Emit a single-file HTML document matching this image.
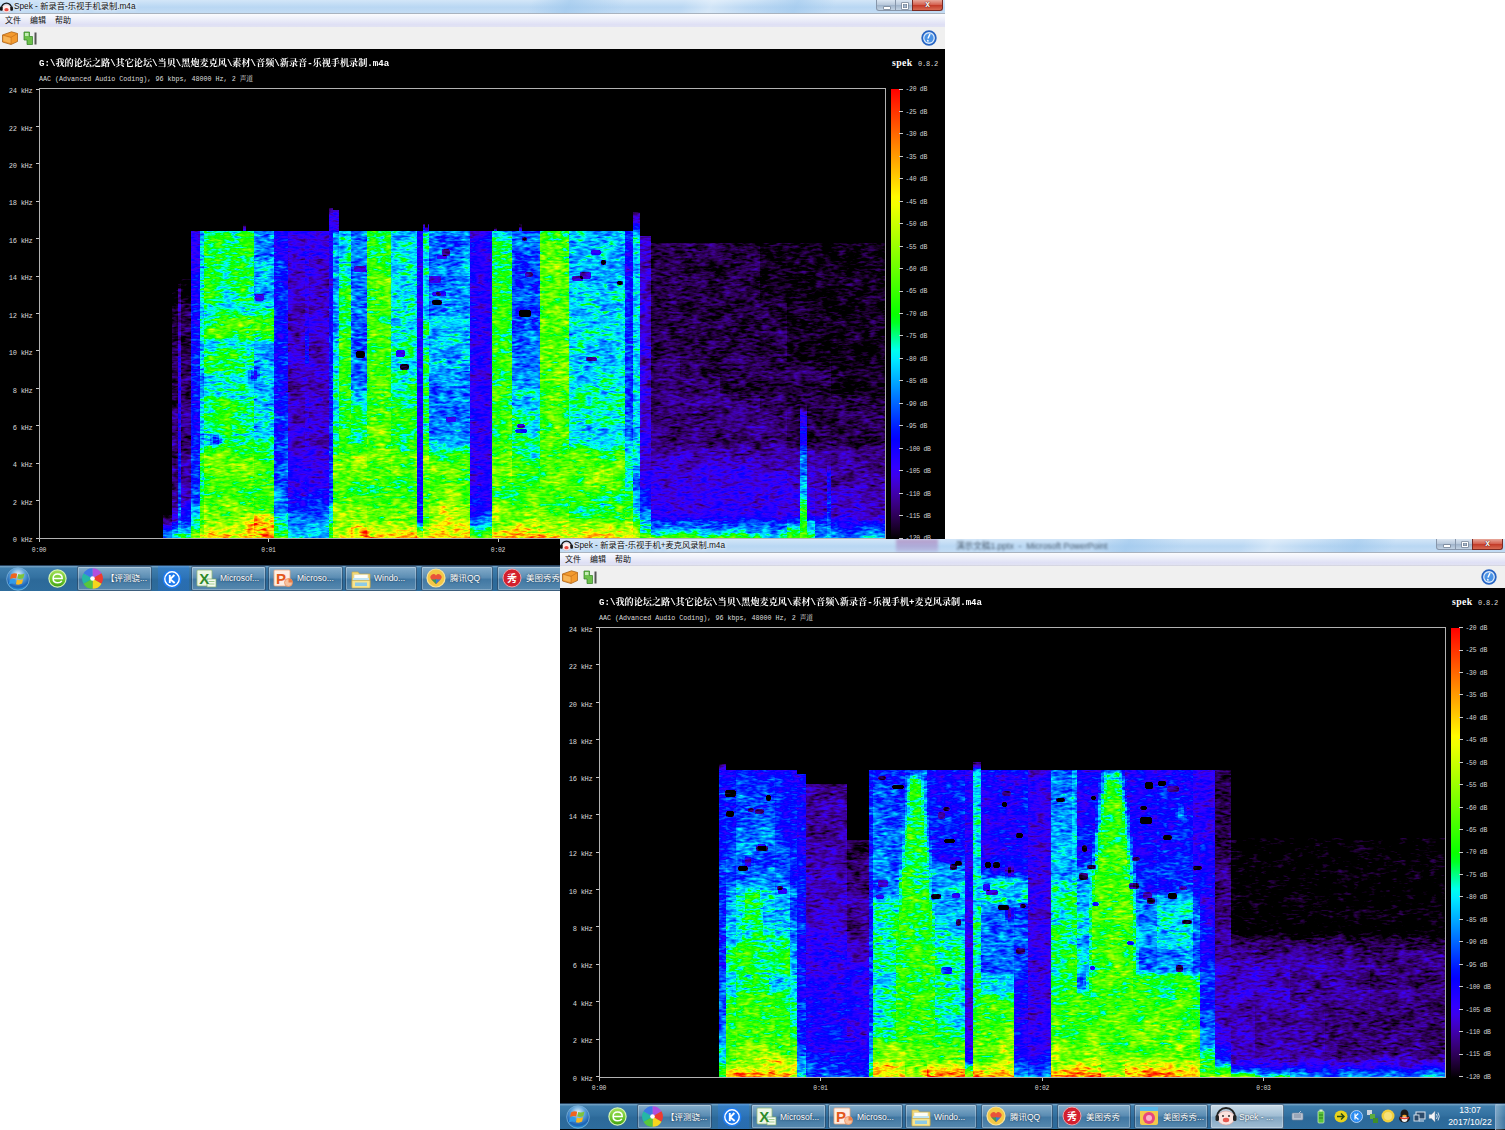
<!DOCTYPE html><html lang="zh"><head><meta charset="utf-8"><title>Spek</title><style>
*{margin:0;padding:0;box-sizing:border-box}
html,body{width:1505px;height:1130px;background:#fff;overflow:hidden}
body{position:relative;font-family:"Liberation Sans","Noto Sans CJK SC",sans-serif}
.win{position:absolute;width:945px;height:591px;overflow:hidden;background:#000}
.tb{position:absolute;left:0;top:0;width:945px;height:14px;background:linear-gradient(115deg,transparent 56%,rgba(150,195,235,.55) 60%,transparent 66%,transparent 72%,rgba(255,255,255,.35) 75%,transparent 79%,rgba(150,195,235,.5) 84%,transparent 88%),linear-gradient(#d3e6f8,#b9d7f3 55%,#c3dcf4);border-bottom:1px solid #a9b3bf}
.tb .ttl{position:absolute;left:14px;top:1px;font-size:8.25px;line-height:12px;color:#111;white-space:nowrap;text-shadow:0 0 3px #fff,0 0 5px #fff}
.tb .ttl s{text-decoration:none;font-size:7.85px}
.tb .ico{position:absolute;left:1px;top:2px;width:10px;height:10px;border-radius:5px;background:radial-gradient(circle at 40% 45%,#fff 0 25%,#f3c9c0 40%,#c8362c 75%,#7a1a14)}
.ctl{position:absolute;top:0;height:11px;border:1px solid #8796aa;border-top:0}
.ctl.min{left:876px;width:20px;border-radius:0 0 0 3px;background:linear-gradient(#dbe6f2,#b7c7da 50%,#9fb3ca 52%,#c2d2e3)}
.ctl.max{left:895px;width:18px;background:linear-gradient(#dbe6f2,#b7c7da 50%,#9fb3ca 52%,#c2d2e3)}
.ctl.cls{left:912px;width:31px;border-radius:0 0 3px 0;border-color:#7a2a22;background:linear-gradient(#e7a99c,#d4604f 48%,#c23a28 52%,#d86a52)}
.ctl i{position:absolute;display:block}
.ctl.min i{left:7px;top:6.5px;width:5.5px;height:2px;background:#fff;box-shadow:0 0 0 .6px #6b7686}
.ctl.max i{left:5.5px;top:3px;width:6.5px;height:5.5px;border:1.5px solid #fff;box-shadow:0 0 0 .6px #6b7686,inset 0 0 0 .5px #6b7686}
.ctl.cls span{position:absolute;left:0;width:100%;top:-2px;text-align:center;font:bold 8.5px/13px "Liberation Sans",sans-serif;color:#fff;text-shadow:0 0 1px #5b1a12,0 0 1px #5b1a12}
.mb{position:absolute;left:0;top:14px;width:945px;height:13.5px;background:linear-gradient(#fbfcfe,#eceef9 40%,#dfe0f5 75%,#e1e2f3 90%,#cfcfd8)}
.mb span{position:absolute;top:1px;font-size:8px;line-height:12px;color:#111;white-space:nowrap}
.tool{position:absolute;left:0;top:27px;width:945px;height:22px;background:#f0f0f0}
.cv{position:absolute;left:0;top:49px;width:945px;height:516px;background:#000}
.path{position:absolute;left:39px;top:58px;height:12px;font:bold 9.5px/12px "Liberation Mono","Noto Serif CJK SC",serif;color:#fff;white-space:nowrap;transform-origin:0 50%;transform:scaleX(.96)}
.info{position:absolute;left:39px;top:74px;height:10px;font:6.7px/10px "Liberation Mono","Noto Serif CJK SC",monospace;color:#ddd;white-space:nowrap;transform-origin:0 50%}
.spk{position:absolute;left:892px;top:57px;height:12px;font:bold 9.8px/12px "Liberation Serif",serif;color:#fff;white-space:nowrap;letter-spacing:.35px}
.ver{position:absolute;left:918px;top:58px;height:12px;font:7px/12px "Liberation Mono",monospace;color:#ddd;white-space:nowrap;letter-spacing:-.2px}
.frame{position:absolute;left:39px;top:88px;width:847px;height:451px;border:1px solid #b2b2b2;pointer-events:none}
.yl{position:absolute;left:0;width:32.5px;text-align:right;font:7px/8px "Liberation Mono",monospace;color:#d8d8d8;white-space:nowrap;letter-spacing:-.25px}
.yt{position:absolute;left:36px;width:3px;height:1px;background:#c8c8c8}
.xl{position:absolute;top:545.5px;width:40px;margin-left:-20px;text-align:center;font:6.4px/10px "Liberation Mono",monospace;color:#d8d8d8;letter-spacing:-.25px}
.xt{position:absolute;top:539px;width:1px;height:3px;background:#c8c8c8}
.cbar{position:absolute;left:891px;top:89px;width:9px;height:450px}
.dl{position:absolute;left:905.5px;width:40px;font:6.4px/8px "Liberation Mono",monospace;color:#d8d8d8;white-space:nowrap;letter-spacing:-.25px}
.dt{position:absolute;left:899px;width:4px;height:1px;background:#c8c8c8}
.plot{position:absolute;left:39px;top:89px;width:847px;height:449px;overflow:hidden;background:#000;filter:url(#pal)}
.plot i{position:absolute;top:0;height:449px;display:block}
.task{position:absolute;left:0;top:564.500px;width:945px;height:26px;background:linear-gradient(#7aa6c6,#3f7eac 9%,#3371a1 45%,#2c6999 55%,#2e6c9c 100%);border-top:1px solid #27425e}
.tbtn{position:absolute;top:0;height:25px;border:1px solid rgba(22,52,84,.6);border-radius:2px;background:linear-gradient(rgba(255,255,255,.36),rgba(255,255,255,.2) 46%,rgba(255,255,255,.1) 54%,rgba(255,255,255,.2));box-shadow:inset 0 0 0 1px rgba(255,255,255,.28)}
.tbtn.act{background:linear-gradient(rgba(255,255,255,.72),rgba(255,255,255,.55) 46%,rgba(255,255,255,.42) 54%,rgba(255,255,255,.55))}
.tbtn b{position:absolute;left:28px;top:6.5px;font:normal 8.5px/11px "Liberation Sans","Noto Sans CJK SC",sans-serif;color:#fff;white-space:nowrap;text-shadow:0 0 2px #123}
.tbtn b s{text-decoration:none;font-size:7.9px}
.tico{position:absolute;display:block}
.clock{position:absolute;left:880px;top:566.500px;width:60px;text-align:center;font:8.7px/11.5px "Liberation Sans",sans-serif;color:#fff;white-space:nowrap}
</style></head><body><svg width="0" height="0" style="position:absolute"><defs><filter id="pal" x="0" y="0" width="100%" height="100%" color-interpolation-filters="sRGB"><feColorMatrix in="SourceGraphic" type="matrix" values=".3333 .3333 .3333 0 0 .3333 .3333 .3333 0 0 .3333 .3333 .3333 0 0 0 0 0 0 1" result="lv0"/><feGaussianBlur in="lv0" stdDeviation="0.7 0.5" result="lv"/><feTurbulence type="fractalNoise" baseFrequency="0.13 0.4" numOctaves="2" seed="4" result="n1"/><feTurbulence type="fractalNoise" baseFrequency="0.045 0.075" numOctaves="2" seed="9" result="n2"/><feComposite in="n1" in2="n2" operator="arithmetic" k1="0" k2=".62" k3=".38" k4="0" result="n"/><feColorMatrix in="n" type="matrix" values="1 0 0 0 0 1 0 0 0 0 1 0 0 0 0 0 0 0 0 1" result="ng"/><feComposite in="lv" in2="ng" operator="arithmetic" k1=".72" k2=".64" k3=".1" k4="-.05" result="s"/><feComponentTransfer in="s" result="c"><feFuncR type="table" tableValues="0 0 0 0 0 0 0 0 0 0 0 0 0 0 0 0 0 0 0 0 0 0.0422 0.0805 0.115 0.145 0.172 0.195 0.214 0.228 0.239 0.247 0.25 0.249 0.244 0.236 0.224 0.196 0.166 0.137 0.107 0.0778 0.0483 0.0189 0 0 0 0 0 0 0 0 0 0 0 0 0 0 0 0 0 0 0 0 0 0 0 0 0 0 0 0.0357 0.0736 0.111 0.149 0.187 0.225 0.263 0.301 0.339 0.376 0.414 0.452 0.49 0.528 0.566 0.604 0.641 0.679 0.717 0.755 0.793 0.831 0.869 0.906 0.944 0.982 1 1 1 1 1 1 1 1 1 1 1 1 1 1 1 1 1 1 1 1 1 1 1 1 1"/><feFuncG type="table" tableValues="0 0 0 0 0 0 0 0 0 0 0 0 0 0 0 0 0 0 0 0 0 0 0 0 0 0 0 0 0 0 0 0 0 0 0 0 0 0 0 0 0 0 0 0.019 0.072 0.125 0.178 0.231 0.284 0.337 0.39 0.443 0.496 0.549 0.602 0.655 0.708 0.761 0.814 0.867 0.92 0.973 1 1 1 1 1 1 1 1 1 1 1 1 1 1 1 1 1 1 1 1 1 1 1 1 1 1 1 1 1 1 1 1 1 1 0.978 0.938 0.897 0.856 0.815 0.775 0.734 0.693 0.652 0.612 0.571 0.53 0.489 0.448 0.408 0.367 0.326 0.285 0.245 0.204 0.163 0.122 0.0815 0.0408 0"/><feFuncB type="table" tableValues="0 0 0 0 0 0 0 0 0 0 0 0 0 0 0 0 0 0 0 0 0 0.0662 0.132 0.199 0.265 0.331 0.397 0.464 0.53 0.596 0.662 0.729 0.795 0.861 0.927 0.994 1 1 1 1 1 1 1 1 1 1 1 1 1 1 1 1 1 1 1 1 1 1 1 1 1 1 0.935 0.803 0.67 0.538 0.405 0.273 0.14 0.0075 0 0 0 0 0 0 0 0 0 0 0 0 0 0 0 0 0 0 0 0 0 0 0 0 0 0 0 0 0 0 0 0 0 0 0 0 0 0 0 0 0 0 0 0 0 0 0 0 0 0 0"/></feComponentTransfer><feGaussianBlur in="c" stdDeviation="0.55"/></filter></defs></svg><div class="win" style="left:0px;top:0px"><div class="tb"><svg class="tico" style="left:0;top:1.500px" width="13" height="11" viewBox="0 0 24 20"><path d="M3 11a9 9 0 0 1 18 0" fill="none" stroke="#111" stroke-width="2.500"/><ellipse cx="12" cy="12" rx="8.500" ry="7" fill="#fdeeee" stroke="#d79a95" stroke-width=".6"/><rect x="0" y="8" width="5" height="8" rx="2" fill="#111"/><rect x="19" y="8" width="5" height="8" rx="2" fill="#111"/><ellipse cx="12" cy="14" rx="4" ry="3" fill="#e8473e"/></svg><div class="ttl">Spek - 新录音-乐视手机录制.m4a</div><div class="ctl min"><i></i></div><div class="ctl max"><i></i></div><div class="ctl cls"><span>x</span></div></div><div class="mb"><span style="left:5px">文件</span><span style="left:30px">编辑</span><span style="left:55px">帮助</span></div><div class="tool"><svg class="tico" style="left:1px;top:3px" width="18" height="16" viewBox="0 0 18 16"><path d="M1.500 5l9-3.200l6 1.700v8l-6.500 3l-8.500-2.500z" fill="#f39a2e" stroke="#a9631a" stroke-width=".8"/><path d="M1.500 5l8.500 2.300l6.500-3.800M10 7.300v7" fill="none" stroke="#c9741d" stroke-width=".8"/><path d="M2.500 6l7 2v5l-7-2z" fill="#f7b558"/></svg><svg class="tico" style="left:22px;top:3px" width="17" height="16" viewBox="0 0 17 16"><rect x="12.500" y="2.500" width="2" height="12" fill="#555"/><path d="M2 2h5.500v4.500h3v8h-5.500v-4.500h-3z" fill="#6cc04a" stroke="#2f7d23" stroke-width=".7"/><path d="M3 3h3.500v3h-3.500z" fill="#c5ecb4"/></svg><svg class="tico" style="left:921px;top:3px" width="16" height="16" viewBox="0 0 16 16"><circle cx="8" cy="8" r="6.800" fill="#dbeafb" stroke="#2765c4" stroke-width="1.800"/><circle cx="8" cy="8" r="4.600" fill="#4b93e6"/><path d="M8.800 4.500l-1.600 3.500M6.800 10.500l.2.600" stroke="#fff" stroke-width="1.500" stroke-linecap="round"/></svg></div><div class="cv"></div><div class="path">G:\我的论坛之路\其它论坛\当贝\黑炮麦克风\素材\音频\新录音-乐视手机录制.m4a</div><div class="info">AAC (Advanced Audio Coding), 96 kbps, 48000 Hz, 2 声道</div><div class="spk">spek</div><div class="ver">0.8.2</div><div class="plot"><i style="left:124px;width:3.1px;background:linear-gradient(#000 94.2%,#222 94.2%,#333,#444,#555,#666,#776)"></i><i style="left:127px;width:3.1px;background:linear-gradient(#000 94.2%,#222 94.2%,#333,#444,#555,#666,#776)"></i><i style="left:130px;width:3.1px;background:linear-gradient(#000 94.2%,#222 94.2%,#333,#444,#555,#666,#776)"></i><i style="left:133px;width:3.1px;background:linear-gradient(#000 44.8%,#322 44.8%,#322,#322,#322,#332,#332,#332,#333,#333,#333,#333,#333,#333,#333,#333,#333,#333,#333,#333,#333,#333,#333,#333,#333,#333,#433,#433,#433,#433,#433,#433,#433,#433,#433,#433,#433,#433,#433,#433,#433,#433,#433,#433,#443,#444,#444,#544,#555,#666,#776,#877)"></i><i style="left:136px;width:3.1px;background:linear-gradient(#000 44.8%,#322 44.8%,#322,#322,#322,#332,#332,#332,#333,#333,#333,#333,#333,#333,#333,#333,#333,#333,#333,#333,#333,#333,#333,#333,#333,#333,#433,#433,#433,#433,#433,#433,#433,#433,#433,#433,#433,#433,#433,#433,#433,#433,#433,#433,#443,#444,#444,#544,#555,#666,#776,#877)"></i><i style="left:139px;width:3.1px;background:linear-gradient(#000 42.5%,#322 42.5%,#332,#333,#433,#433,#443,#443,#443,#443,#444,#444,#444,#444,#444,#444,#444,#544,#544,#544,#544,#544,#544,#554,#554,#554,#554,#554,#554,#554,#555,#555,#555,#555,#555,#555,#655,#655,#655,#655,#655,#655,#665,#665,#666,#666,#666,#766,#766,#766,#776,#777,#877,#877)"></i><i style="left:142px;width:2.6px;background:linear-gradient(#000 40.3%,#222 40.3%,#222,#322,#322,#322,#322,#332,#332,#332,#333,#333,#433,#433,#333,#333,#333,#333,#333,#333,#333,#333,#333,#433,#433,#433,#433,#433,#433,#433,#433,#433,#433,#433,#433,#433,#433,#433,#433,#433,#443,#443,#443,#443,#443,#444,#444,#444,#544,#554,#555,#655,#666,#776,#877,#988)"></i><i style="left:144.5px;width:2.6px;background:linear-gradient(#000 40.3%,#222 40.3%,#222,#322,#322,#322,#322,#332,#332,#332,#333,#333,#433,#433,#333,#333,#333,#333,#333,#333,#333,#333,#333,#433,#433,#433,#433,#433,#433,#433,#433,#433,#433,#433,#433,#433,#433,#433,#433,#433,#443,#443,#443,#443,#443,#444,#444,#444,#544,#554,#555,#655,#666,#776,#877,#988)"></i><i style="left:147px;width:2.6px;background:linear-gradient(#000 40.3%,#222 40.3%,#222,#322,#322,#322,#322,#332,#332,#332,#333,#333,#433,#433,#333,#333,#333,#333,#333,#333,#333,#333,#333,#433,#433,#433,#433,#433,#433,#433,#433,#433,#433,#433,#433,#433,#433,#433,#433,#433,#443,#443,#443,#443,#443,#444,#444,#444,#544,#554,#555,#655,#666,#776,#877,#988)"></i><i style="left:149.5px;width:2.6px;background:linear-gradient(#000 40.3%,#222 40.3%,#222,#322,#322,#322,#322,#332,#332,#332,#333,#333,#433,#433,#333,#333,#333,#333,#333,#333,#333,#333,#333,#433,#433,#433,#433,#433,#433,#433,#433,#433,#433,#433,#433,#433,#433,#433,#433,#433,#443,#443,#443,#443,#443,#444,#444,#444,#544,#554,#555,#655,#666,#776,#877,#988)"></i><i style="left:152px;width:3.1px;background:linear-gradient(#000 31.6%,#554 31.6%,#554,#554,#554,#554,#554,#554,#554,#555,#555,#555,#555,#555,#555,#555,#555,#655,#655,#655,#655,#655,#655,#655,#655,#655,#655,#655,#655,#655,#655,#655,#655,#655,#655,#655,#655,#655,#655,#655,#655,#655,#655,#655,#655,#665,#665,#665,#665,#665,#665,#665,#666,#666,#666,#766,#776,#777,#887,#888,#998,#a99,#aaa)"></i><i style="left:155px;width:3.1px;background:linear-gradient(#000 31.6%,#554 31.6%,#554,#554,#554,#554,#554,#554,#554,#555,#555,#555,#555,#555,#555,#555,#555,#655,#655,#655,#665,#655,#655,#655,#655,#655,#655,#655,#655,#655,#655,#655,#655,#655,#655,#655,#655,#655,#655,#655,#655,#655,#655,#655,#655,#665,#665,#665,#665,#665,#665,#665,#666,#666,#666,#766,#776,#777,#887,#888,#998,#a99,#aaa)"></i><i style="left:158px;width:3.1px;background:linear-gradient(#000 31.6%,#554 31.6%,#554,#554,#554,#554,#554,#554,#554,#555,#555,#555,#555,#555,#555,#555,#555,#655,#655,#655,#665,#655,#655,#655,#655,#655,#655,#655,#655,#655,#655,#655,#655,#655,#655,#655,#655,#655,#655,#655,#655,#655,#655,#655,#655,#665,#665,#665,#665,#665,#665,#665,#666,#666,#666,#766,#776,#777,#887,#888,#998,#a99,#aaa)"></i><i style="left:161px;width:2.1px;background:linear-gradient(#000 31.6%,#777 31.6%,#877,#877,#877,#877,#877,#877,#877,#877,#877,#877,#877,#877,#877,#877,#776,#776,#887,#988,#988,#988,#888,#776,#776,#777,#877,#877,#877,#877,#776,#776,#776,#776,#776,#887,#887,#887,#887,#887,#887,#877,#777,#777,#887,#988,#999,#999,#999,#999,#998,#988,#988,#888,#988,#998,#999,#999,#a99,#a99,#aaa,#bba,#ccb)"></i><i style="left:163px;width:2.1px;background:linear-gradient(#000 31.6%,#777 31.6%,#877,#877,#877,#877,#877,#877,#877,#877,#877,#877,#877,#877,#877,#877,#776,#776,#887,#988,#988,#988,#888,#776,#776,#777,#877,#877,#877,#877,#776,#776,#776,#776,#776,#887,#887,#887,#887,#887,#887,#877,#777,#777,#887,#988,#999,#999,#999,#999,#998,#988,#988,#888,#988,#998,#999,#999,#a99,#a99,#aaa,#bba,#ccb)"></i><i style="left:165px;width:3.1px;background:linear-gradient(#000 31.6%,#888 31.6%,#998,#998,#998,#998,#998,#998,#998,#998,#998,#998,#998,#998,#998,#988,#887,#887,#998,#a99,#a99,#a99,#999,#887,#887,#888,#998,#998,#998,#998,#887,#887,#887,#887,#887,#998,#998,#998,#998,#998,#998,#988,#887,#887,#998,#a99,#aaa,#aaa,#aaa,#aaa,#aa9,#a99,#a99,#999,#a99,#aa9,#aaa,#aaa,#baa,#baa,#bbb,#ccb,#ddc)"></i><i style="left:167.9px;width:3.1px;background:linear-gradient(#000 31.6%,#888 31.6%,#998,#998,#998,#998,#998,#998,#998,#998,#998,#998,#998,#998,#998,#988,#887,#887,#998,#a99,#a99,#a99,#999,#887,#887,#888,#998,#998,#998,#998,#887,#887,#887,#887,#887,#998,#998,#998,#998,#998,#998,#988,#877,#877,#998,#a99,#aaa,#aaa,#aaa,#aaa,#aa9,#a99,#a99,#999,#a99,#aa9,#aaa,#aaa,#baa,#baa,#bbb,#ccb,#ddc)"></i><i style="left:170.9px;width:3.1px;background:linear-gradient(#000 31.6%,#888 31.6%,#998,#998,#998,#998,#998,#998,#998,#998,#998,#998,#998,#998,#998,#988,#887,#887,#998,#a99,#a99,#a99,#999,#887,#887,#888,#998,#998,#998,#998,#887,#887,#887,#887,#887,#998,#998,#998,#998,#998,#998,#988,#766,#766,#998,#a99,#aaa,#aaa,#aaa,#aaa,#aa9,#a99,#a99,#999,#a99,#aa9,#aaa,#aaa,#baa,#baa,#bbb,#ccb,#ddc)"></i><i style="left:173.8px;width:3.1px;background:linear-gradient(#000 31.6%,#888 31.6%,#998,#998,#998,#998,#998,#998,#998,#998,#998,#998,#998,#998,#998,#988,#887,#887,#998,#a99,#a99,#a99,#999,#887,#887,#888,#998,#998,#998,#998,#887,#887,#887,#887,#887,#998,#998,#998,#998,#998,#998,#988,#665,#655,#998,#a99,#aaa,#aaa,#aaa,#aaa,#aa9,#a99,#a99,#999,#a99,#aa9,#aaa,#aaa,#baa,#baa,#bbb,#ccb,#ddc)"></i><i style="left:176.8px;width:3.1px;background:linear-gradient(#000 31.6%,#888 31.6%,#998,#998,#998,#998,#998,#998,#998,#998,#998,#998,#998,#998,#998,#988,#887,#887,#998,#a99,#aa9,#a99,#999,#887,#887,#888,#998,#998,#998,#998,#887,#887,#887,#887,#887,#998,#998,#998,#998,#998,#998,#988,#666,#665,#998,#a99,#aaa,#aaa,#aaa,#aaa,#aa9,#a99,#a99,#999,#a99,#aa9,#aaa,#aaa,#baa,#baa,#bbb,#ccb,#ddc)"></i><i style="left:179.7px;width:3.1px;background:linear-gradient(#000 31.6%,#888 31.6%,#998,#998,#998,#998,#998,#998,#998,#998,#998,#998,#998,#998,#998,#988,#887,#888,#999,#a99,#aa9,#a99,#999,#887,#887,#888,#998,#998,#998,#998,#887,#887,#887,#887,#887,#998,#998,#998,#998,#998,#998,#988,#777,#777,#998,#a99,#aaa,#aaa,#aaa,#aaa,#aa9,#a99,#a99,#999,#a99,#aa9,#aaa,#aaa,#baa,#baa,#bbb,#ccb,#ddc)"></i><i style="left:182.6px;width:3.1px;background:linear-gradient(#000 31.6%,#888 31.6%,#998,#998,#998,#998,#998,#998,#998,#998,#998,#998,#998,#998,#998,#988,#887,#888,#999,#a99,#aa9,#a99,#999,#887,#887,#888,#998,#998,#998,#998,#887,#887,#887,#887,#887,#998,#998,#998,#998,#998,#998,#988,#887,#887,#998,#a99,#aaa,#aaa,#aaa,#aaa,#aa9,#a99,#a99,#999,#a99,#aa9,#aaa,#aaa,#baa,#baa,#bbb,#ccb,#ddc)"></i><i style="left:185.6px;width:3.1px;background:linear-gradient(#000 31.6%,#888 31.6%,#998,#998,#998,#998,#998,#998,#998,#998,#998,#998,#998,#998,#998,#988,#887,#888,#999,#a99,#aa9,#a99,#999,#887,#887,#888,#998,#998,#998,#998,#887,#887,#887,#887,#887,#998,#998,#998,#998,#998,#998,#988,#888,#888,#998,#a99,#aaa,#aaa,#aaa,#aaa,#aa9,#a99,#a99,#999,#a99,#aa9,#aaa,#aaa,#baa,#baa,#bbb,#ccb,#ddc)"></i><i style="left:188.5px;width:3.1px;background:linear-gradient(#000 31.6%,#888 31.6%,#998,#998,#998,#998,#998,#998,#998,#998,#998,#998,#998,#998,#998,#988,#887,#888,#999,#a99,#aa9,#a99,#999,#887,#887,#888,#998,#998,#998,#998,#887,#887,#887,#887,#887,#998,#998,#998,#998,#998,#998,#988,#888,#888,#998,#a99,#aaa,#aaa,#aaa,#aaa,#aa9,#a99,#a99,#999,#a99,#aa9,#aaa,#aaa,#baa,#baa,#bbb,#ccb,#ddc)"></i><i style="left:191.5px;width:3.1px;background:linear-gradient(#000 31.6%,#888 31.6%,#998,#998,#998,#998,#998,#998,#998,#998,#998,#998,#998,#998,#998,#988,#887,#888,#999,#a99,#aa9,#a99,#999,#887,#887,#888,#998,#998,#998,#998,#887,#887,#887,#887,#887,#998,#998,#998,#998,#998,#998,#988,#888,#888,#998,#a99,#aaa,#aaa,#aaa,#aaa,#aa9,#a99,#a99,#999,#a99,#aa9,#aaa,#aaa,#baa,#baa,#bbb,#ccb,#ddc)"></i><i style="left:194.4px;width:3.1px;background:linear-gradient(#000 31.6%,#888 31.6%,#998,#998,#998,#998,#998,#998,#998,#998,#998,#998,#998,#998,#998,#988,#887,#888,#999,#a99,#aa9,#a99,#999,#887,#887,#888,#998,#998,#998,#998,#887,#887,#887,#887,#887,#998,#998,#998,#998,#998,#998,#988,#888,#888,#998,#a99,#aaa,#aaa,#aaa,#aaa,#aa9,#a99,#a99,#999,#a99,#aa9,#aaa,#aaa,#baa,#bba,#bbb,#ccb,#ddc)"></i><i style="left:197.4px;width:3.1px;background:linear-gradient(#000 31.6%,#888 31.6%,#998,#998,#998,#998,#998,#998,#998,#998,#998,#998,#998,#998,#998,#988,#887,#888,#999,#a99,#aa9,#a99,#999,#887,#887,#888,#998,#998,#998,#998,#887,#887,#887,#887,#887,#998,#998,#998,#998,#998,#998,#988,#888,#888,#998,#a99,#aaa,#aaa,#aaa,#aaa,#aa9,#a99,#a99,#999,#a99,#aa9,#aaa,#aaa,#baa,#bba,#bbb,#ccb,#ddc)"></i><i style="left:200.3px;width:3.1px;background:linear-gradient(#000 31.6%,#888 31.6%,#998,#998,#998,#998,#998,#998,#998,#998,#998,#998,#998,#998,#998,#988,#887,#888,#999,#a99,#aa9,#a99,#999,#887,#887,#888,#998,#998,#998,#998,#887,#887,#887,#887,#887,#998,#998,#998,#998,#998,#998,#988,#888,#888,#998,#a99,#aaa,#aaa,#aaa,#aaa,#aa9,#a99,#a99,#999,#a99,#aa9,#aaa,#aaa,#baa,#bba,#bbb,#ccb,#ddc)"></i><i style="left:203.2px;width:3.1px;background:linear-gradient(#000 31.6%,#888 31.6%,#998,#998,#998,#998,#998,#998,#998,#998,#998,#998,#998,#998,#998,#988,#887,#888,#999,#a99,#aa9,#a99,#999,#887,#887,#888,#998,#998,#998,#988,#887,#887,#887,#887,#887,#998,#998,#998,#998,#998,#998,#988,#888,#888,#998,#a99,#aaa,#aaa,#aaa,#aaa,#aa9,#a99,#a99,#999,#a99,#aa9,#aaa,#aaa,#baa,#bbb,#bbb,#ccc,#ddc)"></i><i style="left:206.2px;width:3.1px;background:linear-gradient(#000 31.6%,#888 31.6%,#998,#998,#998,#998,#998,#998,#998,#998,#998,#998,#998,#998,#998,#988,#887,#887,#998,#a99,#aa9,#a99,#999,#887,#887,#888,#998,#998,#988,#988,#887,#887,#887,#887,#887,#998,#998,#998,#998,#998,#998,#988,#888,#888,#998,#a99,#aaa,#aaa,#aaa,#aaa,#aa9,#a99,#a99,#999,#a99,#aa9,#aaa,#aaa,#bba,#cbb,#bbb,#ccc,#ddc)"></i><i style="left:209.1px;width:3.1px;background:linear-gradient(#000 31.6%,#888 31.6%,#998,#998,#998,#998,#998,#998,#998,#998,#998,#998,#998,#998,#998,#988,#887,#887,#998,#a99,#a99,#a99,#999,#887,#887,#888,#998,#998,#988,#887,#776,#877,#887,#887,#887,#998,#998,#998,#998,#998,#998,#988,#888,#888,#998,#a99,#aaa,#aaa,#aaa,#aaa,#aa9,#a99,#a99,#999,#a99,#aa9,#aaa,#aaa,#bba,#cbb,#cbb,#ccc,#ddc)"></i><i style="left:212.1px;width:3.1px;background:linear-gradient(#000 31.6%,#888 31.6%,#998,#998,#998,#998,#998,#998,#998,#998,#998,#998,#998,#998,#998,#988,#887,#887,#998,#a99,#a99,#a99,#999,#887,#887,#888,#998,#998,#988,#776,#555,#877,#887,#887,#887,#998,#998,#998,#998,#998,#998,#988,#888,#888,#998,#a99,#aaa,#aaa,#aaa,#aaa,#aa9,#a99,#a99,#999,#a99,#aa9,#aaa,#aaa,#bbb,#ccb,#cbb,#ccc,#ddc)"></i><i style="left:215px;width:3px;background:linear-gradient(#000 31.6%,#776 31.6%,#776,#776,#776,#776,#776,#777,#777,#777,#777,#777,#777,#777,#777,#877,#877,#887,#998,#999,#999,#999,#998,#887,#777,#777,#777,#777,#777,#555,#544,#776,#777,#777,#777,#777,#877,#877,#877,#877,#877,#887,#887,#888,#988,#999,#999,#a99,#a99,#a99,#a99,#a99,#999,#999,#998,#999,#aa9,#bba,#dcc,#edd,#ddc,#ddc,#edd)"></i><i style="left:217.9px;width:3px;background:linear-gradient(#000 31.6%,#776 31.6%,#776,#776,#776,#776,#776,#777,#777,#777,#777,#777,#777,#777,#777,#877,#877,#887,#998,#999,#999,#999,#998,#887,#777,#777,#777,#777,#777,#666,#666,#777,#777,#777,#777,#777,#877,#877,#877,#877,#877,#887,#887,#888,#988,#999,#999,#a99,#a99,#a99,#a99,#a99,#999,#999,#998,#999,#aa9,#baa,#ccc,#ddd,#ddc,#ddc,#edd)"></i><i style="left:220.7px;width:3px;background:linear-gradient(#000 31.6%,#776 31.6%,#776,#776,#776,#776,#776,#777,#777,#777,#777,#777,#777,#777,#777,#877,#877,#887,#998,#999,#999,#998,#998,#887,#777,#777,#777,#777,#777,#777,#776,#777,#777,#777,#777,#777,#877,#877,#877,#877,#877,#887,#887,#888,#988,#999,#999,#a99,#a99,#a99,#a99,#a99,#999,#999,#998,#999,#aa9,#baa,#ccc,#ddd,#dcc,#ddc,#edd)"></i><i style="left:223.6px;width:3px;background:linear-gradient(#000 31.6%,#776 31.6%,#776,#776,#776,#776,#776,#777,#777,#777,#777,#777,#777,#777,#777,#877,#877,#887,#988,#998,#999,#998,#998,#887,#777,#777,#777,#777,#777,#777,#777,#777,#777,#777,#777,#777,#877,#877,#877,#877,#877,#887,#887,#888,#988,#999,#999,#a99,#a99,#a99,#a99,#a99,#999,#999,#998,#999,#aa9,#baa,#ccc,#ddc,#dcc,#ddc,#edd)"></i><i style="left:226.4px;width:3px;background:linear-gradient(#000 31.6%,#776 31.6%,#776,#776,#776,#776,#776,#777,#777,#777,#777,#777,#777,#777,#777,#877,#877,#887,#988,#998,#999,#998,#988,#887,#777,#777,#777,#777,#777,#777,#777,#777,#777,#777,#777,#777,#877,#877,#877,#877,#877,#887,#887,#888,#988,#999,#999,#a99,#a99,#a99,#a99,#a99,#999,#999,#998,#999,#aa9,#baa,#ccb,#dcc,#dcc,#ddc,#edd)"></i><i style="left:229.3px;width:3px;background:linear-gradient(#000 31.6%,#776 31.6%,#776,#776,#776,#776,#776,#777,#777,#777,#777,#777,#777,#777,#777,#877,#877,#887,#988,#998,#998,#998,#988,#887,#777,#777,#777,#777,#777,#777,#777,#777,#777,#777,#777,#777,#877,#877,#877,#877,#877,#887,#887,#888,#988,#999,#999,#a99,#a99,#a99,#a99,#a99,#999,#999,#998,#999,#aa9,#baa,#ccb,#dcc,#dcc,#ddc,#edd)"></i><i style="left:232.1px;width:3px;background:linear-gradient(#000 31.6%,#776 31.6%,#776,#776,#776,#776,#776,#777,#777,#777,#777,#777,#777,#777,#777,#877,#877,#887,#988,#998,#998,#998,#988,#887,#777,#777,#777,#777,#777,#777,#777,#777,#777,#777,#777,#777,#877,#877,#877,#877,#877,#887,#887,#888,#988,#999,#999,#a99,#a99,#a99,#a99,#a99,#999,#999,#998,#999,#aa9,#baa,#ccb,#ccc,#dcc,#ddc,#edd)"></i><i style="left:235px;width:2.9px;background:linear-gradient(#000 31.6%,#555 31.6%,#555,#555,#555,#555,#555,#655,#655,#655,#655,#655,#655,#655,#655,#655,#655,#655,#655,#655,#655,#655,#655,#655,#655,#655,#655,#655,#655,#655,#655,#655,#655,#655,#655,#655,#655,#655,#665,#665,#665,#665,#665,#665,#666,#666,#666,#666,#666,#666,#666,#666,#666,#766,#766,#766,#776,#777,#887,#888,#988,#998,#a99)"></i><i style="left:237.8px;width:2.9px;background:linear-gradient(#000 31.6%,#555 31.6%,#555,#555,#555,#555,#555,#655,#655,#655,#655,#655,#655,#655,#655,#655,#655,#655,#655,#655,#655,#655,#655,#655,#655,#655,#655,#655,#655,#655,#655,#655,#655,#655,#655,#655,#655,#655,#665,#665,#665,#665,#665,#665,#666,#666,#666,#666,#666,#666,#666,#666,#666,#766,#766,#766,#776,#777,#877,#888,#988,#998,#a99)"></i><i style="left:240.6px;width:2.9px;background:linear-gradient(#000 31.6%,#555 31.6%,#555,#555,#555,#555,#555,#655,#655,#655,#655,#655,#655,#655,#655,#655,#655,#655,#655,#655,#655,#655,#655,#655,#655,#655,#655,#655,#655,#655,#655,#655,#655,#655,#655,#655,#655,#655,#665,#665,#665,#665,#665,#665,#666,#666,#666,#666,#666,#666,#666,#666,#666,#766,#766,#766,#776,#777,#877,#888,#988,#998,#a99)"></i><i style="left:243.4px;width:2.9px;background:linear-gradient(#000 31.6%,#555 31.6%,#555,#555,#555,#555,#555,#655,#655,#655,#655,#655,#655,#655,#655,#655,#655,#655,#655,#655,#655,#655,#655,#655,#655,#655,#655,#655,#655,#655,#655,#655,#655,#655,#655,#655,#655,#655,#665,#665,#665,#665,#665,#665,#666,#666,#666,#666,#666,#666,#666,#666,#666,#766,#766,#766,#776,#777,#877,#888,#988,#998,#a99)"></i><i style="left:246.2px;width:2.9px;background:linear-gradient(#000 31.6%,#555 31.6%,#555,#555,#555,#555,#555,#655,#655,#655,#655,#655,#655,#655,#655,#655,#655,#655,#655,#655,#655,#655,#655,#655,#655,#655,#655,#655,#655,#655,#655,#655,#655,#655,#655,#655,#655,#655,#665,#665,#665,#665,#665,#665,#666,#666,#666,#666,#666,#666,#666,#666,#666,#766,#766,#766,#776,#777,#877,#888,#988,#998,#a99)"></i><i style="left:249px;width:3px;background:linear-gradient(#000 31.6%,#554 31.6%,#544,#544,#544,#544,#544,#444,#444,#444,#444,#444,#444,#444,#444,#444,#444,#444,#444,#444,#444,#444,#444,#444,#444,#444,#444,#444,#444,#444,#444,#444,#444,#444,#444,#444,#444,#444,#444,#444,#444,#444,#444,#444,#444,#544,#544,#544,#544,#554,#554,#554,#554,#555,#655,#655,#665,#666,#766,#776,#777,#877,#887)"></i><i style="left:251.8px;width:3px;background:linear-gradient(#000 31.6%,#554 31.6%,#544,#544,#544,#544,#544,#444,#444,#444,#444,#444,#444,#444,#444,#444,#444,#444,#444,#444,#444,#444,#444,#444,#444,#444,#444,#444,#444,#444,#444,#444,#444,#444,#444,#444,#444,#444,#444,#444,#444,#444,#444,#444,#444,#544,#544,#544,#544,#554,#554,#554,#554,#555,#655,#655,#665,#666,#766,#776,#777,#877,#887)"></i><i style="left:254.7px;width:3px;background:linear-gradient(#000 31.6%,#554 31.6%,#544,#544,#544,#544,#544,#444,#444,#444,#444,#444,#444,#444,#444,#444,#444,#444,#444,#444,#444,#444,#444,#444,#444,#444,#444,#444,#444,#444,#444,#444,#444,#444,#444,#444,#444,#444,#444,#444,#444,#444,#444,#444,#444,#544,#544,#544,#544,#554,#554,#554,#554,#555,#655,#655,#665,#666,#766,#776,#777,#877,#887)"></i><i style="left:257.5px;width:3px;background:linear-gradient(#000 31.6%,#554 31.6%,#544,#544,#544,#544,#544,#444,#444,#444,#444,#444,#444,#444,#444,#444,#444,#444,#444,#444,#444,#444,#444,#444,#444,#444,#444,#444,#444,#444,#444,#444,#444,#444,#444,#444,#444,#444,#444,#444,#444,#444,#444,#444,#444,#544,#544,#544,#544,#554,#554,#554,#554,#555,#655,#655,#665,#666,#766,#776,#777,#877,#887)"></i><i style="left:260.3px;width:3px;background:linear-gradient(#000 31.6%,#554 31.6%,#544,#544,#544,#544,#544,#444,#444,#444,#444,#444,#444,#444,#444,#444,#444,#444,#444,#444,#444,#444,#444,#444,#444,#444,#444,#444,#444,#444,#444,#444,#444,#444,#444,#444,#444,#444,#444,#444,#444,#444,#444,#444,#444,#544,#544,#544,#544,#554,#554,#554,#554,#555,#655,#655,#665,#666,#766,#776,#777,#877,#887)"></i><i style="left:263.2px;width:3px;background:linear-gradient(#000 31.6%,#554 31.6%,#544,#544,#544,#544,#544,#444,#444,#444,#444,#444,#444,#444,#444,#444,#444,#444,#444,#444,#444,#444,#444,#444,#444,#444,#444,#444,#444,#444,#444,#444,#444,#444,#444,#444,#444,#444,#444,#444,#444,#444,#444,#444,#444,#544,#544,#544,#544,#554,#554,#554,#554,#555,#655,#655,#665,#666,#766,#776,#777,#877,#887)"></i><i style="left:266px;width:2.1px;background:linear-gradient(#000 31.6%,#554 31.6%,#554,#554,#554,#554,#554,#554,#544,#544,#544,#544,#544,#544,#544,#544,#544,#544,#544,#544,#544,#554,#655,#655,#655,#655,#655,#555,#444,#444,#444,#444,#444,#444,#544,#544,#544,#544,#544,#544,#544,#544,#544,#544,#544,#544,#544,#544,#554,#554,#554,#555,#555,#555,#655,#665,#665,#666,#766,#776,#777,#877,#887)"></i><i style="left:268px;width:2.1px;background:linear-gradient(#000 31.6%,#554 31.6%,#554,#554,#554,#554,#554,#554,#544,#544,#544,#544,#544,#544,#544,#544,#544,#544,#544,#544,#544,#554,#655,#655,#655,#655,#655,#555,#444,#444,#444,#444,#444,#444,#544,#544,#544,#544,#544,#544,#544,#544,#544,#544,#544,#544,#544,#544,#554,#554,#554,#555,#555,#555,#655,#665,#665,#666,#766,#776,#777,#877,#887)"></i><i style="left:270px;width:3px;background:linear-gradient(#000 31.6%,#554 31.6%,#544,#544,#544,#544,#544,#444,#444,#444,#444,#444,#444,#444,#444,#444,#444,#444,#444,#444,#444,#444,#444,#444,#444,#444,#444,#444,#444,#444,#444,#444,#444,#444,#444,#444,#444,#444,#444,#444,#444,#444,#444,#444,#444,#544,#544,#544,#544,#554,#554,#554,#554,#555,#655,#655,#665,#666,#766,#776,#777,#877,#887)"></i><i style="left:272.9px;width:3px;background:linear-gradient(#000 31.6%,#554 31.6%,#544,#544,#544,#544,#544,#444,#444,#444,#444,#444,#444,#444,#444,#444,#444,#444,#444,#444,#444,#444,#444,#444,#444,#444,#444,#444,#444,#444,#444,#444,#444,#444,#444,#444,#444,#444,#444,#444,#444,#444,#444,#444,#444,#544,#544,#544,#544,#554,#554,#554,#554,#555,#655,#655,#665,#666,#766,#776,#777,#877,#887)"></i><i style="left:275.7px;width:3px;background:linear-gradient(#000 31.6%,#554 31.6%,#544,#544,#544,#544,#544,#444,#444,#444,#444,#444,#444,#444,#444,#444,#444,#444,#444,#444,#444,#444,#444,#444,#444,#444,#444,#444,#444,#444,#444,#444,#444,#444,#444,#444,#444,#444,#444,#444,#444,#444,#444,#444,#444,#544,#544,#544,#544,#554,#554,#554,#554,#555,#655,#655,#665,#666,#766,#776,#777,#877,#887)"></i><i style="left:278.6px;width:3px;background:linear-gradient(#000 31.6%,#554 31.6%,#544,#544,#544,#544,#544,#444,#444,#444,#444,#444,#444,#444,#444,#444,#444,#444,#444,#444,#444,#444,#444,#444,#444,#444,#444,#444,#444,#444,#444,#444,#444,#444,#444,#444,#444,#444,#444,#444,#444,#444,#444,#444,#444,#544,#544,#544,#544,#554,#554,#554,#554,#555,#655,#655,#665,#666,#766,#776,#777,#877,#887)"></i><i style="left:281.4px;width:3px;background:linear-gradient(#000 31.6%,#554 31.6%,#544,#544,#544,#544,#544,#444,#444,#444,#444,#444,#444,#444,#444,#444,#444,#444,#444,#444,#444,#444,#444,#444,#444,#444,#444,#444,#444,#444,#444,#444,#444,#444,#444,#444,#444,#444,#444,#444,#444,#444,#444,#444,#444,#544,#544,#544,#544,#554,#554,#554,#554,#555,#655,#655,#665,#666,#766,#776,#777,#877,#887)"></i><i style="left:284.3px;width:3px;background:linear-gradient(#000 31.6%,#554 31.6%,#544,#544,#544,#544,#544,#444,#444,#444,#444,#444,#444,#444,#444,#444,#444,#444,#444,#444,#444,#444,#444,#444,#444,#444,#444,#444,#444,#444,#444,#444,#444,#444,#444,#444,#444,#444,#444,#444,#444,#444,#444,#444,#444,#544,#544,#544,#544,#554,#554,#554,#554,#555,#655,#655,#665,#666,#766,#776,#777,#877,#887)"></i><i style="left:287.1px;width:3px;background:linear-gradient(#000 31.6%,#554 31.6%,#544,#544,#544,#544,#544,#444,#444,#444,#444,#444,#444,#444,#444,#444,#444,#444,#444,#444,#444,#444,#444,#444,#444,#444,#444,#444,#444,#444,#444,#444,#444,#444,#444,#444,#444,#444,#444,#444,#444,#444,#444,#444,#444,#544,#544,#544,#544,#554,#554,#554,#554,#555,#655,#655,#665,#666,#766,#776,#777,#877,#887)"></i><i style="left:290px;width:2.1px;background:linear-gradient(#000 26.5%,#433 26.5%,#443,#444,#544,#554,#555,#555,#555,#555,#555,#555,#555,#555,#555,#555,#555,#555,#555,#555,#555,#655,#655,#655,#655,#655,#655,#655,#655,#655,#655,#655,#655,#655,#655,#655,#655,#655,#655,#655,#655,#655,#655,#655,#665,#665,#665,#665,#665,#665,#665,#665,#665,#665,#665,#666,#666,#666,#666,#666,#766,#776,#777,#877,#888,#998,#a99,#aaa)"></i><i style="left:292px;width:2.1px;background:linear-gradient(#000 26.5%,#433 26.5%,#443,#444,#544,#554,#555,#555,#555,#555,#555,#555,#555,#555,#555,#555,#555,#555,#555,#555,#555,#655,#655,#655,#655,#655,#655,#655,#655,#655,#655,#655,#655,#655,#655,#655,#655,#655,#655,#655,#655,#655,#655,#655,#665,#665,#665,#665,#665,#665,#665,#665,#665,#665,#665,#666,#666,#666,#666,#666,#766,#776,#777,#877,#888,#998,#a99,#aaa)"></i><i style="left:294px;width:3.1px;background:linear-gradient(#000 26.9%,#443 26.9%,#444,#444,#544,#544,#777,#777,#777,#777,#777,#777,#777,#777,#777,#777,#777,#777,#777,#777,#777,#777,#777,#777,#777,#777,#777,#777,#877,#877,#877,#877,#877,#877,#877,#877,#877,#877,#877,#877,#877,#877,#887,#887,#888,#888,#888,#988,#988,#988,#999,#aaa,#aaa,#aaa,#aaa,#aa9,#a99,#a99,#999,#a99,#aa9,#aaa,#aaa,#baa,#baa,#bbb,#ccc,#ddc)"></i><i style="left:297px;width:3.1px;background:linear-gradient(#000 26.9%,#443 26.9%,#444,#444,#544,#544,#777,#777,#777,#777,#777,#777,#777,#777,#777,#777,#777,#777,#777,#777,#777,#777,#777,#777,#777,#777,#777,#777,#877,#877,#877,#877,#877,#877,#877,#877,#877,#877,#877,#877,#877,#877,#887,#887,#888,#888,#888,#988,#988,#988,#999,#aaa,#aaa,#aaa,#aaa,#aa9,#a99,#a99,#999,#a99,#aa9,#aaa,#aaa,#baa,#baa,#bbb,#ccc,#ddc)"></i><i style="left:300px;width:3.1px;background:linear-gradient(#000 31.6%,#877 31.6%,#887,#887,#887,#887,#888,#888,#888,#888,#988,#988,#998,#998,#998,#998,#998,#998,#998,#998,#998,#998,#998,#998,#999,#999,#999,#999,#999,#999,#999,#999,#999,#999,#999,#999,#999,#999,#999,#999,#999,#999,#999,#999,#a99,#a99,#aaa,#aaa,#aaa,#aaa,#aa9,#a99,#a99,#999,#a99,#aa9,#aaa,#aaa,#baa,#baa,#bbb,#ccb,#ddc)"></i><i style="left:303px;width:3.1px;background:linear-gradient(#000 31.6%,#877 31.6%,#887,#887,#887,#887,#888,#888,#888,#888,#988,#988,#998,#998,#998,#998,#998,#998,#998,#998,#998,#998,#998,#998,#999,#999,#999,#999,#999,#999,#999,#999,#999,#999,#999,#999,#999,#999,#999,#999,#999,#999,#999,#999,#a99,#a99,#aaa,#aaa,#aaa,#aaa,#aa9,#a99,#a99,#999,#a99,#aa9,#aaa,#aaa,#baa,#baa,#bbb,#ccb,#ddc)"></i><i style="left:306px;width:3.1px;background:linear-gradient(#000 31.6%,#877 31.6%,#887,#887,#887,#887,#888,#888,#888,#888,#988,#988,#998,#998,#998,#998,#998,#998,#998,#998,#998,#998,#998,#998,#999,#999,#999,#999,#999,#999,#999,#999,#999,#999,#999,#999,#999,#999,#999,#999,#999,#999,#999,#999,#a99,#a99,#aaa,#aaa,#aaa,#aaa,#aa9,#a99,#a99,#999,#a99,#aa9,#aaa,#aaa,#baa,#baa,#bbb,#ccb,#ddc)"></i><i style="left:309px;width:3.1px;background:linear-gradient(#000 31.6%,#877 31.6%,#887,#887,#887,#887,#888,#888,#888,#888,#988,#988,#998,#998,#998,#998,#998,#998,#998,#998,#998,#998,#998,#998,#999,#999,#999,#999,#999,#999,#999,#999,#999,#999,#999,#999,#999,#999,#999,#999,#999,#999,#999,#999,#a99,#a99,#aaa,#aaa,#aaa,#aaa,#aa9,#a99,#a99,#999,#a99,#aa9,#aaa,#aaa,#baa,#baa,#bbb,#ccb,#ddc)"></i><i style="left:312px;width:2.8px;background:linear-gradient(#000 31.6%,#766 31.6%,#766,#766,#766,#766,#766,#766,#766,#766,#766,#766,#766,#766,#766,#766,#766,#766,#766,#766,#766,#766,#766,#766,#766,#766,#766,#766,#766,#766,#766,#776,#777,#877,#887,#888,#888,#888,#988,#988,#988,#988,#988,#998,#a99,#aa9,#baa,#baa,#baa,#aa9,#a99,#a99,#999,#999,#999,#a99,#baa,#baa,#baa,#bbb,#ccc,#dcc,#ddd)"></i><i style="left:314.7px;width:2.8px;background:linear-gradient(#000 31.6%,#766 31.6%,#766,#766,#766,#766,#766,#766,#766,#766,#766,#766,#766,#766,#766,#766,#766,#766,#766,#766,#766,#766,#766,#766,#766,#766,#766,#766,#766,#766,#766,#776,#777,#877,#887,#888,#888,#888,#988,#988,#988,#988,#988,#998,#a99,#aa9,#baa,#baa,#baa,#aa9,#a99,#a99,#999,#999,#999,#a99,#baa,#baa,#baa,#bbb,#ccc,#dcc,#ddd)"></i><i style="left:317.3px;width:2.8px;background:linear-gradient(#000 31.6%,#766 31.6%,#766,#766,#766,#766,#766,#766,#766,#766,#766,#766,#766,#766,#766,#766,#766,#766,#766,#766,#766,#766,#766,#766,#766,#766,#766,#766,#766,#766,#766,#776,#777,#877,#887,#888,#888,#888,#988,#988,#988,#988,#988,#998,#a99,#aa9,#baa,#baa,#baa,#aa9,#a99,#a99,#999,#999,#999,#a99,#baa,#baa,#baa,#bbb,#ccc,#dcc,#ddd)"></i><i style="left:320px;width:2.8px;background:linear-gradient(#000 31.6%,#766 31.6%,#766,#766,#766,#766,#766,#766,#766,#766,#766,#766,#766,#766,#766,#766,#766,#766,#766,#766,#766,#766,#766,#766,#766,#766,#766,#766,#766,#766,#766,#776,#777,#877,#887,#888,#888,#888,#988,#988,#988,#988,#988,#998,#a99,#aa9,#baa,#baa,#baa,#aa9,#a99,#a99,#999,#999,#999,#a99,#baa,#baa,#baa,#bbb,#ccc,#dcc,#ddd)"></i><i style="left:322.7px;width:2.8px;background:linear-gradient(#000 31.6%,#766 31.6%,#766,#766,#766,#766,#766,#766,#766,#766,#766,#766,#766,#766,#766,#766,#766,#766,#766,#766,#766,#766,#766,#766,#766,#766,#766,#766,#766,#766,#766,#776,#777,#877,#887,#888,#888,#888,#988,#988,#988,#988,#988,#998,#a99,#aa9,#baa,#baa,#baa,#aa9,#a99,#a99,#999,#999,#999,#a99,#baa,#baa,#baa,#bbb,#ccc,#dcc,#ddd)"></i><i style="left:325.3px;width:2.8px;background:linear-gradient(#000 31.6%,#766 31.6%,#766,#766,#766,#766,#766,#766,#766,#766,#766,#766,#766,#766,#766,#766,#766,#766,#766,#766,#766,#766,#766,#766,#766,#766,#766,#766,#766,#766,#766,#776,#777,#877,#887,#888,#888,#888,#988,#988,#988,#988,#988,#998,#a99,#aa9,#baa,#baa,#baa,#aa9,#a99,#a99,#999,#999,#999,#a99,#baa,#baa,#baa,#bbb,#ccc,#dcc,#ddd)"></i><i style="left:328px;width:3.1px;background:linear-gradient(#000 31.6%,#988 31.6%,#998,#999,#999,#999,#999,#999,#999,#a99,#a99,#999,#999,#999,#999,#999,#999,#999,#a99,#a99,#a99,#a99,#a99,#a99,#a99,#a99,#a99,#a99,#a99,#a99,#a99,#a99,#a99,#a99,#a99,#a99,#a99,#a99,#a99,#a99,#aa9,#aa9,#aa9,#aa9,#aa9,#aa9,#aa9,#aa9,#aa9,#aa9,#aa9,#a99,#998,#988,#999,#a99,#aa9,#aaa,#aaa,#bba,#bbb,#ccb,#ddc)"></i><i style="left:331px;width:3.1px;background:linear-gradient(#000 31.6%,#988 31.6%,#998,#999,#999,#999,#999,#999,#999,#a99,#a99,#999,#999,#999,#999,#999,#999,#999,#a99,#a99,#a99,#a99,#a99,#a99,#a99,#a99,#a99,#a99,#a99,#a99,#a99,#a99,#a99,#a99,#a99,#a99,#a99,#a99,#a99,#a99,#aa9,#aa9,#aa9,#aa9,#aa9,#aa9,#aa9,#aa9,#aa9,#aa9,#aa9,#a99,#988,#888,#999,#a99,#aa9,#aaa,#aaa,#bba,#bbb,#ccb,#ddc)"></i><i style="left:334px;width:3.1px;background:linear-gradient(#000 31.6%,#988 31.6%,#998,#999,#999,#999,#999,#999,#999,#a99,#a99,#a99,#999,#999,#999,#999,#999,#a99,#a99,#a99,#a99,#a99,#a99,#a99,#a99,#a99,#a99,#a99,#a99,#a99,#a99,#a99,#a99,#a99,#a99,#a99,#a99,#a99,#a99,#a99,#aa9,#aa9,#aa9,#aa9,#aa9,#aa9,#aa9,#aa9,#aa9,#aa9,#aa9,#a99,#888,#887,#999,#a99,#aa9,#aaa,#aaa,#bba,#bbb,#ccb,#ddc)"></i><i style="left:337px;width:3.1px;background:linear-gradient(#000 31.6%,#988 31.6%,#998,#999,#999,#999,#999,#999,#999,#a99,#a99,#a99,#a99,#a99,#a99,#a99,#a99,#a99,#a99,#a99,#a99,#a99,#a99,#a99,#a99,#a99,#a99,#a99,#a99,#a99,#a99,#a99,#a99,#a99,#a99,#a99,#a99,#a99,#a99,#a99,#aa9,#aa9,#aa9,#aa9,#aa9,#aa9,#aa9,#aa9,#aa9,#aa9,#aa9,#a99,#888,#888,#999,#a99,#aa9,#aaa,#aaa,#bba,#bbb,#ccb,#ddc)"></i><i style="left:340px;width:3.1px;background:linear-gradient(#000 31.6%,#988 31.6%,#998,#999,#999,#999,#999,#999,#999,#a99,#a99,#a99,#a99,#a99,#a99,#a99,#a99,#a99,#a99,#a99,#a99,#a99,#a99,#a99,#a99,#a99,#a99,#a99,#a99,#a99,#a99,#a99,#a99,#a99,#a99,#a99,#a99,#a99,#a99,#a99,#aa9,#aa9,#aa9,#aa9,#aa9,#aa9,#aa9,#aa9,#aa9,#aa9,#aa9,#a99,#988,#988,#999,#a99,#aa9,#aaa,#aaa,#bba,#bbb,#ccb,#ddc)"></i><i style="left:343px;width:3.1px;background:linear-gradient(#000 31.6%,#988 31.6%,#998,#999,#999,#999,#999,#999,#999,#a99,#a99,#a99,#a99,#a99,#a99,#a99,#a99,#a99,#a99,#a99,#a99,#a99,#a99,#a99,#a99,#a99,#a99,#a99,#a99,#a99,#a99,#a99,#a99,#a99,#a99,#a99,#a99,#a99,#a99,#a99,#aa9,#aa9,#aa9,#aa9,#aa9,#aa9,#aa9,#aa9,#aa9,#aa9,#aa9,#a99,#999,#988,#999,#a99,#aa9,#aaa,#aaa,#bba,#bbb,#ccb,#ddc)"></i><i style="left:346px;width:3.1px;background:linear-gradient(#000 31.6%,#988 31.6%,#998,#999,#999,#999,#999,#999,#999,#a99,#a99,#a99,#a99,#a99,#a99,#a99,#a99,#a99,#a99,#a99,#a99,#a99,#a99,#a99,#a99,#a99,#a99,#a99,#a99,#a99,#a99,#a99,#a99,#a99,#a99,#a99,#a99,#a99,#a99,#a99,#aa9,#aa9,#aa9,#aa9,#aa9,#aa9,#aa9,#aa9,#aa9,#aa9,#aa9,#a99,#999,#998,#999,#a99,#aa9,#aaa,#aaa,#bba,#bbb,#ccb,#ddc)"></i><i style="left:349px;width:3.1px;background:linear-gradient(#000 31.6%,#988 31.6%,#998,#999,#999,#999,#999,#999,#999,#a99,#a99,#a99,#a99,#a99,#a99,#a99,#a99,#a99,#a99,#a99,#a99,#a99,#a99,#a99,#a99,#a99,#a99,#a99,#a99,#a99,#a99,#a99,#a99,#a99,#a99,#a99,#a99,#a99,#a99,#a99,#aa9,#aa9,#aa9,#aa9,#aa9,#aa9,#aa9,#aa9,#aa9,#aa9,#aa9,#a99,#999,#998,#999,#a99,#aa9,#aaa,#aaa,#bba,#bbb,#ccb,#ddc)"></i><i style="left:352px;width:3px;background:linear-gradient(#000 31.6%,#777 31.6%,#777,#877,#877,#877,#877,#877,#877,#877,#877,#877,#877,#877,#877,#887,#887,#887,#887,#887,#887,#887,#887,#887,#887,#887,#887,#887,#887,#888,#888,#888,#888,#988,#988,#998,#998,#998,#998,#998,#998,#998,#998,#999,#999,#a99,#aaa,#aaa,#aaa,#aaa,#aa9,#a99,#a99,#999,#a99,#aa9,#aaa,#aaa,#baa,#baa,#bbb,#ccb,#ddc)"></i><i style="left:354.9px;width:3px;background:linear-gradient(#000 31.6%,#777 31.6%,#777,#877,#877,#877,#877,#877,#877,#877,#877,#877,#877,#877,#877,#887,#887,#887,#887,#887,#887,#887,#887,#887,#887,#887,#887,#887,#887,#888,#888,#888,#888,#988,#988,#998,#998,#998,#998,#998,#998,#998,#998,#999,#999,#a99,#aaa,#aaa,#aaa,#aaa,#aa9,#a99,#a99,#999,#a99,#aa9,#aaa,#aaa,#baa,#baa,#bbb,#ccb,#ddc)"></i><i style="left:357.8px;width:3px;background:linear-gradient(#000 31.6%,#777 31.6%,#777,#877,#877,#877,#877,#877,#877,#877,#877,#877,#877,#877,#877,#887,#887,#887,#887,#887,#887,#887,#887,#887,#887,#887,#887,#887,#887,#888,#888,#888,#888,#988,#988,#998,#998,#998,#998,#998,#998,#998,#998,#999,#999,#a99,#aaa,#aaa,#aaa,#aaa,#aa9,#a99,#a99,#999,#a99,#aa9,#aaa,#aaa,#baa,#baa,#bbb,#ccb,#ddc)"></i><i style="left:360.7px;width:3px;background:linear-gradient(#000 31.6%,#777 31.6%,#777,#877,#877,#877,#877,#877,#877,#877,#877,#877,#877,#877,#877,#887,#887,#887,#887,#887,#887,#887,#887,#887,#887,#887,#887,#887,#887,#888,#888,#888,#888,#988,#988,#998,#998,#998,#998,#998,#998,#998,#998,#999,#999,#a99,#aaa,#aaa,#aaa,#aaa,#aa9,#a99,#a99,#999,#a99,#aa9,#aaa,#aaa,#baa,#baa,#bbb,#ccb,#ddc)"></i><i style="left:363.6px;width:3px;background:linear-gradient(#000 31.6%,#777 31.6%,#777,#877,#877,#877,#877,#877,#877,#877,#877,#877,#877,#877,#877,#887,#887,#887,#887,#887,#887,#887,#887,#887,#887,#887,#887,#887,#887,#888,#888,#888,#888,#988,#988,#998,#998,#998,#998,#998,#998,#998,#998,#999,#999,#a99,#aaa,#aaa,#aaa,#aaa,#aa9,#a99,#a99,#999,#a99,#aa9,#aaa,#aaa,#baa,#baa,#bbb,#ccb,#ddc)"></i><i style="left:366.4px;width:3px;background:linear-gradient(#000 31.6%,#777 31.6%,#777,#877,#877,#877,#877,#877,#877,#877,#877,#877,#877,#877,#877,#887,#887,#887,#887,#887,#887,#887,#887,#887,#887,#887,#887,#887,#887,#888,#888,#888,#888,#988,#988,#998,#998,#998,#998,#998,#998,#998,#998,#999,#999,#a99,#aaa,#aaa,#aaa,#aaa,#aa9,#a99,#a99,#999,#a99,#aa9,#aaa,#aaa,#baa,#baa,#bbb,#ccb,#ddc)"></i><i style="left:369.3px;width:3px;background:linear-gradient(#000 31.6%,#777 31.6%,#777,#877,#877,#877,#877,#877,#877,#877,#877,#877,#877,#877,#877,#887,#887,#887,#887,#887,#887,#887,#887,#887,#887,#887,#887,#887,#887,#888,#888,#888,#888,#988,#988,#998,#998,#998,#998,#998,#998,#998,#998,#999,#999,#a99,#aaa,#aaa,#aaa,#aaa,#aa9,#a99,#a99,#999,#a99,#aa9,#aaa,#aaa,#baa,#baa,#bbb,#ccb,#ddc)"></i><i style="left:372.2px;width:3px;background:linear-gradient(#000 31.6%,#777 31.6%,#777,#877,#877,#877,#877,#877,#877,#877,#877,#877,#877,#877,#877,#887,#887,#887,#887,#887,#887,#887,#887,#887,#887,#887,#887,#887,#887,#888,#888,#888,#888,#988,#988,#998,#998,#998,#998,#998,#998,#998,#998,#999,#999,#a99,#aaa,#aaa,#aaa,#aaa,#aa9,#a99,#a99,#999,#a99,#aa9,#aaa,#aaa,#baa,#baa,#bbb,#ccb,#ddc)"></i><i style="left:375.1px;width:3px;background:linear-gradient(#000 31.6%,#777 31.6%,#777,#877,#877,#877,#877,#877,#877,#877,#877,#877,#877,#877,#877,#887,#887,#887,#887,#887,#887,#887,#887,#887,#887,#887,#887,#887,#887,#888,#888,#888,#888,#988,#988,#998,#998,#998,#998,#998,#998,#998,#998,#999,#999,#a99,#aaa,#aaa,#aaa,#aaa,#aa9,#a99,#a99,#999,#a99,#aa9,#aaa,#aaa,#baa,#baa,#bbb,#ccb,#ddc)"></i><i style="left:378px;width:3.1px;background:linear-gradient(#000 31.6%,#555 31.6%,#555,#555,#555,#555,#555,#555,#555,#555,#555,#555,#555,#555,#555,#555,#555,#555,#555,#555,#555,#555,#555,#555,#555,#555,#555,#555,#555,#555,#555,#555,#555,#555,#555,#555,#555,#555,#555,#555,#555,#555,#555,#555,#555,#555,#555,#555,#555,#555,#555,#555,#555,#555,#555,#655,#655,#665,#666,#777,#998,#aaa,#cbb)"></i><i style="left:381px;width:3.1px;background:linear-gradient(#000 31.6%,#555 31.6%,#555,#555,#555,#555,#555,#555,#555,#555,#555,#555,#555,#555,#555,#555,#555,#555,#555,#555,#555,#555,#555,#555,#555,#555,#555,#555,#555,#555,#555,#555,#555,#555,#555,#555,#555,#555,#555,#555,#555,#555,#555,#555,#555,#555,#555,#555,#555,#555,#555,#555,#555,#555,#555,#655,#655,#665,#666,#777,#998,#aaa,#cbb)"></i><i style="left:384px;width:3.1px;background:linear-gradient(#000 30.1%,#443 30.1%,#555,#888,#888,#888,#888,#888,#888,#888,#888,#888,#888,#888,#888,#888,#888,#888,#888,#888,#888,#888,#888,#888,#888,#888,#988,#988,#988,#988,#988,#988,#988,#988,#988,#988,#988,#988,#988,#988,#998,#998,#998,#998,#998,#999,#999,#a99,#aaa,#aaa,#aaa,#aaa,#aa9,#a99,#a99,#999,#a99,#aa9,#aaa,#aaa,#baa,#baa,#bbb,#ccc,#ddc)"></i><i style="left:387px;width:3.1px;background:linear-gradient(#000 30.1%,#443 30.1%,#555,#888,#888,#888,#888,#888,#888,#888,#888,#888,#888,#888,#888,#888,#888,#888,#888,#888,#888,#888,#888,#888,#888,#888,#988,#988,#988,#988,#988,#988,#988,#988,#988,#988,#988,#988,#988,#988,#998,#998,#998,#998,#998,#999,#999,#a99,#aaa,#aaa,#aaa,#aaa,#aa9,#a99,#a99,#999,#a99,#aa9,#aaa,#aaa,#baa,#baa,#bbb,#ccc,#ddc)"></i><i style="left:390px;width:3.1px;background:linear-gradient(#000 31.6%,#766 31.6%,#766,#766,#766,#766,#766,#766,#776,#776,#776,#776,#776,#776,#776,#776,#776,#776,#777,#777,#777,#777,#877,#877,#777,#777,#777,#777,#777,#777,#776,#776,#776,#766,#766,#766,#766,#766,#766,#776,#776,#776,#776,#777,#887,#988,#998,#a99,#aa9,#aa9,#aa9,#aa9,#aa9,#aa9,#aa9,#aaa,#bba,#bba,#bbb,#cbb,#ccb,#dcc,#ddc)"></i><i style="left:392.9px;width:3.1px;background:linear-gradient(#000 31.6%,#766 31.6%,#766,#766,#766,#766,#766,#766,#776,#776,#776,#776,#776,#776,#776,#776,#776,#776,#777,#777,#777,#777,#877,#877,#777,#777,#777,#777,#777,#777,#776,#776,#776,#766,#766,#766,#766,#766,#766,#776,#776,#776,#776,#777,#887,#988,#998,#a99,#aa9,#aa9,#aa9,#aa9,#aa9,#aa9,#aa9,#aaa,#bba,#bba,#bbb,#cbb,#ccb,#dcc,#ddc)"></i><i style="left:395.9px;width:3.1px;background:linear-gradient(#000 31.6%,#766 31.6%,#766,#766,#766,#766,#766,#766,#776,#776,#776,#776,#776,#776,#776,#776,#776,#776,#777,#777,#777,#777,#877,#877,#777,#777,#777,#777,#777,#777,#776,#776,#776,#766,#766,#766,#766,#766,#766,#776,#776,#776,#776,#777,#887,#988,#998,#a99,#aa9,#aa9,#aa9,#aa9,#aa9,#aa9,#aa9,#aaa,#bba,#bba,#bbb,#cbb,#ccb,#dcc,#ddc)"></i><i style="left:398.8px;width:3.1px;background:linear-gradient(#000 31.6%,#766 31.6%,#766,#766,#766,#766,#766,#766,#776,#776,#776,#776,#776,#776,#776,#776,#776,#776,#777,#777,#777,#777,#877,#877,#777,#777,#777,#777,#777,#777,#776,#776,#776,#766,#766,#766,#766,#766,#766,#776,#776,#776,#776,#777,#887,#988,#998,#a99,#aa9,#aa9,#aa9,#aa9,#aa9,#aa9,#aa9,#aaa,#bba,#bba,#bbb,#cbb,#ccb,#dcc,#ddc)"></i><i style="left:401.7px;width:3.1px;background:linear-gradient(#000 31.6%,#766 31.6%,#766,#766,#766,#766,#766,#766,#776,#776,#776,#776,#776,#776,#776,#776,#776,#776,#777,#777,#777,#777,#877,#877,#777,#777,#777,#777,#777,#777,#776,#776,#776,#766,#766,#766,#766,#766,#766,#776,#776,#776,#776,#777,#887,#988,#998,#a99,#aa9,#aa9,#aa9,#aa9,#aa9,#aa9,#aa9,#aaa,#bba,#bba,#bbb,#cbb,#ccb,#dcc,#ddc)"></i><i style="left:404.6px;width:3.1px;background:linear-gradient(#000 31.6%,#766 31.6%,#766,#766,#766,#766,#766,#766,#776,#776,#776,#776,#776,#776,#776,#776,#776,#776,#777,#777,#777,#777,#877,#877,#777,#777,#777,#777,#777,#777,#776,#776,#776,#766,#766,#766,#766,#766,#766,#776,#776,#776,#776,#777,#887,#988,#998,#a99,#aa9,#aa9,#aa9,#aa9,#aa9,#aa9,#aa9,#aaa,#bba,#bba,#bbb,#cbb,#ccb,#dcc,#ddc)"></i><i style="left:407.6px;width:3.1px;background:linear-gradient(#000 31.6%,#766 31.6%,#766,#766,#766,#766,#766,#766,#776,#776,#776,#776,#776,#776,#776,#776,#776,#776,#777,#777,#777,#777,#877,#877,#777,#777,#777,#777,#777,#777,#776,#776,#776,#766,#766,#766,#766,#766,#766,#776,#776,#776,#776,#777,#887,#988,#998,#a99,#aa9,#aa9,#aa9,#aa9,#aa9,#aa9,#aa9,#aaa,#bba,#bba,#bbb,#cbb,#ccb,#dcc,#ddc)"></i><i style="left:410.5px;width:3.1px;background:linear-gradient(#000 31.6%,#766 31.6%,#766,#766,#766,#766,#766,#766,#776,#776,#776,#776,#776,#776,#776,#776,#776,#776,#777,#777,#777,#777,#877,#877,#777,#777,#777,#777,#777,#777,#776,#776,#776,#766,#766,#766,#766,#766,#766,#776,#776,#776,#776,#777,#887,#988,#998,#a99,#aa9,#aa9,#aa9,#aa9,#aa9,#aa9,#aa9,#aaa,#bba,#bba,#bbb,#cbb,#ccb,#dcc,#ddc)"></i><i style="left:413.4px;width:3.1px;background:linear-gradient(#000 31.6%,#766 31.6%,#766,#766,#766,#766,#766,#766,#776,#776,#776,#776,#776,#776,#776,#776,#776,#776,#777,#777,#777,#777,#877,#877,#777,#777,#777,#777,#777,#777,#776,#776,#776,#766,#766,#766,#766,#766,#766,#776,#776,#776,#776,#777,#887,#988,#998,#a99,#aa9,#aa9,#aa9,#aa9,#aa9,#aa9,#aa9,#aaa,#bba,#bba,#bbb,#cbb,#ccb,#dcc,#ddc)"></i><i style="left:416.4px;width:3.1px;background:linear-gradient(#000 31.6%,#766 31.6%,#766,#766,#766,#766,#766,#766,#776,#776,#776,#776,#776,#776,#776,#776,#776,#776,#777,#777,#777,#777,#877,#877,#777,#777,#777,#777,#777,#777,#776,#776,#776,#766,#766,#766,#766,#766,#766,#776,#776,#776,#776,#777,#887,#988,#998,#a99,#aa9,#aa9,#aa9,#aa9,#aa9,#aa9,#aa9,#aaa,#bba,#bba,#bbb,#cbb,#ccb,#dcc,#ddc)"></i><i style="left:419.3px;width:3.1px;background:linear-gradient(#000 31.6%,#766 31.6%,#766,#766,#766,#766,#766,#766,#776,#776,#776,#776,#776,#776,#776,#776,#776,#776,#777,#777,#777,#777,#877,#877,#777,#777,#777,#777,#777,#777,#776,#776,#776,#766,#766,#766,#766,#766,#766,#776,#776,#776,#776,#777,#887,#988,#998,#a99,#aa9,#aa9,#aa9,#aa9,#aa9,#aa9,#aa9,#aaa,#bba,#bba,#bbb,#cbb,#ccb,#dcc,#ddc)"></i><i style="left:422.2px;width:3.1px;background:linear-gradient(#000 31.6%,#766 31.6%,#766,#766,#766,#766,#766,#766,#776,#776,#776,#776,#776,#776,#776,#776,#776,#776,#777,#777,#777,#777,#877,#877,#777,#777,#777,#777,#777,#777,#776,#776,#776,#766,#766,#766,#766,#766,#766,#776,#776,#776,#776,#777,#887,#988,#998,#a99,#aa9,#aa9,#aa9,#aa9,#aa9,#aa9,#aa9,#aaa,#bba,#bba,#bbb,#cbb,#ccb,#dcc,#ddc)"></i><i style="left:425.1px;width:3.1px;background:linear-gradient(#000 31.6%,#766 31.6%,#766,#766,#766,#766,#766,#766,#776,#776,#776,#776,#776,#776,#776,#776,#776,#776,#777,#777,#777,#777,#877,#877,#777,#777,#777,#777,#777,#777,#776,#776,#776,#766,#766,#766,#766,#766,#766,#776,#776,#776,#776,#777,#887,#988,#998,#a99,#aa9,#aa9,#aa9,#aa9,#aa9,#aa9,#aa9,#aaa,#bba,#bba,#bbb,#cbb,#ccb,#dcc,#ddc)"></i><i style="left:428.1px;width:3.1px;background:linear-gradient(#000 31.6%,#766 31.6%,#766,#766,#766,#766,#766,#766,#776,#776,#776,#776,#776,#776,#776,#776,#776,#776,#777,#777,#777,#777,#877,#877,#777,#777,#777,#777,#777,#777,#776,#776,#776,#766,#766,#766,#766,#766,#766,#776,#776,#776,#776,#777,#887,#988,#998,#a99,#aa9,#aa9,#aa9,#aa9,#aa9,#aa9,#aa9,#aaa,#bba,#bba,#bbb,#cbb,#ccb,#dcc,#ddc)"></i><i style="left:431px;width:2.9px;background:linear-gradient(#000 31.6%,#554 31.6%,#554,#554,#554,#554,#554,#554,#554,#554,#554,#554,#554,#554,#554,#554,#554,#554,#554,#554,#554,#554,#554,#554,#554,#554,#554,#554,#554,#554,#554,#554,#554,#554,#554,#554,#554,#554,#554,#554,#554,#554,#554,#554,#554,#554,#554,#554,#554,#554,#554,#554,#555,#555,#555,#555,#655,#665,#666,#776,#887,#998,#aa9)"></i><i style="left:433.8px;width:2.9px;background:linear-gradient(#000 31.6%,#554 31.6%,#554,#554,#554,#554,#554,#554,#554,#554,#554,#554,#554,#554,#554,#554,#554,#554,#554,#554,#554,#554,#554,#554,#554,#554,#554,#554,#554,#554,#554,#554,#554,#554,#554,#554,#554,#554,#554,#554,#554,#554,#554,#554,#554,#554,#554,#554,#554,#554,#554,#554,#555,#555,#555,#555,#655,#665,#666,#776,#887,#998,#aa9)"></i><i style="left:436.5px;width:2.9px;background:linear-gradient(#000 31.6%,#554 31.6%,#554,#554,#554,#554,#554,#554,#554,#554,#554,#554,#554,#554,#554,#554,#554,#554,#554,#554,#554,#554,#554,#554,#554,#554,#554,#554,#554,#554,#554,#554,#554,#554,#554,#554,#554,#554,#554,#554,#554,#554,#554,#554,#554,#554,#554,#554,#554,#554,#554,#554,#555,#555,#555,#555,#655,#665,#666,#776,#887,#998,#aa9)"></i><i style="left:439.2px;width:2.9px;background:linear-gradient(#000 31.6%,#554 31.6%,#554,#554,#554,#554,#554,#554,#554,#554,#554,#554,#554,#554,#554,#554,#554,#554,#554,#554,#554,#554,#554,#554,#554,#554,#554,#554,#554,#554,#554,#554,#554,#554,#554,#554,#554,#554,#554,#554,#554,#554,#554,#554,#554,#554,#554,#554,#554,#554,#554,#554,#555,#555,#555,#555,#655,#665,#666,#776,#887,#998,#aa9)"></i><i style="left:442px;width:2.9px;background:linear-gradient(#000 31.6%,#554 31.6%,#554,#554,#554,#554,#554,#554,#554,#554,#554,#554,#554,#554,#554,#554,#554,#554,#554,#554,#554,#554,#554,#554,#554,#554,#554,#554,#554,#554,#554,#554,#554,#554,#554,#554,#554,#554,#554,#554,#554,#554,#554,#554,#554,#554,#554,#554,#554,#554,#554,#554,#555,#555,#555,#555,#655,#665,#666,#776,#887,#998,#aa9)"></i><i style="left:444.8px;width:2.9px;background:linear-gradient(#000 31.6%,#554 31.6%,#554,#554,#554,#554,#554,#554,#554,#554,#554,#554,#554,#554,#554,#554,#554,#554,#554,#554,#554,#554,#554,#554,#554,#554,#554,#554,#554,#554,#554,#554,#554,#554,#554,#554,#554,#554,#554,#554,#554,#554,#554,#554,#554,#554,#554,#554,#554,#554,#554,#554,#555,#555,#555,#555,#655,#665,#666,#776,#887,#998,#aa9)"></i><i style="left:447.5px;width:2.9px;background:linear-gradient(#000 31.6%,#554 31.6%,#554,#554,#554,#554,#554,#554,#554,#554,#554,#554,#554,#554,#554,#554,#554,#554,#554,#554,#554,#554,#554,#554,#554,#554,#554,#554,#554,#554,#554,#554,#554,#554,#554,#554,#554,#554,#554,#554,#554,#554,#554,#554,#554,#554,#554,#554,#554,#554,#554,#554,#555,#555,#555,#555,#655,#665,#666,#776,#887,#998,#aa9)"></i><i style="left:450.2px;width:2.9px;background:linear-gradient(#000 31.6%,#554 31.6%,#554,#554,#554,#554,#554,#554,#554,#554,#554,#554,#554,#554,#554,#554,#554,#554,#554,#554,#554,#554,#554,#554,#554,#554,#554,#554,#554,#554,#554,#554,#554,#554,#554,#554,#554,#554,#554,#554,#554,#554,#554,#554,#554,#554,#554,#554,#554,#554,#554,#554,#555,#555,#555,#555,#655,#665,#666,#776,#887,#998,#aa9)"></i><i style="left:453px;width:3px;background:linear-gradient(#000 31.6%,#777 31.6%,#877,#888,#988,#998,#998,#998,#998,#998,#998,#998,#998,#998,#999,#999,#999,#999,#999,#999,#999,#999,#999,#999,#999,#999,#999,#999,#999,#999,#999,#999,#999,#999,#999,#999,#999,#999,#999,#999,#999,#999,#999,#999,#a99,#a99,#aaa,#aaa,#aaa,#aaa,#aa9,#a99,#a99,#999,#a99,#aa9,#aaa,#aaa,#baa,#baa,#bbb,#ccb,#ddc)"></i><i style="left:455.9px;width:3px;background:linear-gradient(#000 31.6%,#777 31.6%,#877,#888,#988,#998,#998,#998,#998,#998,#998,#998,#998,#998,#999,#999,#999,#999,#999,#999,#999,#999,#999,#999,#999,#999,#999,#999,#999,#999,#999,#999,#999,#999,#999,#999,#999,#999,#999,#999,#999,#999,#999,#999,#a99,#a99,#aaa,#aaa,#aaa,#aaa,#aa9,#a99,#a99,#999,#a99,#aa9,#aaa,#aaa,#baa,#baa,#bbb,#ccb,#ddc)"></i><i style="left:458.7px;width:3px;background:linear-gradient(#000 31.6%,#777 31.6%,#877,#888,#988,#998,#998,#998,#998,#998,#998,#998,#998,#998,#999,#999,#999,#999,#999,#999,#999,#999,#999,#999,#999,#999,#999,#999,#999,#999,#999,#999,#999,#999,#999,#999,#999,#999,#999,#999,#999,#999,#999,#999,#a99,#a99,#aaa,#aaa,#aaa,#aaa,#aa9,#a99,#a99,#999,#a99,#aa9,#aaa,#aaa,#baa,#baa,#bbb,#ccb,#ddc)"></i><i style="left:461.6px;width:3px;background:linear-gradient(#000 31.6%,#777 31.6%,#877,#888,#988,#998,#998,#998,#998,#998,#998,#998,#998,#998,#999,#999,#999,#999,#999,#999,#999,#999,#999,#999,#999,#999,#999,#999,#999,#999,#999,#999,#999,#999,#999,#999,#999,#999,#999,#999,#999,#999,#999,#999,#a99,#a99,#aaa,#aaa,#aaa,#aaa,#aa9,#a99,#a99,#999,#a99,#aa9,#aaa,#aaa,#baa,#baa,#bbb,#ccb,#ddc)"></i><i style="left:464.4px;width:3px;background:linear-gradient(#000 31.6%,#777 31.6%,#877,#888,#988,#998,#998,#998,#998,#998,#998,#998,#998,#998,#999,#999,#999,#999,#999,#999,#999,#999,#999,#999,#999,#999,#999,#999,#999,#999,#999,#999,#999,#999,#999,#999,#999,#999,#999,#999,#999,#999,#999,#999,#a99,#a99,#aaa,#aaa,#aaa,#aaa,#aa9,#a99,#a99,#999,#a99,#aa9,#aaa,#aaa,#baa,#baa,#bbb,#ccb,#ddc)"></i><i style="left:467.3px;width:3px;background:linear-gradient(#000 31.6%,#777 31.6%,#877,#888,#988,#998,#998,#998,#998,#998,#998,#998,#998,#998,#999,#999,#999,#999,#999,#999,#999,#999,#999,#999,#999,#999,#999,#999,#999,#999,#999,#999,#999,#999,#999,#999,#999,#999,#999,#999,#999,#999,#999,#999,#a99,#a99,#aaa,#aaa,#aaa,#aaa,#aa9,#a99,#a99,#999,#a99,#aa9,#aaa,#aaa,#baa,#baa,#bbb,#ccb,#ddc)"></i><i style="left:470.1px;width:3px;background:linear-gradient(#000 31.6%,#777 31.6%,#877,#888,#988,#998,#998,#998,#998,#998,#998,#998,#998,#998,#999,#999,#999,#999,#999,#999,#999,#999,#999,#999,#999,#999,#999,#999,#999,#999,#999,#999,#999,#999,#999,#999,#999,#999,#999,#999,#999,#999,#999,#999,#a99,#a99,#aaa,#aaa,#aaa,#aaa,#aa9,#a99,#a99,#999,#a99,#aa9,#aaa,#aaa,#baa,#baa,#bbb,#ccb,#ddc)"></i><i style="left:473px;width:2.9px;background:linear-gradient(#000 31.6%,#766 31.6%,#766,#766,#766,#766,#666,#666,#666,#666,#666,#666,#666,#666,#666,#666,#666,#666,#666,#666,#666,#766,#766,#766,#766,#766,#766,#766,#766,#766,#766,#776,#777,#887,#887,#887,#887,#887,#888,#888,#888,#888,#888,#888,#888,#888,#988,#998,#999,#999,#999,#999,#999,#a99,#a99,#a99,#aa9,#aaa,#baa,#bba,#cbb,#ccc,#ddc)"></i><i style="left:475.8px;width:2.9px;background:linear-gradient(#000 31.6%,#766 31.6%,#766,#766,#766,#766,#666,#666,#666,#666,#666,#666,#666,#666,#666,#666,#666,#666,#666,#666,#666,#766,#766,#766,#766,#766,#766,#766,#766,#766,#766,#776,#777,#887,#887,#887,#887,#887,#888,#888,#888,#888,#888,#888,#888,#888,#988,#998,#999,#999,#999,#999,#999,#a99,#a99,#a99,#aa9,#aaa,#baa,#bba,#cbb,#ccc,#ddc)"></i><i style="left:478.6px;width:2.9px;background:linear-gradient(#000 31.6%,#766 31.6%,#766,#766,#766,#766,#666,#666,#666,#666,#666,#666,#666,#666,#666,#666,#666,#666,#666,#666,#666,#766,#766,#766,#766,#766,#766,#766,#766,#766,#766,#776,#777,#887,#887,#887,#887,#887,#888,#888,#888,#888,#888,#888,#888,#888,#988,#998,#999,#999,#999,#999,#999,#a99,#a99,#a99,#aa9,#aaa,#baa,#bba,#cbb,#ccc,#ddc)"></i><i style="left:481.4px;width:2.9px;background:linear-gradient(#000 31.6%,#766 31.6%,#766,#766,#766,#766,#666,#666,#666,#666,#666,#666,#666,#666,#666,#666,#666,#666,#666,#666,#666,#766,#766,#766,#766,#766,#766,#766,#766,#766,#766,#776,#777,#887,#887,#887,#887,#887,#888,#888,#888,#888,#888,#888,#888,#888,#988,#998,#999,#999,#999,#999,#999,#a99,#a99,#a99,#aa9,#aaa,#baa,#bba,#cbb,#ccc,#ddc)"></i><i style="left:484.2px;width:2.9px;background:linear-gradient(#000 31.6%,#766 31.6%,#766,#766,#766,#766,#666,#666,#666,#666,#666,#666,#666,#666,#666,#666,#666,#666,#666,#666,#666,#766,#766,#766,#766,#766,#766,#766,#766,#766,#766,#776,#777,#887,#887,#887,#887,#887,#888,#888,#888,#888,#888,#888,#888,#888,#988,#998,#999,#999,#999,#999,#999,#a99,#a99,#a99,#aa9,#aaa,#baa,#bba,#cbb,#ccc,#ddc)"></i><i style="left:487px;width:2.9px;background:linear-gradient(#000 31.6%,#766 31.6%,#766,#766,#766,#766,#666,#666,#666,#666,#666,#666,#666,#666,#666,#666,#666,#666,#666,#666,#666,#766,#766,#766,#766,#766,#766,#766,#766,#766,#766,#776,#777,#887,#887,#887,#887,#887,#888,#888,#888,#888,#888,#888,#888,#888,#988,#998,#999,#999,#999,#999,#999,#a99,#a99,#a99,#aa9,#aaa,#baa,#bba,#cbb,#ccc,#ddc)"></i><i style="left:489.8px;width:2.9px;background:linear-gradient(#000 31.6%,#766 31.6%,#766,#766,#766,#766,#666,#666,#666,#666,#666,#666,#666,#666,#666,#666,#666,#666,#666,#666,#666,#766,#766,#766,#766,#766,#766,#766,#766,#766,#766,#776,#777,#887,#887,#887,#887,#887,#888,#888,#888,#888,#888,#888,#888,#888,#988,#998,#999,#999,#999,#999,#999,#a99,#a99,#a99,#aa9,#aaa,#baa,#bba,#cbb,#ccc,#ddc)"></i><i style="left:492.6px;width:2.9px;background:linear-gradient(#000 31.6%,#766 31.6%,#766,#766,#766,#766,#666,#666,#666,#666,#666,#666,#666,#666,#666,#666,#666,#666,#666,#666,#666,#766,#766,#766,#766,#766,#766,#766,#766,#766,#766,#776,#777,#887,#887,#887,#887,#887,#888,#888,#888,#888,#888,#888,#888,#888,#988,#998,#999,#999,#999,#999,#999,#a99,#a99,#a99,#aa9,#aaa,#baa,#bba,#cbb,#ccc,#ddc)"></i><i style="left:495.4px;width:2.9px;background:linear-gradient(#000 31.6%,#766 31.6%,#766,#766,#766,#766,#666,#666,#666,#666,#666,#666,#666,#666,#666,#666,#666,#666,#666,#666,#666,#766,#766,#766,#766,#766,#766,#766,#766,#766,#766,#776,#777,#887,#887,#887,#887,#887,#888,#888,#888,#888,#888,#888,#888,#888,#988,#998,#999,#999,#999,#999,#999,#a99,#a99,#a99,#aa9,#aaa,#baa,#bba,#cbb,#ccc,#ddc)"></i><i style="left:498.2px;width:2.9px;background:linear-gradient(#000 31.6%,#766 31.6%,#766,#766,#766,#766,#666,#666,#666,#666,#666,#666,#666,#666,#666,#666,#666,#666,#666,#666,#666,#766,#766,#766,#766,#766,#766,#766,#766,#766,#766,#776,#777,#887,#887,#887,#887,#887,#888,#888,#888,#888,#888,#888,#888,#888,#988,#998,#999,#999,#999,#999,#999,#a99,#a99,#a99,#aa9,#aaa,#baa,#bba,#cbb,#ccc,#ddc)"></i><i style="left:501px;width:3px;background:linear-gradient(#000 31.6%,#998 31.6%,#999,#aa9,#aa9,#aa9,#aa9,#aa9,#aa9,#aa9,#aa9,#aa9,#aa9,#aa9,#aa9,#aa9,#aa9,#aa9,#aa9,#aa9,#aa9,#aa9,#aa9,#aa9,#aa9,#aa9,#aa9,#aa9,#aa9,#aa9,#aa9,#aa9,#aa9,#aa9,#aa9,#a99,#a99,#a99,#a99,#a99,#a99,#a99,#a99,#a99,#a99,#aa9,#aa9,#aa9,#aa9,#aa9,#aa9,#aa9,#a99,#a99,#a99,#a99,#aa9,#aa9,#aaa,#baa,#bbb,#ccb,#dcc)"></i><i style="left:503.9px;width:3px;background:linear-gradient(#000 31.6%,#998 31.6%,#999,#aa9,#aa9,#aa9,#aa9,#aa9,#aa9,#aa9,#aa9,#aa9,#aa9,#aa9,#aa9,#aa9,#aa9,#aa9,#aa9,#aa9,#aa9,#aa9,#aa9,#aa9,#aa9,#aa9,#aa9,#aa9,#aa9,#aa9,#aa9,#aa9,#aa9,#aa9,#aa9,#a99,#a99,#a99,#a99,#a99,#a99,#a99,#a99,#a99,#a99,#aa9,#aa9,#aa9,#aa9,#aa9,#aa9,#aa9,#a99,#a99,#a99,#a99,#aa9,#aa9,#aaa,#baa,#bbb,#ccb,#dcc)"></i><i style="left:506.8px;width:3px;background:linear-gradient(#000 31.6%,#998 31.6%,#999,#aa9,#aa9,#aa9,#aa9,#aa9,#aa9,#aa9,#aa9,#aa9,#aa9,#aa9,#aa9,#aa9,#aa9,#aa9,#aa9,#aa9,#aa9,#aa9,#aa9,#aa9,#aa9,#aa9,#aa9,#aa9,#aa9,#aa9,#aa9,#aa9,#aa9,#aa9,#aa9,#a99,#a99,#a99,#a99,#a99,#a99,#a99,#a99,#a99,#a99,#aa9,#aa9,#aa9,#aa9,#aa9,#aa9,#aa9,#a99,#a99,#a99,#a99,#aa9,#aa9,#aaa,#baa,#bbb,#ccb,#dcc)"></i><i style="left:509.7px;width:3px;background:linear-gradient(#000 31.6%,#998 31.6%,#999,#aa9,#aa9,#aa9,#aa9,#aa9,#aa9,#aa9,#aa9,#aa9,#aa9,#aa9,#aa9,#aa9,#aa9,#aa9,#aa9,#aa9,#aa9,#aa9,#aa9,#aa9,#aa9,#aa9,#aa9,#aa9,#aa9,#aa9,#aa9,#aa9,#aa9,#aa9,#aa9,#a99,#a99,#a99,#a99,#a99,#a99,#a99,#a99,#a99,#a99,#aa9,#aa9,#aa9,#aa9,#aa9,#aa9,#aa9,#a99,#a99,#a99,#a99,#aa9,#aa9,#aaa,#baa,#bbb,#ccb,#dcc)"></i><i style="left:512.6px;width:3px;background:linear-gradient(#000 31.6%,#998 31.6%,#999,#aa9,#aa9,#aa9,#aa9,#aa9,#aa9,#aa9,#aa9,#aa9,#aa9,#aa9,#aa9,#aa9,#aa9,#aa9,#aa9,#aa9,#aa9,#aa9,#aa9,#aa9,#aa9,#aa9,#aa9,#aa9,#aa9,#aa9,#aa9,#aa9,#aa9,#aa9,#aa9,#a99,#a99,#a99,#a99,#a99,#a99,#a99,#a99,#a99,#a99,#aa9,#aa9,#aa9,#aa9,#aa9,#aa9,#aa9,#a99,#a99,#a99,#a99,#aa9,#aa9,#aaa,#baa,#bbb,#ccb,#dcc)"></i><i style="left:515.5px;width:3px;background:linear-gradient(#000 31.6%,#998 31.6%,#999,#aa9,#aa9,#aa9,#aa9,#aa9,#aa9,#aa9,#aa9,#aa9,#aa9,#aa9,#aa9,#aa9,#aa9,#aa9,#aa9,#aa9,#aa9,#aa9,#aa9,#aa9,#aa9,#aa9,#aa9,#aa9,#aa9,#aa9,#aa9,#aa9,#aa9,#aa9,#aa9,#a99,#a99,#a99,#a99,#a99,#a99,#a99,#a99,#a99,#a99,#aa9,#aa9,#aa9,#aa9,#aa9,#aa9,#aa9,#a99,#a99,#a99,#a99,#aa9,#aa9,#aaa,#baa,#bbb,#ccb,#dcc)"></i><i style="left:518.4px;width:3px;background:linear-gradient(#000 31.6%,#998 31.6%,#999,#aa9,#aa9,#aa9,#aa9,#aa9,#aa9,#aa9,#aa9,#aa9,#aa9,#aa9,#aa9,#aa9,#aa9,#aa9,#aa9,#aa9,#aa9,#aa9,#aa9,#aa9,#aa9,#aa9,#aa9,#aa9,#aa9,#aa9,#aa9,#aa9,#aa9,#aa9,#aa9,#a99,#a99,#a99,#a99,#a99,#a99,#a99,#a99,#a99,#a99,#aa9,#aa9,#aa9,#aa9,#aa9,#aa9,#aa9,#a99,#a99,#a99,#a99,#aa9,#aa9,#aaa,#baa,#bbb,#ccb,#dcc)"></i><i style="left:521.3px;width:3px;background:linear-gradient(#000 31.6%,#998 31.6%,#999,#aa9,#aa9,#aa9,#aa9,#aa9,#aa9,#aa9,#aa9,#aa9,#aa9,#aa9,#aa9,#aa9,#aa9,#aa9,#aa9,#aa9,#aa9,#aa9,#aa9,#aa9,#aa9,#aa9,#aa9,#aa9,#aa9,#aa9,#aa9,#aa9,#aa9,#aa9,#aa9,#a99,#a99,#a99,#a99,#a99,#a99,#a99,#a99,#a99,#a99,#aa9,#aa9,#aa9,#aa9,#aa9,#aa9,#aa9,#a99,#a99,#a99,#a99,#aa9,#aa9,#aaa,#baa,#bbb,#ccb,#dcc)"></i><i style="left:524.2px;width:3px;background:linear-gradient(#000 31.6%,#998 31.6%,#999,#aa9,#aa9,#aa9,#aa9,#aa9,#aa9,#aa9,#aa9,#aa9,#aa9,#aa9,#aa9,#aa9,#aa9,#aa9,#aa9,#aa9,#aa9,#aa9,#aa9,#aa9,#aa9,#aa9,#aa9,#aa9,#aa9,#aa9,#aa9,#aa9,#aa9,#aa9,#aa9,#a99,#a99,#a99,#a99,#a99,#a99,#a99,#a99,#a99,#a99,#aa9,#aa9,#aa9,#aa9,#aa9,#aa9,#aa9,#a99,#a99,#a99,#a99,#aa9,#aa9,#aaa,#baa,#bbb,#ccb,#dcc)"></i><i style="left:527.1px;width:3px;background:linear-gradient(#000 31.6%,#998 31.6%,#999,#aa9,#aa9,#aa9,#aa9,#aa9,#aa9,#aa9,#aa9,#aa9,#aa9,#aa9,#aa9,#aa9,#aa9,#aa9,#aa9,#aa9,#aa9,#aa9,#aa9,#aa9,#aa9,#aa9,#aa9,#aa9,#aa9,#aa9,#aa9,#aa9,#aa9,#aa9,#aa9,#a99,#a99,#a99,#a99,#a99,#a99,#a99,#a99,#a99,#a99,#aa9,#aa9,#aa9,#aa9,#aa9,#aa9,#aa9,#a99,#a99,#a99,#a99,#aa9,#aa9,#aaa,#baa,#bbb,#ccb,#dcc)"></i><i style="left:530px;width:3.1px;background:linear-gradient(#000 31.6%,#777 31.6%,#777,#777,#777,#777,#777,#777,#777,#777,#777,#777,#877,#877,#877,#877,#877,#877,#877,#877,#877,#877,#877,#877,#877,#877,#877,#877,#877,#877,#877,#887,#887,#887,#888,#888,#888,#888,#988,#888,#877,#877,#877,#877,#888,#a99,#a99,#aa9,#aa9,#aa9,#aa9,#aa9,#aa9,#999,#998,#998,#998,#998,#999,#aaa,#bba,#cbb,#dcc)"></i><i style="left:532.9px;width:3.1px;background:linear-gradient(#000 31.6%,#777 31.6%,#777,#777,#777,#777,#777,#777,#777,#777,#777,#777,#877,#877,#877,#877,#877,#877,#877,#877,#877,#877,#877,#877,#877,#877,#877,#877,#877,#877,#877,#887,#887,#887,#888,#888,#888,#888,#988,#888,#877,#877,#877,#877,#888,#a99,#a99,#aa9,#aa9,#aa9,#aa9,#aa9,#aa9,#999,#998,#998,#998,#998,#999,#aaa,#bba,#cbb,#dcc)"></i><i style="left:535.9px;width:3.1px;background:linear-gradient(#000 31.6%,#777 31.6%,#777,#777,#777,#777,#777,#777,#777,#777,#777,#777,#877,#877,#877,#877,#877,#877,#877,#877,#877,#877,#877,#877,#877,#877,#877,#877,#877,#877,#877,#887,#887,#887,#888,#888,#888,#888,#988,#888,#877,#877,#877,#877,#888,#a99,#a99,#aa9,#aa9,#aa9,#aa9,#aa9,#aa9,#999,#998,#998,#998,#998,#999,#aaa,#bba,#cbb,#dcc)"></i><i style="left:538.8px;width:3.1px;background:linear-gradient(#000 31.6%,#777 31.6%,#777,#777,#777,#777,#777,#777,#777,#777,#777,#777,#877,#877,#877,#877,#877,#877,#877,#877,#877,#877,#877,#877,#877,#877,#877,#877,#877,#877,#877,#887,#887,#887,#888,#888,#888,#888,#988,#888,#877,#877,#877,#877,#888,#a99,#a99,#aa9,#aa9,#aa9,#aa9,#aa9,#aa9,#999,#998,#998,#998,#998,#999,#aaa,#bba,#cbb,#dcc)"></i><i style="left:541.8px;width:3.1px;background:linear-gradient(#000 31.6%,#777 31.6%,#777,#777,#777,#777,#777,#777,#777,#777,#777,#777,#877,#877,#877,#877,#877,#877,#877,#877,#877,#877,#877,#877,#877,#877,#877,#877,#877,#877,#877,#887,#887,#887,#888,#888,#888,#888,#988,#888,#877,#877,#877,#877,#888,#a99,#a99,#aa9,#aa9,#aa9,#aa9,#aa9,#aa9,#999,#998,#998,#998,#998,#999,#aaa,#bba,#cbb,#dcc)"></i><i style="left:544.7px;width:3.1px;background:linear-gradient(#000 31.6%,#777 31.6%,#777,#777,#777,#777,#777,#777,#777,#777,#777,#777,#877,#877,#877,#877,#877,#877,#877,#877,#877,#877,#877,#877,#877,#877,#877,#877,#877,#877,#877,#887,#887,#887,#888,#888,#888,#888,#988,#888,#877,#877,#877,#877,#888,#a99,#a99,#aa9,#aa9,#aaa,#aaa,#aa9,#aa9,#999,#998,#998,#998,#998,#999,#aaa,#bba,#cbb,#dcc)"></i><i style="left:547.7px;width:3.1px;background:linear-gradient(#000 31.6%,#777 31.6%,#777,#777,#777,#777,#777,#777,#777,#777,#777,#777,#877,#877,#877,#877,#877,#877,#877,#877,#877,#877,#877,#877,#877,#877,#877,#877,#877,#877,#877,#887,#887,#887,#888,#888,#888,#888,#988,#888,#877,#877,#877,#877,#888,#a99,#a99,#aa9,#aa9,#aaa,#aaa,#aaa,#aa9,#999,#998,#998,#998,#998,#999,#aaa,#bba,#cbb,#dcc)"></i><i style="left:550.6px;width:3.1px;background:linear-gradient(#000 31.6%,#777 31.6%,#777,#777,#777,#777,#777,#777,#777,#777,#777,#777,#877,#877,#877,#877,#877,#877,#877,#877,#877,#877,#877,#877,#877,#877,#877,#877,#877,#877,#877,#887,#887,#887,#888,#888,#888,#888,#988,#888,#877,#877,#877,#877,#888,#a99,#a99,#aa9,#aa9,#aaa,#aaa,#aaa,#aa9,#999,#998,#998,#998,#998,#999,#aaa,#bba,#cbb,#dcc)"></i><i style="left:553.6px;width:3.1px;background:linear-gradient(#000 31.6%,#777 31.6%,#777,#777,#777,#777,#777,#777,#777,#777,#777,#777,#877,#877,#877,#877,#877,#877,#877,#877,#877,#877,#877,#877,#877,#877,#877,#877,#877,#877,#877,#887,#887,#887,#888,#888,#888,#888,#988,#888,#877,#877,#877,#877,#888,#a99,#a99,#aa9,#aaa,#baa,#baa,#aaa,#aa9,#999,#998,#998,#998,#998,#999,#aaa,#bba,#cbb,#dcc)"></i><i style="left:556.5px;width:3.1px;background:linear-gradient(#000 31.6%,#777 31.6%,#777,#777,#777,#777,#777,#777,#777,#777,#777,#777,#877,#877,#877,#877,#877,#877,#877,#877,#877,#877,#877,#877,#877,#877,#877,#877,#877,#877,#877,#887,#887,#887,#888,#888,#888,#888,#988,#888,#877,#877,#877,#877,#888,#a99,#a99,#aa9,#aaa,#baa,#baa,#aaa,#aa9,#999,#998,#998,#998,#998,#999,#aaa,#bba,#cbb,#dcc)"></i><i style="left:559.5px;width:3.1px;background:linear-gradient(#000 31.6%,#777 31.6%,#777,#777,#777,#777,#777,#777,#777,#777,#777,#777,#877,#877,#877,#877,#877,#877,#877,#877,#877,#877,#877,#877,#877,#877,#877,#877,#877,#877,#877,#887,#887,#887,#888,#888,#888,#888,#988,#888,#877,#877,#877,#877,#888,#a99,#a99,#aa9,#aaa,#baa,#baa,#aaa,#aa9,#999,#998,#998,#998,#998,#999,#aaa,#bba,#cbb,#dcc)"></i><i style="left:562.4px;width:3.1px;background:linear-gradient(#000 31.6%,#777 31.6%,#777,#777,#777,#777,#777,#777,#777,#777,#777,#777,#877,#877,#877,#877,#877,#877,#877,#877,#877,#877,#877,#877,#877,#877,#877,#877,#877,#877,#877,#887,#887,#887,#888,#888,#888,#888,#988,#888,#877,#877,#877,#877,#888,#a99,#a99,#aa9,#aaa,#baa,#baa,#aaa,#aa9,#999,#998,#998,#998,#998,#999,#aaa,#bba,#cbb,#dcc)"></i><i style="left:565.4px;width:3.1px;background:linear-gradient(#000 31.6%,#777 31.6%,#777,#777,#777,#777,#777,#777,#777,#777,#777,#777,#877,#877,#877,#877,#877,#877,#877,#877,#877,#877,#877,#877,#877,#877,#877,#877,#877,#877,#877,#887,#887,#887,#888,#888,#888,#888,#988,#888,#877,#877,#877,#877,#888,#a99,#a99,#aa9,#aa9,#aaa,#aaa,#aaa,#aa9,#999,#998,#998,#998,#998,#999,#aaa,#bba,#cbb,#dcc)"></i><i style="left:568.3px;width:3.1px;background:linear-gradient(#000 31.6%,#777 31.6%,#777,#777,#777,#777,#777,#777,#777,#777,#777,#777,#877,#877,#877,#877,#877,#877,#877,#877,#877,#877,#877,#877,#877,#877,#877,#877,#877,#877,#877,#887,#887,#887,#888,#888,#888,#888,#988,#888,#877,#877,#877,#877,#888,#a99,#a99,#aa9,#aa9,#aaa,#aaa,#aaa,#aa9,#999,#998,#998,#998,#998,#999,#aaa,#bba,#cbb,#dcc)"></i><i style="left:571.3px;width:3.1px;background:linear-gradient(#000 31.6%,#777 31.6%,#777,#777,#777,#777,#777,#777,#777,#777,#777,#777,#877,#877,#877,#877,#877,#877,#877,#877,#877,#877,#877,#877,#877,#877,#877,#877,#877,#877,#877,#887,#887,#887,#888,#888,#888,#888,#988,#888,#877,#877,#877,#877,#888,#a99,#a99,#aa9,#aa9,#aaa,#aaa,#aaa,#aa9,#999,#998,#998,#998,#998,#999,#aaa,#bba,#cbb,#dcc)"></i><i style="left:574.2px;width:3.1px;background:linear-gradient(#000 31.6%,#777 31.6%,#777,#777,#777,#777,#777,#777,#777,#777,#777,#777,#877,#877,#877,#877,#877,#877,#877,#877,#877,#877,#877,#877,#877,#877,#877,#877,#877,#877,#877,#887,#887,#887,#888,#888,#888,#888,#988,#888,#877,#877,#877,#877,#888,#a99,#a99,#aa9,#aa9,#aa9,#aa9,#aa9,#aa9,#999,#998,#998,#998,#998,#999,#aaa,#bba,#cbb,#dcc)"></i><i style="left:577.2px;width:3.1px;background:linear-gradient(#000 31.6%,#777 31.6%,#777,#777,#777,#777,#777,#777,#777,#777,#777,#777,#877,#877,#877,#877,#877,#877,#877,#877,#877,#877,#877,#877,#877,#877,#877,#877,#877,#877,#877,#887,#887,#887,#888,#888,#888,#888,#988,#888,#877,#877,#877,#877,#888,#a99,#a99,#aa9,#aa9,#aa9,#aa9,#aa9,#aa9,#999,#998,#998,#998,#998,#999,#aaa,#bba,#cbb,#dcc)"></i><i style="left:580.1px;width:3.1px;background:linear-gradient(#000 31.6%,#777 31.6%,#777,#777,#777,#777,#777,#777,#777,#777,#777,#777,#877,#877,#877,#877,#877,#877,#877,#877,#877,#877,#877,#877,#877,#877,#877,#877,#877,#877,#877,#887,#887,#887,#888,#888,#888,#888,#988,#888,#877,#877,#877,#877,#888,#a99,#a99,#aa9,#aa9,#aa9,#aa9,#aa9,#aa9,#999,#998,#998,#998,#998,#999,#aaa,#bba,#cbb,#dcc)"></i><i style="left:583.1px;width:3.1px;background:linear-gradient(#000 31.6%,#777 31.6%,#777,#777,#777,#777,#777,#777,#777,#777,#777,#777,#877,#877,#877,#877,#877,#877,#877,#877,#877,#877,#877,#877,#877,#877,#877,#877,#877,#877,#877,#887,#887,#887,#888,#888,#888,#888,#988,#888,#877,#877,#877,#877,#888,#a99,#a99,#aa9,#aa9,#aa9,#aa9,#aa9,#aa9,#999,#998,#998,#998,#998,#999,#aaa,#bba,#cbb,#dcc)"></i><i style="left:586px;width:2.8px;background:linear-gradient(#000 31.6%,#655 31.6%,#655,#655,#655,#655,#655,#655,#655,#655,#655,#655,#655,#655,#655,#655,#655,#655,#665,#665,#665,#665,#665,#665,#665,#665,#665,#665,#665,#665,#665,#665,#665,#665,#665,#665,#665,#666,#666,#666,#766,#766,#766,#776,#776,#777,#877,#887,#888,#988,#988,#988,#988,#988,#988,#998,#999,#a99,#aaa,#baa,#bbb,#ccb,#ddc)"></i><i style="left:588.7px;width:2.8px;background:linear-gradient(#000 31.6%,#655 31.6%,#655,#655,#655,#655,#655,#655,#655,#655,#655,#655,#655,#655,#655,#655,#655,#655,#665,#665,#665,#665,#665,#665,#665,#665,#665,#665,#665,#665,#665,#665,#665,#665,#665,#665,#665,#666,#666,#666,#766,#766,#766,#776,#776,#777,#877,#887,#888,#988,#988,#988,#988,#988,#988,#998,#999,#a99,#aaa,#baa,#bbb,#ccb,#ddc)"></i><i style="left:591.3px;width:2.8px;background:linear-gradient(#000 31.6%,#655 31.6%,#655,#655,#655,#655,#655,#655,#655,#655,#655,#655,#655,#655,#655,#655,#655,#655,#665,#665,#665,#665,#665,#665,#665,#665,#665,#665,#665,#665,#665,#665,#665,#665,#665,#665,#665,#666,#666,#666,#766,#766,#766,#776,#776,#777,#877,#887,#888,#988,#988,#988,#988,#988,#988,#998,#999,#a99,#aaa,#baa,#bbb,#ccb,#ddc)"></i><i style="left:594px;width:2.5px;background:linear-gradient(#000 27.4%,#433 27.4%,#444,#544,#555,#766,#877,#877,#877,#877,#877,#877,#877,#877,#877,#877,#877,#877,#877,#877,#877,#877,#877,#877,#877,#877,#877,#877,#877,#877,#877,#877,#877,#877,#877,#877,#877,#877,#877,#877,#877,#877,#877,#877,#877,#877,#877,#877,#877,#877,#877,#877,#877,#777,#766,#666,#766,#766,#766,#776,#877,#887,#888,#998,#aa9,#bba,#ccb)"></i><i style="left:596.3px;width:2.5px;background:linear-gradient(#000 27.4%,#433 27.4%,#444,#544,#555,#766,#877,#877,#877,#877,#877,#877,#877,#877,#877,#877,#877,#877,#877,#877,#877,#877,#877,#877,#877,#877,#877,#877,#877,#877,#877,#877,#877,#877,#877,#877,#877,#877,#877,#877,#877,#877,#877,#877,#877,#877,#877,#877,#877,#877,#877,#877,#877,#777,#766,#666,#766,#766,#766,#776,#877,#887,#888,#998,#aa9,#bba,#ccb)"></i><i style="left:598.7px;width:2.5px;background:linear-gradient(#000 27.4%,#433 27.4%,#444,#544,#555,#766,#877,#877,#877,#877,#877,#877,#877,#877,#877,#877,#877,#877,#877,#877,#877,#877,#877,#877,#877,#877,#877,#877,#877,#877,#877,#877,#877,#877,#877,#877,#877,#877,#877,#877,#877,#877,#877,#877,#877,#877,#877,#877,#877,#877,#877,#877,#877,#777,#766,#666,#766,#766,#766,#776,#877,#887,#888,#998,#aa9,#bba,#ccb)"></i><i style="left:601px;width:2.9px;background:linear-gradient(#000 32.7%,#444 32.7%,#444,#444,#444,#444,#444,#444,#444,#444,#444,#444,#444,#444,#444,#444,#444,#444,#444,#444,#444,#444,#444,#544,#544,#544,#544,#544,#544,#544,#544,#544,#544,#544,#544,#544,#544,#544,#544,#544,#544,#544,#544,#544,#544,#544,#544,#544,#544,#544,#554,#555,#555,#655,#665,#666,#766,#776,#877,#988,#a99,#bba)"></i><i style="left:603.8px;width:2.9px;background:linear-gradient(#000 32.7%,#444 32.7%,#444,#444,#444,#444,#444,#444,#444,#444,#444,#444,#444,#444,#444,#444,#444,#444,#444,#444,#444,#444,#444,#544,#544,#544,#544,#544,#544,#544,#544,#544,#544,#544,#544,#544,#544,#544,#544,#544,#544,#544,#544,#544,#544,#544,#544,#544,#544,#544,#554,#555,#555,#655,#665,#666,#766,#776,#877,#988,#a99,#bba)"></i><i style="left:606.5px;width:2.9px;background:linear-gradient(#000 32.7%,#444 32.7%,#444,#444,#444,#444,#444,#444,#444,#444,#444,#444,#444,#444,#444,#444,#444,#444,#444,#444,#444,#444,#444,#544,#544,#544,#544,#544,#544,#544,#544,#544,#544,#544,#544,#544,#544,#544,#544,#544,#544,#544,#544,#544,#544,#544,#544,#544,#544,#544,#554,#555,#555,#655,#665,#666,#766,#776,#877,#988,#a99,#bba)"></i><i style="left:609.2px;width:2.9px;background:linear-gradient(#000 32.7%,#444 32.7%,#444,#444,#444,#444,#444,#444,#444,#444,#444,#444,#444,#444,#444,#444,#444,#444,#444,#444,#444,#444,#444,#544,#544,#544,#544,#544,#544,#544,#544,#544,#544,#544,#544,#544,#544,#544,#544,#544,#544,#544,#544,#544,#544,#544,#544,#544,#544,#544,#554,#555,#555,#655,#665,#666,#766,#776,#877,#988,#a99,#bba)"></i><i style="left:612px;width:3px;background:linear-gradient(#000 34.3%,#333 34.3%,#333,#333,#333,#333,#333,#333,#333,#333,#333,#333,#333,#333,#333,#333,#333,#333,#333,#333,#333,#333,#333,#333,#333,#433,#433,#433,#433,#433,#433,#433,#433,#433,#433,#433,#433,#433,#433,#433,#433,#433,#443,#443,#444,#444,#544,#544,#544,#544,#544,#544,#544,#544,#544,#544,#555,#666,#766,#888,#aa9)"></i><i style="left:614.9px;width:3px;background:linear-gradient(#000 34.3%,#333 34.3%,#333,#333,#333,#333,#333,#333,#333,#333,#333,#333,#333,#333,#333,#333,#333,#333,#333,#333,#333,#333,#333,#333,#333,#433,#433,#433,#433,#433,#433,#433,#433,#433,#433,#433,#433,#433,#433,#433,#433,#433,#443,#443,#444,#444,#544,#544,#544,#544,#544,#544,#544,#544,#544,#544,#555,#666,#766,#888,#aa9)"></i><i style="left:617.8px;width:3px;background:linear-gradient(#000 34.3%,#333 34.3%,#333,#333,#333,#333,#333,#333,#333,#333,#333,#333,#333,#333,#333,#333,#333,#333,#333,#333,#333,#333,#333,#333,#333,#433,#433,#433,#433,#433,#433,#433,#433,#433,#433,#433,#433,#433,#433,#433,#433,#433,#443,#443,#444,#444,#544,#544,#544,#544,#544,#544,#544,#544,#544,#544,#555,#666,#766,#888,#aa9)"></i><i style="left:620.7px;width:3px;background:linear-gradient(#000 34.3%,#333 34.3%,#333,#333,#333,#333,#333,#333,#333,#333,#333,#333,#333,#333,#333,#333,#333,#333,#333,#333,#333,#333,#333,#333,#333,#433,#433,#433,#433,#433,#433,#433,#433,#433,#433,#433,#433,#433,#433,#433,#433,#433,#443,#443,#444,#444,#544,#544,#544,#544,#544,#544,#544,#544,#544,#544,#555,#666,#766,#888,#aa9)"></i><i style="left:623.6px;width:3px;background:linear-gradient(#000 34.3%,#333 34.3%,#333,#333,#333,#333,#333,#333,#333,#333,#333,#333,#333,#333,#333,#333,#333,#333,#333,#333,#333,#333,#333,#333,#333,#433,#433,#433,#433,#433,#433,#433,#433,#433,#433,#433,#433,#433,#433,#433,#433,#433,#443,#443,#444,#444,#544,#544,#544,#544,#544,#544,#544,#544,#544,#544,#555,#666,#766,#888,#aa9)"></i><i style="left:626.5px;width:3px;background:linear-gradient(#000 34.3%,#333 34.3%,#333,#333,#333,#333,#333,#333,#333,#333,#333,#333,#333,#333,#333,#333,#333,#333,#333,#333,#333,#333,#333,#333,#333,#433,#433,#433,#433,#433,#433,#433,#433,#433,#433,#433,#433,#433,#433,#433,#433,#433,#443,#443,#444,#444,#544,#544,#544,#544,#544,#544,#544,#544,#544,#544,#555,#666,#766,#888,#aa9)"></i><i style="left:629.4px;width:3px;background:linear-gradient(#000 34.3%,#333 34.3%,#333,#333,#333,#333,#333,#333,#333,#333,#333,#333,#333,#333,#333,#333,#333,#333,#333,#333,#333,#333,#333,#333,#333,#433,#433,#433,#433,#433,#433,#433,#433,#433,#433,#433,#433,#433,#433,#433,#433,#433,#443,#443,#444,#444,#544,#544,#544,#544,#544,#544,#544,#544,#544,#544,#555,#666,#766,#888,#aa9)"></i><i style="left:632.3px;width:3px;background:linear-gradient(#000 34.3%,#333 34.3%,#333,#333,#333,#333,#333,#333,#333,#333,#333,#333,#333,#333,#333,#333,#333,#333,#333,#333,#333,#333,#333,#333,#333,#433,#433,#433,#433,#433,#433,#433,#433,#433,#433,#433,#433,#433,#433,#433,#433,#433,#443,#443,#444,#444,#544,#544,#544,#544,#544,#544,#544,#544,#544,#544,#555,#666,#766,#888,#aa9)"></i><i style="left:635.2px;width:3px;background:linear-gradient(#000 34.3%,#333 34.3%,#333,#333,#333,#333,#333,#333,#333,#333,#333,#333,#333,#333,#333,#333,#333,#333,#333,#333,#333,#333,#333,#333,#333,#433,#433,#433,#433,#433,#433,#433,#433,#433,#433,#433,#433,#433,#433,#433,#433,#433,#443,#443,#444,#444,#544,#544,#544,#544,#544,#544,#544,#544,#544,#544,#555,#666,#766,#888,#aa9)"></i><i style="left:638.1px;width:3px;background:linear-gradient(#000 34.3%,#333 34.3%,#333,#333,#333,#333,#333,#333,#333,#333,#333,#333,#333,#333,#333,#333,#333,#333,#333,#333,#333,#333,#333,#333,#333,#433,#433,#433,#433,#433,#433,#433,#433,#433,#433,#433,#433,#433,#433,#433,#433,#433,#443,#443,#444,#444,#544,#544,#544,#544,#544,#544,#544,#544,#544,#544,#555,#666,#766,#888,#aa9)"></i><i style="left:641px;width:3px;background:linear-gradient(#000 34.3%,#333 34.3%,#333,#333,#333,#333,#333,#333,#333,#333,#333,#333,#333,#333,#333,#333,#333,#333,#333,#333,#333,#333,#333,#333,#333,#333,#333,#333,#433,#433,#433,#433,#433,#433,#433,#433,#433,#433,#433,#433,#433,#433,#443,#443,#444,#444,#544,#544,#544,#544,#544,#544,#544,#544,#544,#544,#555,#666,#766,#887,#a99)"></i><i style="left:643.9px;width:3px;background:linear-gradient(#000 34.3%,#333 34.3%,#333,#333,#333,#333,#333,#333,#333,#333,#333,#333,#333,#333,#333,#333,#333,#333,#333,#333,#333,#333,#333,#333,#333,#333,#333,#333,#433,#433,#433,#433,#433,#433,#433,#433,#433,#433,#433,#433,#433,#433,#443,#443,#444,#444,#544,#544,#544,#544,#544,#544,#544,#544,#544,#544,#555,#666,#766,#887,#a99)"></i><i style="left:646.7px;width:3px;background:linear-gradient(#000 34.3%,#333 34.3%,#333,#333,#333,#333,#333,#333,#333,#333,#333,#333,#333,#333,#333,#333,#333,#333,#333,#333,#333,#333,#333,#333,#333,#333,#333,#333,#433,#433,#433,#433,#433,#433,#433,#433,#433,#433,#433,#433,#433,#433,#443,#443,#444,#444,#544,#544,#544,#544,#544,#544,#544,#544,#544,#544,#555,#666,#766,#887,#a99)"></i><i style="left:649.6px;width:3px;background:linear-gradient(#000 34.3%,#333 34.3%,#333,#333,#333,#333,#333,#333,#333,#333,#333,#333,#333,#333,#333,#333,#333,#333,#333,#333,#333,#333,#333,#333,#333,#333,#333,#333,#433,#433,#433,#433,#433,#433,#433,#433,#433,#433,#433,#433,#433,#433,#443,#443,#444,#444,#544,#544,#544,#544,#544,#544,#544,#544,#544,#544,#555,#666,#766,#887,#a99)"></i><i style="left:652.4px;width:3px;background:linear-gradient(#000 34.3%,#333 34.3%,#333,#333,#333,#333,#333,#333,#333,#333,#333,#333,#333,#333,#333,#333,#333,#333,#333,#333,#333,#333,#333,#333,#333,#333,#333,#333,#433,#433,#433,#433,#433,#433,#433,#433,#433,#433,#433,#433,#433,#433,#443,#443,#444,#444,#544,#544,#544,#544,#544,#544,#544,#544,#544,#544,#555,#666,#766,#887,#a99)"></i><i style="left:655.3px;width:3px;background:linear-gradient(#000 34.3%,#333 34.3%,#333,#333,#333,#333,#333,#333,#333,#333,#333,#333,#333,#333,#333,#333,#333,#333,#333,#333,#333,#333,#333,#333,#333,#333,#333,#333,#433,#433,#433,#433,#433,#433,#433,#433,#433,#433,#433,#433,#433,#433,#443,#443,#444,#444,#544,#544,#544,#544,#544,#544,#544,#544,#544,#544,#555,#666,#766,#887,#a99)"></i><i style="left:658.1px;width:3px;background:linear-gradient(#000 34.3%,#333 34.3%,#333,#333,#333,#333,#333,#333,#333,#333,#333,#333,#333,#333,#333,#333,#333,#333,#333,#333,#333,#333,#333,#333,#333,#333,#333,#333,#433,#433,#433,#433,#433,#433,#433,#433,#433,#433,#433,#433,#433,#433,#443,#443,#444,#444,#544,#544,#544,#544,#544,#544,#544,#544,#544,#544,#555,#666,#766,#887,#a99)"></i><i style="left:661px;width:3px;background:linear-gradient(#000 34.3%,#333 34.3%,#333,#333,#333,#333,#333,#333,#333,#333,#333,#333,#333,#333,#333,#333,#333,#333,#333,#333,#333,#333,#333,#333,#333,#333,#333,#333,#433,#433,#433,#433,#433,#433,#433,#433,#433,#433,#433,#433,#433,#433,#443,#443,#444,#444,#544,#544,#544,#544,#544,#544,#544,#544,#544,#544,#555,#666,#766,#887,#a99)"></i><i style="left:663.9px;width:3px;background:linear-gradient(#000 34.3%,#333 34.3%,#333,#333,#333,#333,#333,#333,#333,#333,#333,#333,#333,#333,#333,#333,#333,#333,#333,#333,#333,#333,#333,#333,#333,#333,#333,#333,#433,#433,#433,#433,#433,#433,#433,#433,#433,#433,#433,#433,#433,#433,#443,#443,#444,#444,#544,#544,#544,#544,#544,#544,#544,#544,#544,#544,#555,#666,#766,#887,#a99)"></i><i style="left:666.7px;width:3px;background:linear-gradient(#000 34.3%,#333 34.3%,#333,#333,#333,#333,#333,#333,#333,#333,#333,#333,#333,#333,#333,#333,#333,#333,#333,#333,#333,#333,#333,#333,#333,#333,#333,#333,#433,#433,#433,#433,#433,#433,#433,#433,#433,#433,#433,#433,#433,#433,#443,#443,#444,#444,#544,#544,#544,#544,#544,#544,#544,#544,#544,#544,#555,#666,#766,#887,#a99)"></i><i style="left:669.6px;width:3px;background:linear-gradient(#000 34.3%,#333 34.3%,#333,#333,#333,#333,#333,#333,#333,#333,#333,#333,#333,#333,#333,#333,#333,#333,#333,#333,#333,#333,#333,#333,#333,#333,#333,#333,#433,#433,#433,#433,#433,#433,#433,#433,#433,#433,#433,#433,#433,#433,#443,#443,#444,#444,#544,#544,#544,#544,#544,#544,#544,#544,#544,#544,#555,#666,#766,#887,#a99)"></i><i style="left:672.4px;width:3px;background:linear-gradient(#000 34.3%,#333 34.3%,#333,#333,#333,#333,#333,#333,#333,#333,#333,#333,#333,#333,#333,#333,#333,#333,#333,#333,#333,#333,#333,#333,#333,#333,#333,#333,#433,#433,#433,#433,#433,#433,#433,#433,#433,#433,#433,#433,#433,#433,#443,#443,#444,#444,#544,#544,#544,#544,#544,#544,#544,#544,#544,#544,#555,#666,#766,#887,#a99)"></i><i style="left:675.3px;width:3px;background:linear-gradient(#000 34.3%,#333 34.3%,#333,#333,#333,#333,#333,#333,#333,#333,#333,#333,#333,#333,#333,#333,#333,#333,#333,#333,#333,#333,#333,#333,#333,#333,#333,#333,#433,#433,#433,#433,#433,#433,#433,#433,#433,#433,#433,#433,#433,#433,#443,#443,#444,#444,#544,#544,#544,#544,#544,#544,#544,#544,#544,#544,#555,#666,#766,#887,#a99)"></i><i style="left:678.1px;width:3px;background:linear-gradient(#000 34.3%,#333 34.3%,#333,#333,#333,#333,#333,#333,#333,#333,#333,#333,#333,#333,#333,#333,#333,#333,#333,#333,#333,#333,#333,#333,#333,#333,#333,#333,#433,#433,#433,#433,#433,#433,#433,#433,#433,#433,#433,#433,#433,#433,#443,#443,#444,#444,#544,#544,#544,#544,#544,#544,#544,#544,#544,#544,#555,#666,#766,#887,#a99)"></i><i style="left:681px;width:3px;background:linear-gradient(#000 34.3%,#333 34.3%,#333,#333,#333,#333,#333,#333,#333,#333,#333,#333,#333,#333,#333,#333,#333,#333,#333,#333,#333,#333,#333,#333,#333,#333,#333,#333,#333,#333,#333,#333,#433,#433,#433,#433,#433,#433,#433,#433,#433,#433,#443,#443,#444,#444,#444,#544,#544,#544,#544,#544,#544,#544,#544,#544,#555,#666,#766,#887,#999)"></i><i style="left:683.9px;width:3px;background:linear-gradient(#000 34.3%,#333 34.3%,#333,#333,#333,#333,#333,#333,#333,#333,#333,#333,#333,#333,#333,#333,#333,#333,#333,#333,#333,#333,#333,#333,#333,#333,#333,#333,#333,#333,#333,#333,#433,#433,#433,#433,#433,#433,#433,#433,#433,#433,#443,#443,#444,#444,#444,#544,#544,#544,#544,#544,#544,#544,#544,#544,#555,#666,#766,#887,#999)"></i><i style="left:686.7px;width:3px;background:linear-gradient(#000 34.3%,#333 34.3%,#333,#333,#333,#333,#333,#333,#333,#333,#333,#333,#333,#333,#333,#333,#333,#333,#333,#333,#333,#333,#333,#333,#333,#333,#333,#333,#333,#333,#333,#333,#433,#433,#433,#433,#433,#433,#433,#433,#433,#433,#443,#443,#444,#444,#444,#544,#544,#544,#544,#544,#544,#544,#544,#544,#555,#666,#766,#887,#999)"></i><i style="left:689.6px;width:3px;background:linear-gradient(#000 34.3%,#333 34.3%,#333,#333,#333,#333,#333,#333,#333,#333,#333,#333,#333,#333,#333,#333,#333,#333,#333,#333,#333,#333,#333,#333,#333,#333,#333,#333,#333,#333,#333,#333,#433,#433,#433,#433,#433,#433,#433,#433,#433,#433,#443,#443,#444,#444,#444,#544,#544,#544,#544,#544,#544,#544,#544,#544,#555,#666,#766,#887,#999)"></i><i style="left:692.4px;width:3px;background:linear-gradient(#000 34.3%,#333 34.3%,#333,#333,#333,#333,#333,#333,#333,#333,#333,#333,#333,#333,#333,#333,#333,#333,#333,#333,#333,#333,#333,#333,#333,#333,#333,#333,#333,#333,#333,#333,#433,#433,#433,#433,#433,#433,#433,#433,#433,#433,#443,#443,#444,#444,#444,#544,#544,#544,#544,#544,#544,#544,#544,#544,#555,#666,#766,#887,#999)"></i><i style="left:695.3px;width:3px;background:linear-gradient(#000 34.3%,#333 34.3%,#333,#333,#333,#333,#333,#333,#333,#333,#333,#333,#333,#333,#333,#333,#333,#333,#333,#333,#333,#333,#333,#333,#333,#333,#333,#333,#333,#333,#333,#333,#433,#433,#433,#433,#433,#433,#433,#433,#433,#433,#443,#443,#444,#444,#444,#544,#544,#544,#544,#544,#544,#544,#544,#544,#555,#666,#766,#887,#999)"></i><i style="left:698.1px;width:3px;background:linear-gradient(#000 34.3%,#333 34.3%,#333,#333,#333,#333,#333,#333,#333,#333,#333,#333,#333,#333,#333,#333,#333,#333,#333,#333,#333,#333,#333,#333,#333,#333,#333,#333,#333,#333,#333,#333,#433,#433,#433,#433,#433,#433,#433,#433,#433,#433,#443,#443,#444,#444,#444,#544,#544,#544,#544,#544,#544,#544,#544,#544,#555,#666,#766,#887,#999)"></i><i style="left:701px;width:3px;background:linear-gradient(#000 34.3%,#333 34.3%,#333,#333,#333,#333,#333,#333,#333,#333,#333,#333,#333,#333,#333,#333,#333,#333,#333,#333,#333,#333,#333,#333,#333,#333,#333,#333,#333,#333,#333,#333,#433,#433,#433,#433,#433,#433,#433,#433,#433,#433,#443,#443,#444,#444,#444,#544,#544,#544,#544,#544,#544,#544,#544,#544,#555,#666,#766,#887,#999)"></i><i style="left:703.9px;width:3px;background:linear-gradient(#000 34.3%,#333 34.3%,#333,#333,#333,#333,#333,#333,#333,#333,#333,#333,#333,#333,#333,#333,#333,#333,#333,#333,#333,#333,#333,#333,#333,#333,#333,#333,#333,#333,#333,#333,#433,#433,#433,#433,#433,#433,#433,#433,#433,#433,#443,#443,#444,#444,#444,#544,#544,#544,#544,#544,#544,#544,#544,#544,#555,#666,#766,#887,#999)"></i><i style="left:706.7px;width:3px;background:linear-gradient(#000 34.3%,#333 34.3%,#333,#333,#333,#333,#333,#333,#333,#333,#333,#333,#333,#333,#333,#333,#333,#333,#333,#333,#333,#333,#333,#333,#333,#333,#333,#333,#333,#333,#333,#333,#433,#433,#433,#433,#433,#433,#433,#433,#433,#433,#443,#443,#444,#444,#444,#544,#544,#544,#544,#544,#544,#544,#544,#544,#555,#666,#766,#887,#999)"></i><i style="left:709.6px;width:3px;background:linear-gradient(#000 34.3%,#333 34.3%,#333,#333,#333,#333,#333,#333,#333,#333,#333,#333,#333,#333,#333,#333,#333,#333,#333,#333,#333,#333,#333,#333,#333,#333,#333,#333,#333,#333,#333,#333,#433,#433,#433,#433,#433,#433,#433,#433,#433,#433,#443,#443,#444,#444,#444,#544,#544,#544,#544,#544,#544,#544,#544,#544,#555,#666,#766,#887,#999)"></i><i style="left:712.4px;width:3px;background:linear-gradient(#000 34.3%,#333 34.3%,#333,#333,#333,#333,#333,#333,#333,#333,#333,#333,#333,#333,#333,#333,#333,#333,#333,#333,#333,#333,#333,#333,#333,#333,#333,#333,#333,#333,#333,#333,#433,#433,#433,#433,#433,#433,#433,#433,#433,#433,#443,#443,#444,#444,#444,#544,#544,#544,#544,#544,#544,#544,#544,#544,#555,#666,#766,#887,#999)"></i><i style="left:715.3px;width:3px;background:linear-gradient(#000 34.3%,#333 34.3%,#333,#333,#333,#333,#333,#333,#333,#333,#333,#333,#333,#333,#333,#333,#333,#333,#333,#333,#333,#333,#333,#333,#333,#333,#333,#333,#333,#333,#333,#333,#433,#433,#433,#433,#433,#433,#433,#433,#433,#433,#443,#443,#444,#444,#444,#544,#544,#544,#544,#544,#544,#544,#544,#544,#555,#666,#766,#887,#999)"></i><i style="left:718.1px;width:3px;background:linear-gradient(#000 34.3%,#333 34.3%,#333,#333,#333,#333,#333,#333,#333,#333,#333,#333,#333,#333,#333,#333,#333,#333,#333,#333,#333,#333,#333,#333,#333,#333,#333,#333,#333,#333,#333,#333,#433,#433,#433,#433,#433,#433,#433,#433,#433,#433,#443,#443,#444,#444,#444,#544,#544,#544,#544,#544,#544,#544,#544,#544,#555,#666,#766,#887,#999)"></i><i style="left:721px;width:3.1px;background:linear-gradient(#000 34.3%,#332 34.3%,#332,#332,#332,#332,#332,#332,#332,#332,#332,#332,#332,#333,#333,#333,#333,#333,#333,#333,#333,#333,#333,#333,#333,#333,#333,#333,#333,#333,#333,#333,#333,#333,#333,#433,#433,#433,#433,#433,#433,#433,#443,#443,#443,#444,#444,#544,#544,#544,#544,#544,#544,#544,#544,#544,#555,#666,#766,#877,#988)"></i><i style="left:724px;width:3.1px;background:linear-gradient(#000 34.3%,#332 34.3%,#332,#332,#332,#332,#332,#332,#332,#332,#332,#332,#332,#333,#333,#333,#333,#333,#333,#333,#333,#333,#333,#333,#333,#333,#333,#333,#333,#333,#333,#333,#333,#333,#333,#433,#433,#433,#433,#433,#433,#433,#443,#443,#443,#444,#444,#544,#544,#544,#544,#544,#544,#544,#544,#544,#555,#666,#766,#877,#988)"></i><i style="left:727px;width:3.1px;background:linear-gradient(#000 34.3%,#332 34.3%,#332,#332,#332,#332,#332,#332,#332,#332,#332,#332,#332,#333,#333,#333,#333,#333,#333,#333,#333,#333,#333,#333,#333,#333,#333,#333,#333,#333,#333,#333,#333,#333,#333,#433,#433,#433,#433,#433,#433,#433,#443,#443,#443,#444,#444,#544,#544,#544,#544,#544,#544,#544,#544,#544,#555,#666,#766,#877,#988)"></i><i style="left:730px;width:3.1px;background:linear-gradient(#000 34.3%,#332 34.3%,#332,#332,#332,#332,#332,#332,#332,#332,#332,#332,#332,#333,#333,#333,#333,#333,#333,#333,#333,#333,#333,#333,#333,#333,#333,#333,#333,#333,#333,#333,#333,#333,#333,#433,#433,#433,#433,#433,#433,#433,#443,#443,#443,#444,#444,#544,#544,#544,#544,#544,#544,#544,#544,#544,#555,#666,#766,#877,#988)"></i><i style="left:733px;width:3.1px;background:linear-gradient(#000 34.3%,#332 34.3%,#332,#332,#332,#332,#332,#332,#332,#332,#332,#332,#332,#333,#333,#333,#333,#333,#333,#333,#333,#333,#333,#333,#333,#333,#333,#333,#333,#333,#333,#333,#333,#333,#333,#433,#433,#433,#433,#433,#433,#433,#443,#443,#443,#444,#444,#544,#544,#544,#544,#544,#544,#544,#544,#544,#555,#666,#766,#877,#988)"></i><i style="left:736px;width:3.1px;background:linear-gradient(#000 34.3%,#332 34.3%,#332,#332,#332,#332,#332,#332,#332,#332,#332,#332,#332,#333,#333,#333,#333,#333,#333,#333,#333,#333,#333,#333,#333,#333,#333,#333,#333,#333,#333,#333,#333,#333,#333,#433,#433,#433,#433,#433,#433,#433,#443,#443,#443,#444,#444,#544,#544,#544,#544,#544,#544,#544,#544,#544,#555,#666,#766,#877,#988)"></i><i style="left:739px;width:3.1px;background:linear-gradient(#000 34.3%,#332 34.3%,#332,#332,#332,#332,#332,#332,#332,#332,#332,#332,#332,#333,#333,#333,#333,#333,#333,#333,#333,#333,#333,#333,#333,#333,#333,#333,#333,#333,#333,#333,#333,#333,#333,#433,#433,#433,#433,#433,#433,#433,#443,#443,#443,#444,#444,#544,#544,#544,#544,#544,#544,#544,#544,#544,#555,#666,#766,#877,#988)"></i><i style="left:742px;width:3.1px;background:linear-gradient(#000 34.3%,#332 34.3%,#332,#332,#332,#332,#332,#332,#332,#332,#332,#332,#332,#333,#333,#333,#333,#333,#333,#333,#333,#333,#333,#333,#333,#333,#333,#333,#333,#333,#333,#333,#333,#333,#333,#433,#433,#433,#433,#433,#433,#433,#443,#443,#443,#444,#444,#544,#544,#544,#544,#544,#544,#544,#544,#544,#555,#666,#766,#877,#988)"></i><i style="left:745px;width:3.1px;background:linear-gradient(#000 34.3%,#332 34.3%,#332,#332,#332,#332,#332,#332,#332,#332,#332,#332,#332,#333,#333,#333,#333,#333,#333,#333,#333,#333,#333,#333,#333,#333,#333,#333,#333,#333,#333,#333,#333,#333,#333,#433,#433,#433,#433,#433,#433,#433,#443,#443,#443,#444,#444,#544,#544,#544,#544,#544,#544,#544,#544,#544,#555,#666,#766,#877,#988)"></i><i style="left:748px;width:2.8px;background:linear-gradient(#000 34.3%,#332 34.3%,#332,#332,#332,#332,#332,#332,#332,#332,#332,#332,#332,#332,#332,#332,#332,#332,#332,#332,#332,#332,#332,#332,#332,#333,#333,#333,#333,#333,#333,#333,#333,#333,#333,#333,#333,#333,#333,#333,#333,#433,#433,#443,#443,#443,#444,#444,#444,#444,#544,#544,#544,#544,#544,#544,#655,#776,#887,#988,#998)"></i><i style="left:750.6px;width:2.8px;background:linear-gradient(#000 34.3%,#332 34.3%,#332,#332,#332,#332,#332,#332,#332,#332,#332,#332,#332,#332,#332,#332,#332,#332,#332,#332,#332,#332,#332,#332,#332,#333,#333,#333,#333,#333,#333,#333,#333,#333,#333,#333,#333,#333,#333,#333,#333,#433,#433,#443,#443,#443,#444,#444,#444,#444,#544,#544,#544,#544,#544,#544,#655,#776,#887,#988,#998)"></i><i style="left:753.2px;width:2.8px;background:linear-gradient(#000 34.3%,#332 34.3%,#332,#332,#332,#332,#332,#332,#332,#332,#332,#332,#332,#332,#332,#332,#332,#332,#332,#332,#332,#332,#332,#332,#332,#333,#333,#333,#333,#333,#333,#333,#333,#333,#333,#333,#333,#333,#333,#333,#333,#433,#433,#443,#443,#443,#444,#444,#444,#444,#544,#544,#544,#544,#544,#544,#655,#776,#887,#988,#998)"></i><i style="left:755.8px;width:2.8px;background:linear-gradient(#000 34.3%,#332 34.3%,#332,#332,#332,#332,#332,#332,#332,#332,#332,#332,#332,#332,#332,#332,#332,#332,#332,#332,#332,#332,#332,#332,#332,#333,#333,#333,#333,#333,#333,#333,#333,#333,#333,#333,#333,#333,#333,#333,#333,#433,#433,#443,#443,#443,#444,#444,#444,#444,#544,#544,#544,#544,#544,#544,#655,#776,#887,#988,#998)"></i><i style="left:758.4px;width:2.8px;background:linear-gradient(#000 34.3%,#332 34.3%,#332,#332,#332,#332,#332,#332,#332,#332,#332,#332,#332,#332,#332,#332,#332,#332,#332,#332,#332,#332,#332,#332,#332,#333,#333,#333,#333,#333,#333,#333,#333,#333,#333,#333,#333,#333,#333,#333,#333,#433,#433,#443,#443,#443,#444,#444,#444,#444,#544,#544,#544,#544,#544,#544,#655,#776,#887,#988,#998)"></i><i style="left:761px;width:2.5px;background:linear-gradient(#000 34.3%,#332 34.3%,#332,#332,#332,#332,#332,#332,#332,#332,#332,#332,#332,#332,#332,#332,#332,#332,#332,#332,#332,#332,#332,#332,#332,#333,#333,#333,#333,#333,#333,#333,#333,#333,#443,#554,#555,#555,#555,#655,#655,#665,#666,#666,#766,#766,#776,#776,#777,#777,#777,#777,#877,#888,#998,#999,#999,#999,#999,#a99,#a99)"></i><i style="left:763.3px;width:2.5px;background:linear-gradient(#000 34.3%,#332 34.3%,#332,#332,#332,#332,#332,#332,#332,#332,#332,#332,#332,#332,#332,#332,#332,#332,#332,#332,#332,#332,#332,#332,#332,#333,#333,#333,#333,#333,#333,#333,#333,#333,#443,#554,#555,#555,#555,#655,#655,#665,#666,#666,#766,#766,#776,#776,#777,#777,#777,#777,#877,#888,#998,#999,#999,#999,#999,#a99,#a99)"></i><i style="left:765.7px;width:2.5px;background:linear-gradient(#000 34.3%,#332 34.3%,#332,#332,#332,#332,#332,#332,#332,#332,#332,#332,#332,#332,#332,#332,#332,#332,#332,#332,#332,#332,#332,#332,#332,#333,#333,#333,#333,#333,#333,#333,#333,#333,#443,#554,#555,#555,#555,#655,#655,#665,#666,#666,#766,#766,#776,#776,#777,#777,#777,#777,#877,#888,#998,#999,#999,#999,#999,#a99,#a99)"></i><i style="left:768px;width:2.8px;background:linear-gradient(#000 34.3%,#332 34.3%,#332,#332,#332,#332,#332,#332,#332,#332,#332,#332,#332,#332,#332,#332,#332,#332,#332,#332,#332,#332,#332,#332,#332,#333,#333,#333,#333,#333,#333,#333,#333,#333,#333,#333,#333,#333,#333,#333,#333,#433,#433,#443,#443,#443,#444,#444,#444,#444,#544,#544,#544,#544,#544,#544,#655,#776,#887,#988,#998)"></i><i style="left:770.7px;width:2.8px;background:linear-gradient(#000 34.3%,#332 34.3%,#332,#332,#332,#332,#332,#332,#332,#332,#332,#332,#332,#332,#332,#332,#332,#332,#332,#332,#332,#332,#332,#332,#332,#333,#333,#333,#333,#333,#333,#333,#333,#333,#333,#333,#333,#333,#333,#333,#333,#433,#433,#443,#443,#443,#444,#444,#444,#444,#544,#544,#544,#544,#544,#544,#655,#776,#887,#988,#998)"></i><i style="left:773.3px;width:2.8px;background:linear-gradient(#000 34.3%,#332 34.3%,#332,#332,#332,#332,#332,#332,#332,#332,#332,#332,#332,#332,#332,#332,#332,#332,#332,#332,#332,#332,#332,#332,#332,#333,#333,#333,#333,#333,#333,#333,#333,#333,#333,#333,#333,#333,#333,#333,#333,#433,#433,#443,#443,#443,#444,#444,#444,#444,#544,#544,#544,#544,#544,#544,#655,#776,#887,#988,#998)"></i><i style="left:776px;width:3.1px;background:linear-gradient(#000 34.3%,#332 34.3%,#332,#332,#332,#332,#332,#332,#332,#332,#332,#332,#332,#332,#332,#332,#332,#332,#332,#332,#332,#332,#332,#332,#332,#333,#333,#333,#333,#333,#333,#333,#333,#333,#333,#333,#333,#333,#333,#333,#333,#433,#433,#433,#443,#443,#443,#444,#444,#444,#444,#444,#444,#444,#444,#444,#554,#655,#666,#766,#776)"></i><i style="left:779px;width:3.1px;background:linear-gradient(#000 34.3%,#332 34.3%,#332,#332,#332,#332,#332,#332,#332,#332,#332,#332,#332,#332,#332,#332,#332,#332,#332,#332,#332,#332,#332,#332,#332,#333,#333,#333,#333,#333,#333,#333,#333,#333,#333,#333,#333,#333,#333,#333,#333,#433,#433,#433,#443,#443,#443,#444,#444,#444,#444,#444,#444,#444,#444,#444,#554,#655,#666,#766,#776)"></i><i style="left:782px;width:3.1px;background:linear-gradient(#000 34.3%,#332 34.3%,#332,#332,#332,#332,#332,#332,#332,#332,#332,#332,#332,#332,#332,#332,#332,#332,#332,#332,#332,#332,#332,#332,#332,#333,#333,#333,#333,#333,#333,#333,#333,#333,#333,#333,#333,#333,#333,#333,#333,#433,#433,#433,#443,#443,#443,#444,#444,#444,#444,#444,#444,#444,#444,#444,#554,#655,#666,#766,#776)"></i><i style="left:785px;width:3.1px;background:linear-gradient(#000 34.3%,#332 34.3%,#332,#332,#332,#332,#332,#332,#332,#332,#332,#332,#332,#332,#332,#332,#332,#332,#332,#332,#332,#332,#332,#332,#332,#333,#333,#333,#333,#333,#333,#333,#333,#333,#333,#333,#333,#333,#333,#333,#333,#433,#433,#433,#443,#443,#443,#444,#444,#444,#444,#444,#444,#444,#444,#444,#554,#655,#666,#766,#776)"></i><i style="left:788px;width:2.1px;background:linear-gradient(#000 34.3%,#332 34.3%,#332,#332,#332,#332,#332,#332,#332,#332,#332,#332,#332,#332,#332,#332,#332,#332,#332,#332,#332,#332,#332,#332,#332,#333,#333,#333,#333,#333,#333,#333,#333,#333,#333,#333,#333,#333,#333,#333,#333,#433,#433,#433,#443,#443,#544,#555,#555,#655,#655,#655,#655,#655,#655,#655,#655,#665,#766,#776,#777)"></i><i style="left:790px;width:2.1px;background:linear-gradient(#000 34.3%,#332 34.3%,#332,#332,#332,#332,#332,#332,#332,#332,#332,#332,#332,#332,#332,#332,#332,#332,#332,#332,#332,#332,#332,#332,#332,#333,#333,#333,#333,#333,#333,#333,#333,#333,#333,#333,#333,#333,#333,#333,#333,#433,#433,#433,#443,#443,#544,#555,#555,#655,#655,#655,#655,#655,#655,#655,#655,#665,#766,#776,#777)"></i><i style="left:792px;width:3px;background:linear-gradient(#000 34.3%,#332 34.3%,#332,#332,#332,#332,#332,#332,#332,#332,#332,#332,#332,#332,#332,#332,#332,#332,#332,#332,#332,#332,#332,#332,#332,#332,#332,#332,#332,#332,#332,#332,#333,#333,#333,#333,#333,#333,#333,#333,#333,#333,#433,#433,#433,#443,#443,#443,#443,#443,#444,#444,#444,#444,#444,#444,#544,#555,#665,#766,#776)"></i><i style="left:794.9px;width:3px;background:linear-gradient(#000 34.3%,#332 34.3%,#332,#332,#332,#332,#332,#332,#332,#332,#332,#332,#332,#332,#332,#332,#332,#332,#332,#332,#332,#332,#332,#332,#332,#332,#332,#332,#332,#332,#332,#332,#333,#333,#333,#333,#333,#333,#333,#333,#333,#333,#433,#433,#433,#443,#443,#443,#443,#443,#444,#444,#444,#444,#444,#444,#544,#555,#665,#766,#776)"></i><i style="left:797.8px;width:3px;background:linear-gradient(#000 34.3%,#332 34.3%,#332,#332,#332,#332,#332,#332,#332,#332,#332,#332,#332,#332,#332,#332,#332,#332,#332,#332,#332,#332,#332,#332,#332,#332,#332,#332,#332,#332,#332,#332,#333,#333,#333,#333,#333,#333,#333,#333,#333,#333,#433,#433,#433,#443,#443,#443,#443,#443,#444,#444,#444,#444,#444,#444,#544,#555,#665,#766,#776)"></i><i style="left:800.7px;width:3px;background:linear-gradient(#000 34.3%,#332 34.3%,#332,#332,#332,#332,#332,#332,#332,#332,#332,#332,#332,#332,#332,#332,#332,#332,#332,#332,#332,#332,#332,#332,#332,#332,#332,#332,#332,#332,#332,#332,#333,#333,#333,#333,#333,#333,#333,#333,#333,#333,#433,#433,#433,#443,#443,#443,#443,#443,#444,#444,#444,#444,#444,#444,#544,#555,#665,#766,#776)"></i><i style="left:803.6px;width:3px;background:linear-gradient(#000 34.3%,#332 34.3%,#332,#332,#332,#332,#332,#332,#332,#332,#332,#332,#332,#332,#332,#332,#332,#332,#332,#332,#332,#332,#332,#332,#332,#332,#332,#332,#332,#332,#332,#332,#333,#333,#333,#333,#333,#333,#333,#333,#333,#333,#433,#433,#433,#443,#443,#443,#443,#443,#444,#444,#444,#444,#444,#444,#544,#555,#665,#766,#776)"></i><i style="left:806.5px;width:3px;background:linear-gradient(#000 34.3%,#332 34.3%,#332,#332,#332,#332,#332,#332,#332,#332,#332,#332,#332,#332,#332,#332,#332,#332,#332,#332,#332,#332,#332,#332,#332,#332,#332,#332,#332,#332,#332,#332,#333,#333,#333,#333,#333,#333,#333,#333,#333,#333,#433,#433,#433,#443,#443,#443,#443,#443,#444,#444,#444,#444,#444,#444,#544,#555,#665,#766,#776)"></i><i style="left:809.4px;width:3px;background:linear-gradient(#000 34.3%,#332 34.3%,#332,#332,#332,#332,#332,#332,#332,#332,#332,#332,#332,#332,#332,#332,#332,#332,#332,#332,#332,#332,#332,#332,#332,#332,#332,#332,#332,#332,#332,#332,#333,#333,#333,#333,#333,#333,#333,#333,#333,#333,#433,#433,#433,#443,#443,#443,#443,#443,#444,#444,#444,#444,#444,#444,#544,#555,#665,#766,#776)"></i><i style="left:812.3px;width:3px;background:linear-gradient(#000 34.3%,#332 34.3%,#332,#332,#332,#332,#332,#332,#332,#332,#332,#332,#332,#332,#332,#332,#332,#332,#332,#332,#332,#332,#332,#332,#332,#332,#332,#332,#332,#332,#332,#332,#333,#333,#333,#333,#333,#333,#333,#333,#333,#333,#433,#433,#433,#443,#443,#443,#443,#443,#444,#444,#444,#444,#444,#444,#544,#555,#665,#766,#776)"></i><i style="left:815.2px;width:3px;background:linear-gradient(#000 34.3%,#332 34.3%,#332,#332,#332,#332,#332,#332,#332,#332,#332,#332,#332,#332,#332,#332,#332,#332,#332,#332,#332,#332,#332,#332,#332,#332,#332,#332,#332,#332,#332,#332,#333,#333,#333,#333,#333,#333,#333,#333,#333,#333,#433,#433,#433,#443,#443,#443,#443,#443,#444,#444,#444,#444,#444,#444,#544,#555,#665,#766,#776)"></i><i style="left:818.1px;width:3px;background:linear-gradient(#000 34.3%,#332 34.3%,#332,#332,#332,#332,#332,#332,#332,#332,#332,#332,#332,#332,#332,#332,#332,#332,#332,#332,#332,#332,#332,#332,#332,#332,#332,#332,#332,#332,#332,#332,#333,#333,#333,#333,#333,#333,#333,#333,#333,#333,#433,#433,#433,#443,#443,#443,#443,#443,#444,#444,#444,#444,#444,#444,#544,#555,#665,#766,#776)"></i><i style="left:820.9px;width:3px;background:linear-gradient(#000 34.3%,#332 34.3%,#332,#332,#332,#332,#332,#332,#332,#332,#332,#332,#332,#332,#332,#332,#332,#332,#332,#332,#332,#332,#332,#332,#332,#332,#332,#332,#332,#332,#332,#332,#333,#333,#333,#333,#333,#333,#333,#333,#333,#333,#433,#433,#433,#443,#443,#443,#443,#443,#444,#444,#444,#444,#444,#444,#544,#555,#665,#766,#776)"></i><i style="left:823.8px;width:3px;background:linear-gradient(#000 34.3%,#332 34.3%,#332,#332,#332,#332,#332,#332,#332,#332,#332,#332,#332,#332,#332,#332,#332,#332,#332,#332,#332,#332,#332,#332,#332,#332,#332,#332,#332,#332,#332,#332,#333,#333,#333,#333,#333,#333,#333,#333,#333,#333,#433,#433,#433,#443,#443,#443,#443,#443,#444,#444,#444,#444,#444,#444,#544,#555,#665,#766,#776)"></i><i style="left:826.7px;width:3px;background:linear-gradient(#000 34.3%,#332 34.3%,#332,#332,#332,#332,#332,#332,#332,#332,#332,#332,#332,#332,#332,#332,#332,#332,#332,#332,#332,#332,#332,#332,#332,#332,#332,#332,#332,#332,#332,#332,#333,#333,#333,#333,#333,#333,#333,#333,#333,#333,#433,#433,#433,#443,#443,#443,#443,#443,#444,#444,#444,#444,#444,#444,#544,#555,#665,#766,#776)"></i><i style="left:829.6px;width:3px;background:linear-gradient(#000 34.3%,#332 34.3%,#332,#332,#332,#332,#332,#332,#332,#332,#332,#332,#332,#332,#332,#332,#332,#332,#332,#332,#332,#332,#332,#332,#332,#332,#332,#332,#332,#332,#332,#332,#333,#333,#333,#333,#333,#333,#333,#333,#333,#333,#433,#433,#433,#443,#443,#443,#443,#443,#444,#444,#444,#444,#444,#444,#544,#555,#665,#766,#776)"></i><i style="left:832.5px;width:3px;background:linear-gradient(#000 34.3%,#332 34.3%,#332,#332,#332,#332,#332,#332,#332,#332,#332,#332,#332,#332,#332,#332,#332,#332,#332,#332,#332,#332,#332,#332,#332,#332,#332,#332,#332,#332,#332,#332,#333,#333,#333,#333,#333,#333,#333,#333,#333,#333,#433,#433,#433,#443,#443,#443,#443,#443,#444,#444,#444,#444,#444,#444,#544,#555,#665,#766,#776)"></i><i style="left:835.4px;width:3px;background:linear-gradient(#000 34.3%,#332 34.3%,#332,#332,#332,#332,#332,#332,#332,#332,#332,#332,#332,#332,#332,#332,#332,#332,#332,#332,#332,#332,#332,#332,#332,#332,#332,#332,#332,#332,#332,#332,#333,#333,#333,#333,#333,#333,#333,#333,#333,#333,#433,#433,#433,#443,#443,#443,#443,#443,#444,#444,#444,#444,#444,#444,#544,#555,#665,#766,#776)"></i><i style="left:838.3px;width:3px;background:linear-gradient(#000 34.3%,#332 34.3%,#332,#332,#332,#332,#332,#332,#332,#332,#332,#332,#332,#332,#332,#332,#332,#332,#332,#332,#332,#332,#332,#332,#332,#332,#332,#332,#332,#332,#332,#332,#333,#333,#333,#333,#333,#333,#333,#333,#333,#333,#433,#433,#433,#443,#443,#443,#443,#443,#444,#444,#444,#444,#444,#444,#544,#555,#665,#766,#776)"></i><i style="left:841.2px;width:3px;background:linear-gradient(#000 34.3%,#332 34.3%,#332,#332,#332,#332,#332,#332,#332,#332,#332,#332,#332,#332,#332,#332,#332,#332,#332,#332,#332,#332,#332,#332,#332,#332,#332,#332,#332,#332,#332,#332,#333,#333,#333,#333,#333,#333,#333,#333,#333,#333,#433,#433,#433,#443,#443,#443,#443,#443,#444,#444,#444,#444,#444,#444,#544,#555,#665,#766,#776)"></i><i style="left:844.1px;width:3px;background:linear-gradient(#000 34.3%,#332 34.3%,#332,#332,#332,#332,#332,#332,#332,#332,#332,#332,#332,#332,#332,#332,#332,#332,#332,#332,#332,#332,#332,#332,#332,#332,#332,#332,#332,#332,#332,#332,#333,#333,#333,#333,#333,#333,#333,#333,#333,#333,#433,#433,#433,#443,#443,#443,#443,#443,#444,#444,#444,#444,#444,#444,#544,#555,#665,#766,#776)"></i><i style="left:216px;width:9px;top:205px;height:7px;background:#000;opacity:.35;border-radius:2px"></i><i style="left:317px;width:9px;top:262px;height:7px;background:#000;opacity:.65;border-radius:2px"></i><i style="left:315px;width:12px;top:177px;height:6px;background:#000;opacity:.35;border-radius:2px"></i><i style="left:357px;width:9px;top:261px;height:7px;background:#000;opacity:.45;border-radius:2px"></i><i style="left:361px;width:9px;top:275px;height:6px;background:#000;opacity:.65;border-radius:2px"></i><i style="left:407px;width:10px;top:328px;height:5px;background:#000;opacity:.35;border-radius:2px"></i><i style="left:397px;width:10px;top:202px;height:5px;background:#000;opacity:.35;border-radius:2px"></i><i style="left:393px;width:9px;top:203px;height:4px;background:#000;opacity:.35;border-radius:2px"></i><i style="left:390px;width:12px;top:187px;height:7px;background:#000;opacity:.35;border-radius:2px"></i><i style="left:403px;width:8px;top:160px;height:7px;background:#000;opacity:.45;border-radius:2px"></i><i style="left:393px;width:10px;top:211px;height:5px;background:#000;opacity:.65;border-radius:2px"></i><i style="left:398px;width:10px;top:166px;height:4px;background:#000;opacity:.35;border-radius:2px"></i><i style="left:486px;width:8px;top:183px;height:5px;background:#000;opacity:.45;border-radius:2px"></i><i style="left:480px;width:12px;top:221px;height:7px;background:#000;opacity:.65;border-radius:2px"></i><i style="left:478px;width:8px;top:335px;height:4px;background:#000;opacity:.55;border-radius:2px"></i><i style="left:476px;width:12px;top:340px;height:4px;background:#000;opacity:.35;border-radius:2px"></i><i style="left:483px;width:5px;top:148px;height:4px;background:#000;opacity:.55;border-radius:2px"></i><i style="left:533px;width:11px;top:187px;height:5px;background:#000;opacity:.45;border-radius:2px"></i><i style="left:562px;width:5px;top:171px;height:5px;background:#000;opacity:.65;border-radius:2px"></i><i style="left:547px;width:11px;top:268px;height:4px;background:#000;opacity:.55;border-radius:2px"></i><i style="left:541px;width:11px;top:183px;height:7px;background:#000;opacity:.45;border-radius:2px"></i><i style="left:552px;width:10px;top:161px;height:5px;background:#000;opacity:.35;border-radius:2px"></i><i style="left:578px;width:6px;top:192px;height:4px;background:#000;opacity:.65;border-radius:2px"></i><i style="left:204.0px;width:3.0px;top:128.0px;height:14.0px;background:linear-gradient(#000,#554)"></i><i style="left:386.0px;width:3.0px;top:133.0px;height:9.0px;background:linear-gradient(#000,#554)"></i><i style="left:480.0px;width:3.0px;top:123.0px;height:19.0px;background:linear-gradient(#000,#554)"></i><i style="left:455.0px;width:3.0px;top:134.0px;height:8.0px;background:linear-gradient(#000,#554)"></i></div><div class="frame"></div><div class="yl" style="top:536.2px">0 kHz</div><div class="yt" style="top:537.5px"></div><div class="yl" style="top:498.8px">2 kHz</div><div class="yt" style="top:500.1px"></div><div class="yl" style="top:461.4px">4 kHz</div><div class="yt" style="top:462.7px"></div><div class="yl" style="top:423.9px">6 kHz</div><div class="yt" style="top:425.2px"></div><div class="yl" style="top:386.5px">8 kHz</div><div class="yt" style="top:387.8px"></div><div class="yl" style="top:349.1px">10 kHz</div><div class="yt" style="top:350.4px"></div><div class="yl" style="top:311.7px">12 kHz</div><div class="yt" style="top:313.0px"></div><div class="yl" style="top:274.3px">14 kHz</div><div class="yt" style="top:275.6px"></div><div class="yl" style="top:236.9px">16 kHz</div><div class="yt" style="top:238.2px"></div><div class="yl" style="top:199.4px">18 kHz</div><div class="yt" style="top:200.8px"></div><div class="yl" style="top:162.0px">20 kHz</div><div class="yt" style="top:163.3px"></div><div class="yl" style="top:124.6px">22 kHz</div><div class="yt" style="top:125.9px"></div><div class="yl" style="top:87.2px">24 kHz</div><div class="yt" style="top:88.5px"></div><div class="xl" style="left:39.0px">0:00</div><div class="xt" style="left:38.5px"></div><div class="xl" style="left:268.5px">0:01</div><div class="xt" style="left:268.0px"></div><div class="xl" style="left:498.0px">0:02</div><div class="xt" style="left:497.5px"></div><div class="xl" style="left:727.5px">0:03</div><div class="xt" style="left:727.0px"></div><div class="cbar" style="background:linear-gradient(#ff0000 0%,#ff1500 2%,#ff2a00 4%,#ff3e00 6%,#ff5300 8%,#ff6800 10%,#ff7d00 12%,#ff9200 14%,#ffa600 16%,#ffbb00 18%,#ffd000 20%,#ffe500 22%,#fffa00 24%,#f1ff00 26%,#ddff00 28%,#caff00 30%,#b7ff00 32%,#a4ff00 34%,#90ff00 36%,#7dff00 38%,#6aff00 40%,#56ff00 42%,#43ff00 44%,#30ff00 46%,#1cff00 48%,#09ff00 50%,#00ff24 52%,#00ff67 54%,#00ffab 56%,#00ffee 58%,#00ebff 60%,#00d0ff 62%,#00b5ff 64%,#009aff 66%,#007eff 68%,#0063ff 70%,#0048ff 72%,#002dff 74%,#0012ff 76%,#0500ff 78%,#1400ff 80%,#2300ff 82%,#3200ff 84%,#3c00ed 86%,#4000cb 88%,#3f00a9 90%,#3a0087 92%,#320065 94%,#250044 96%,#150022 98%,#000000 100%)"></div><div class="dl" style="top:86.4px">-20 dB</div><div class="dt" style="top:88.5px"></div><div class="dl" style="top:108.9px">-25 dB</div><div class="dt" style="top:111.0px"></div><div class="dl" style="top:131.3px">-30 dB</div><div class="dt" style="top:133.4px"></div><div class="dl" style="top:153.8px">-35 dB</div><div class="dt" style="top:155.8px"></div><div class="dl" style="top:176.2px">-40 dB</div><div class="dt" style="top:178.3px"></div><div class="dl" style="top:198.7px">-45 dB</div><div class="dt" style="top:200.8px"></div><div class="dl" style="top:221.1px">-50 dB</div><div class="dt" style="top:223.2px"></div><div class="dl" style="top:243.6px">-55 dB</div><div class="dt" style="top:245.7px"></div><div class="dl" style="top:266.0px">-60 dB</div><div class="dt" style="top:268.1px"></div><div class="dl" style="top:288.4px">-65 dB</div><div class="dt" style="top:290.6px"></div><div class="dl" style="top:310.9px">-70 dB</div><div class="dt" style="top:313.0px"></div><div class="dl" style="top:333.3px">-75 dB</div><div class="dt" style="top:335.4px"></div><div class="dl" style="top:355.8px">-80 dB</div><div class="dt" style="top:357.9px"></div><div class="dl" style="top:378.2px">-85 dB</div><div class="dt" style="top:380.4px"></div><div class="dl" style="top:400.7px">-90 dB</div><div class="dt" style="top:402.8px"></div><div class="dl" style="top:423.1px">-95 dB</div><div class="dt" style="top:425.2px"></div><div class="dl" style="top:445.6px">-100 dB</div><div class="dt" style="top:447.7px"></div><div class="dl" style="top:468.0px">-105 dB</div><div class="dt" style="top:470.1px"></div><div class="dl" style="top:490.5px">-110 dB</div><div class="dt" style="top:492.6px"></div><div class="dl" style="top:512.9px">-115 dB</div><div class="dt" style="top:515.0px"></div><div class="dl" style="top:535.4px">-120 dB</div><div class="dt" style="top:537.5px"></div><div class="task"><svg class="tico" style="left:4px;top:0" width="28" height="26" viewBox="0 0 28 26"><defs><radialGradient id="og" cx="50%" cy="30%" r="70%"><stop offset="0" stop-color="#e6f4fd"/><stop offset=".45" stop-color="#5aa0d8"/><stop offset=".8" stop-color="#1c62b4"/><stop offset="1" stop-color="#2aa3e0"/></radialGradient></defs><circle cx="14" cy="13" r="11.300" fill="url(#og)" stroke="#7fb2d8" stroke-width=".8"/><path d="M7 8.500q3.300-2 6.200-.7l-1 4.600q-2.900-1.200-6.200.6z" fill="#f0641e"/><path d="M14.200 8.100q3 1.100 6.300-.7l-1.100 4.600q-3.100 1.700-6.200.6z" fill="#7cc43c"/><path d="M5.800 14q3.100-1.800 6.100-.6l-1 4.500q-2.900-1.200-6.100.7z" fill="#2f9bea"/><path d="M12.900 13.800q3.100 1.100 6.200-.7l-1 4.500q-3.100 1.700-6.200.7z" fill="#fbb91e"/></svg><svg class="tico" style="left:47.5px;top:3px" width="19" height="19" viewBox="0 0 19 19"><defs><linearGradient id="eg" x1="0" y1="0" x2="0" y2="1"><stop offset="0" stop-color="#a6e05a"/><stop offset=".6" stop-color="#6cc62c"/><stop offset="1" stop-color="#3f9d12"/></linearGradient></defs><circle cx="9.500" cy="9.500" r="8.600" fill="url(#eg)" stroke="#d6f5b4" stroke-width="1.200"/><path d="M5.200 9.400h9q0-4.300-4.600-4.300t-4.500 4.400q0 4.200 4.600 4.200 2.900 0 4.100-1.900" fill="none" stroke="#fff" stroke-width="1.500"/></svg><div class="tbtn" style="left:77px;width:75px"><svg class="tico" style="left:3px;top:0px" width="23" height="23" viewBox="0 0 20 20"><path d="M10 10L10 1A9 9 0 0 1 17.800 5.500z" fill="#b14fe0"/><path d="M10 10L17.800 5.500A9 9 0 0 1 17.800 14.500z" fill="#ef3b2f"/><path d="M10 10L17.800 14.500A9 9 0 0 1 10 19z" fill="#f8d61c"/><path d="M10 10L10 19A9 9 0 0 1 2.200 14.500z" fill="#57c83c"/><path d="M10 10L2.200 14.500A9 9 0 0 1 2.200 5.500z" fill="#25b7a6"/><path d="M10 10L2.200 5.500A9 9 0 0 1 10 1z" fill="#3c78e6"/><circle cx="10" cy="10" r="2" fill="#fff"/></svg><b>【评测骁...</b></div><div style="position:absolute;left:158px;top:0;width:31px;height:25px;background:linear-gradient(rgba(40,130,235,.4),rgba(30,110,220,.28))"></div><svg class="tico" style="left:161.5px;top:3px" width="20" height="20" viewBox="0 0 20 20"><circle cx="10" cy="10" r="9.500" fill="#1f7bee"/><circle cx="10" cy="10" r="7.200" fill="none" stroke="#fff" stroke-width="1.400"/><path d="M7.800 6v8M12.400 6L8.200 10.200L12.700 14" fill="none" stroke="#fff" stroke-width="1.900"/></svg><div class="tbtn" style="left:191px;width:75px"><svg class="tico" style="left:4px;top:2px" width="21" height="20" viewBox="0 0 21 20"><rect x="1" y="1" width="15" height="16" rx="1" fill="#eef7e6" stroke="#8fb77c" stroke-width=".8"/><rect x="11" y="10" width="9" height="8" fill="#f6fbf0" stroke="#7fae6a" stroke-width=".7"/><path d="M12.500 12.500h6M12.500 15h6" stroke="#8fc27a" stroke-width=".8"/><text x="8.300" y="14.600" text-anchor="middle" font-family="Liberation Sans,sans-serif" font-weight="bold" font-size="15" fill="#2f8a2a">X</text></svg><b>Microsof...</b></div><div class="tbtn" style="left:268px;width:75px"><svg class="tico" style="left:4px;top:2px" width="21" height="20" viewBox="0 0 21 20"><rect x="1" y="1" width="16" height="16" rx="1" fill="#fdeee4" stroke="#e7a57e" stroke-width=".8"/><circle cx="15.500" cy="13.500" r="4" fill="#f7c3a0" stroke="#ee8a55" stroke-width=".7"/><path d="M15.500 13.500v-4a4 4 0 0 1 4 4z" fill="#ee7d44"/><text x="8" y="14.600" text-anchor="middle" font-family="Liberation Sans,sans-serif" font-weight="bold" font-size="15" fill="#e2571c">P</text></svg><b>Microso...</b></div><div class="tbtn" style="left:345px;width:72px"><svg class="tico" style="left:4px;top:2px" width="22" height="21" viewBox="0 0 22 21"><path d="M2 3h6l1.500 2h10.500v13h-18z" fill="#f2d978" stroke="#c9aa4a" stroke-width=".7"/><rect x="4" y="5.500" width="14" height="6" fill="#fdfdf6" stroke="#d9cf9a" stroke-width=".5"/><rect x="3" y="9" width="16" height="4" fill="#bfe3f2"/><path d="M2 11.500h18v7.500h-18z" fill="#f7e58f" stroke="#c9aa4a" stroke-width=".7"/><rect x="5" y="13.500" width="12" height="3.500" fill="#8ccbe8"/></svg><b>Windo...</b></div><div class="tbtn" style="left:421px;width:72px"><svg class="tico" style="left:3px;top:1px" width="22" height="20" viewBox="0 0 22 20"><circle cx="11" cy="10" r="9" fill="#f3c845" stroke="#f9e39a" stroke-width="1.200"/><path d="M11 16l-5-5a3 3 0 0 1 5-3.500a3 3 0 0 1 5 3.500z" fill="#e9523a"/><path d="M11 16l-5-5q2.500 1 5 0z" fill="#3f9d52"/><path d="M11 16l5-5q-2.500 1-5 0z" fill="#3a7fd0"/></svg><b>腾讯QQ</b></div><div class="tbtn" style="left:497px;width:74px"><svg class="tico" style="left:3px;top:1px" width="22" height="20" viewBox="0 0 22 20"><circle cx="11" cy="10" r="9" fill="#d3202e" stroke="#f1a0a5" stroke-width="1"/><text x="11" y="14" text-anchor="middle" font-family="Noto Sans CJK SC,sans-serif" font-size="10" font-weight="bold" fill="#fff">秀</text></svg><b>美图秀秀</b></div></div></div><div class="win" style="left:560px;top:538.6px"><div class="tb"><svg class="tico" style="left:0;top:1.500px" width="13" height="11" viewBox="0 0 24 20"><path d="M3 11a9 9 0 0 1 18 0" fill="none" stroke="#111" stroke-width="2.500"/><ellipse cx="12" cy="12" rx="8.500" ry="7" fill="#fdeeee" stroke="#d79a95" stroke-width=".6"/><rect x="0" y="8" width="5" height="8" rx="2" fill="#111"/><rect x="19" y="8" width="5" height="8" rx="2" fill="#111"/><ellipse cx="12" cy="14" rx="4" ry="3" fill="#e8473e"/></svg><div class="ttl">Spek - 新录音-乐视手机+麦克风录制.m4a</div><div class="ctl min"><i></i></div><div class="ctl max"><i></i></div><div class="ctl cls"><span>x</span></div></div><div style="position:absolute;left:396px;top:1px;font-size:8.6px;line-height:12px;color:#15202e;opacity:.68;filter:blur(.9px);white-space:nowrap">演示文稿1.pptx &nbsp;- &nbsp;Microsoft PowerPoint</div><div style="position:absolute;left:336px;top:0;width:42px;height:13px;background:linear-gradient(rgba(150,70,150,.45),rgba(160,120,190,.25));filter:blur(1.5px)"></div><div class="mb"><span style="left:5px">文件</span><span style="left:30px">编辑</span><span style="left:55px">帮助</span></div><div class="tool"><svg class="tico" style="left:1px;top:3px" width="18" height="16" viewBox="0 0 18 16"><path d="M1.500 5l9-3.200l6 1.700v8l-6.500 3l-8.500-2.500z" fill="#f39a2e" stroke="#a9631a" stroke-width=".8"/><path d="M1.500 5l8.500 2.300l6.500-3.800M10 7.300v7" fill="none" stroke="#c9741d" stroke-width=".8"/><path d="M2.500 6l7 2v5l-7-2z" fill="#f7b558"/></svg><svg class="tico" style="left:22px;top:3px" width="17" height="16" viewBox="0 0 17 16"><rect x="12.500" y="2.500" width="2" height="12" fill="#555"/><path d="M2 2h5.500v4.500h3v8h-5.500v-4.500h-3z" fill="#6cc04a" stroke="#2f7d23" stroke-width=".7"/><path d="M3 3h3.500v3h-3.500z" fill="#c5ecb4"/></svg><svg class="tico" style="left:921px;top:3px" width="16" height="16" viewBox="0 0 16 16"><circle cx="8" cy="8" r="6.800" fill="#dbeafb" stroke="#2765c4" stroke-width="1.800"/><circle cx="8" cy="8" r="4.600" fill="#4b93e6"/><path d="M8.800 4.500l-1.600 3.500M6.800 10.500l.2.600" stroke="#fff" stroke-width="1.500" stroke-linecap="round"/></svg></div><div class="cv"></div><div class="path">G:\我的论坛之路\其它论坛\当贝\黑炮麦克风\素材\音频\新录音-乐视手机+麦克风录制.m4a</div><div class="info">AAC (Advanced Audio Coding), 96 kbps, 48000 Hz, 2 声道</div><div class="spk">spek</div><div class="ver">0.8.2</div><div class="plot"><i style="left:119.5px;width:2.5px;background:linear-gradient(#000 30.3%,#433 30.3%,#554,#555,#555,#655,#655,#655,#655,#655,#655,#655,#655,#655,#655,#655,#655,#655,#655,#665,#665,#665,#665,#665,#665,#665,#665,#665,#665,#665,#665,#665,#665,#665,#665,#665,#665,#665,#665,#665,#665,#665,#666,#666,#666,#666,#666,#666,#666,#666,#666,#666,#666,#666,#766,#766,#766,#766,#777,#877,#887,#888,#998,#999,#a99)"></i><i style="left:121.8px;width:2.5px;background:linear-gradient(#000 30.3%,#433 30.3%,#554,#555,#555,#655,#655,#655,#655,#655,#655,#655,#655,#655,#655,#655,#655,#655,#655,#665,#665,#665,#665,#665,#665,#665,#665,#665,#665,#665,#665,#665,#665,#665,#665,#665,#665,#665,#665,#665,#665,#665,#666,#666,#666,#666,#666,#666,#666,#666,#666,#666,#666,#666,#766,#766,#766,#766,#777,#877,#887,#888,#998,#999,#a99)"></i><i style="left:124.2px;width:2.5px;background:linear-gradient(#000 30.3%,#433 30.3%,#554,#555,#555,#655,#655,#655,#655,#655,#655,#655,#655,#655,#655,#655,#655,#655,#655,#665,#665,#665,#665,#665,#665,#665,#665,#665,#665,#665,#665,#665,#665,#665,#665,#665,#665,#665,#665,#665,#665,#665,#666,#666,#666,#666,#666,#666,#666,#666,#666,#666,#666,#666,#766,#766,#766,#766,#777,#877,#887,#888,#998,#999,#a99)"></i><i style="left:126.5px;width:2.6px;background:linear-gradient(#000 31.6%,#555 31.6%,#555,#555,#655,#655,#655,#665,#665,#665,#665,#665,#665,#665,#665,#665,#665,#665,#666,#666,#666,#666,#666,#666,#766,#776,#776,#776,#777,#777,#777,#777,#777,#777,#777,#877,#888,#888,#988,#988,#988,#988,#777,#777,#777,#877,#998,#998,#998,#998,#998,#999,#999,#999,#999,#999,#a99,#aa9,#aa9,#baa,#bba,#ccb,#ddc)"></i><i style="left:129px;width:2.6px;background:linear-gradient(#000 31.6%,#555 31.6%,#555,#555,#655,#655,#655,#665,#665,#665,#665,#665,#665,#665,#665,#665,#665,#665,#666,#666,#666,#666,#666,#666,#766,#776,#776,#776,#777,#777,#777,#777,#777,#777,#777,#877,#888,#888,#988,#988,#988,#988,#777,#777,#777,#877,#998,#998,#998,#998,#998,#999,#999,#999,#999,#999,#a99,#aa9,#aa9,#baa,#bba,#ccb,#ddc)"></i><i style="left:131.5px;width:2.6px;background:linear-gradient(#000 31.6%,#555 31.6%,#555,#555,#655,#655,#655,#665,#665,#665,#665,#665,#665,#665,#665,#665,#665,#665,#666,#666,#666,#666,#666,#666,#766,#776,#776,#776,#777,#777,#777,#777,#777,#777,#777,#877,#888,#888,#988,#988,#988,#988,#777,#777,#777,#877,#998,#998,#998,#998,#998,#999,#999,#999,#999,#999,#a99,#aa9,#aa9,#baa,#bba,#ccb,#ddc)"></i><i style="left:134px;width:2.6px;background:linear-gradient(#000 31.6%,#555 31.6%,#555,#555,#655,#655,#655,#665,#665,#665,#665,#665,#665,#665,#665,#665,#665,#665,#666,#666,#666,#666,#666,#666,#766,#776,#776,#776,#777,#777,#777,#777,#777,#777,#777,#877,#888,#888,#988,#988,#988,#988,#777,#777,#877,#887,#998,#998,#998,#998,#998,#999,#999,#999,#999,#999,#a99,#aa9,#aa9,#baa,#bba,#ccb,#ddc)"></i><i style="left:136.5px;width:3.1px;background:linear-gradient(#000 31.6%,#655 31.6%,#655,#665,#665,#665,#666,#666,#666,#666,#666,#666,#666,#766,#766,#766,#766,#766,#766,#766,#766,#766,#766,#776,#777,#877,#877,#877,#877,#877,#877,#877,#887,#887,#887,#887,#998,#998,#998,#998,#998,#998,#888,#988,#998,#998,#999,#999,#a99,#a99,#a99,#a99,#a99,#a99,#a99,#aa9,#aaa,#aaa,#baa,#bba,#bbb,#ccc,#edd)"></i><i style="left:139.5px;width:3.1px;background:linear-gradient(#000 31.6%,#655 31.6%,#655,#665,#665,#665,#666,#666,#666,#666,#666,#666,#666,#766,#766,#766,#766,#766,#766,#766,#766,#766,#766,#776,#777,#877,#877,#877,#877,#877,#877,#877,#887,#887,#887,#887,#998,#998,#998,#998,#998,#998,#998,#998,#998,#998,#999,#999,#a99,#a99,#a99,#a99,#a99,#a99,#a99,#aa9,#aaa,#aaa,#baa,#bba,#bbb,#ccc,#edd)"></i><i style="left:142.5px;width:3.1px;background:linear-gradient(#000 31.6%,#655 31.6%,#655,#665,#665,#665,#666,#666,#666,#666,#666,#666,#666,#766,#766,#766,#766,#766,#766,#665,#666,#766,#766,#776,#777,#877,#877,#877,#877,#887,#888,#888,#988,#988,#988,#998,#998,#998,#998,#998,#998,#998,#998,#998,#998,#998,#999,#999,#a99,#a99,#a99,#a99,#a99,#a99,#a99,#aa9,#aaa,#aaa,#baa,#bba,#bbb,#ccc,#edd)"></i><i style="left:145.5px;width:3.1px;background:linear-gradient(#000 31.6%,#655 31.6%,#655,#665,#665,#665,#666,#666,#666,#666,#666,#666,#666,#766,#766,#766,#766,#766,#766,#443,#655,#766,#766,#776,#777,#888,#988,#988,#988,#988,#988,#988,#988,#988,#988,#998,#998,#998,#998,#998,#998,#998,#998,#998,#998,#998,#999,#999,#a99,#a99,#a99,#a99,#a99,#a99,#a99,#aa9,#aaa,#aaa,#baa,#bba,#bbb,#ccc,#edd)"></i><i style="left:148.5px;width:3.1px;background:linear-gradient(#000 31.6%,#655 31.6%,#655,#665,#665,#665,#666,#666,#666,#666,#666,#666,#666,#766,#766,#766,#766,#766,#766,#443,#655,#766,#766,#776,#777,#988,#988,#988,#988,#988,#988,#988,#988,#988,#988,#998,#998,#998,#998,#998,#998,#998,#998,#998,#998,#998,#999,#999,#a99,#a99,#a99,#a99,#a99,#a99,#a99,#aa9,#aaa,#aaa,#baa,#bba,#bbb,#ccc,#edd)"></i><i style="left:151.5px;width:3.1px;background:linear-gradient(#000 31.6%,#655 31.6%,#655,#665,#665,#665,#666,#666,#666,#666,#666,#666,#666,#766,#766,#766,#766,#766,#766,#665,#666,#766,#766,#776,#777,#988,#988,#988,#988,#988,#988,#988,#988,#988,#988,#998,#998,#998,#998,#998,#998,#998,#998,#998,#998,#998,#999,#999,#a99,#a99,#a99,#a99,#a99,#a99,#a99,#aa9,#aaa,#aaa,#baa,#bba,#cbb,#ccc,#edd)"></i><i style="left:154.5px;width:3.1px;background:linear-gradient(#000 31.6%,#655 31.6%,#655,#665,#665,#665,#666,#666,#666,#666,#666,#666,#666,#766,#766,#766,#766,#766,#766,#766,#766,#766,#766,#776,#777,#988,#988,#988,#988,#988,#988,#988,#988,#988,#988,#998,#998,#998,#998,#998,#998,#998,#998,#998,#998,#998,#999,#999,#a99,#a99,#a99,#a99,#a99,#a99,#a99,#aa9,#aaa,#aaa,#baa,#bba,#cbb,#ccc,#edd)"></i><i style="left:157.5px;width:3.1px;background:linear-gradient(#000 31.6%,#655 31.6%,#655,#665,#665,#665,#666,#666,#666,#666,#666,#666,#666,#766,#766,#766,#766,#766,#766,#766,#766,#766,#766,#776,#777,#988,#988,#988,#988,#988,#988,#988,#988,#988,#988,#998,#998,#998,#998,#998,#998,#998,#998,#998,#998,#998,#999,#999,#a99,#a99,#a99,#a99,#a99,#a99,#a99,#aa9,#aaa,#aaa,#baa,#bba,#cbb,#ccc,#edd)"></i><i style="left:160.5px;width:3.1px;background:linear-gradient(#000 31.6%,#655 31.6%,#655,#665,#665,#665,#666,#666,#666,#666,#666,#666,#666,#766,#766,#766,#766,#766,#766,#766,#766,#766,#766,#776,#777,#877,#877,#887,#888,#888,#988,#988,#988,#988,#988,#998,#998,#998,#998,#998,#998,#998,#998,#998,#998,#998,#999,#999,#a99,#a99,#a99,#a99,#a99,#a99,#a99,#aa9,#aaa,#aaa,#bba,#bbb,#cbb,#ccc,#edd)"></i><i style="left:163.5px;width:3.1px;background:linear-gradient(#000 31.6%,#655 31.6%,#655,#665,#665,#665,#666,#666,#666,#666,#666,#666,#666,#766,#766,#766,#766,#766,#766,#766,#766,#766,#766,#776,#777,#877,#877,#877,#877,#877,#877,#877,#887,#887,#888,#988,#998,#998,#998,#998,#998,#998,#998,#998,#998,#998,#999,#999,#a99,#a99,#a99,#a99,#a99,#a99,#a99,#aa9,#aaa,#aaa,#bba,#cbb,#cbb,#ccc,#edd)"></i><i style="left:166.5px;width:3.1px;background:linear-gradient(#000 31.6%,#655 31.6%,#655,#665,#665,#665,#666,#666,#666,#666,#666,#666,#666,#766,#766,#766,#766,#766,#766,#766,#766,#766,#766,#776,#777,#877,#877,#877,#877,#877,#877,#877,#887,#887,#887,#887,#998,#998,#998,#998,#998,#998,#988,#998,#998,#998,#999,#999,#a99,#a99,#a99,#a99,#a99,#a99,#a99,#aa9,#aaa,#baa,#bbb,#cbb,#cbb,#ccc,#edd)"></i><i style="left:169.5px;width:3.1px;background:linear-gradient(#000 31.6%,#655 31.6%,#655,#665,#665,#665,#666,#666,#666,#666,#666,#666,#666,#766,#766,#766,#766,#766,#766,#766,#766,#766,#766,#776,#777,#877,#877,#877,#877,#877,#877,#877,#887,#887,#887,#887,#998,#998,#998,#998,#998,#998,#887,#877,#887,#888,#999,#999,#a99,#a99,#a99,#a99,#a99,#a99,#a99,#aa9,#aaa,#baa,#cbb,#ccb,#cbb,#dcc,#edd)"></i><i style="left:172.5px;width:3.1px;background:linear-gradient(#000 31.6%,#655 31.6%,#655,#665,#665,#665,#666,#666,#666,#666,#666,#666,#666,#766,#766,#766,#766,#766,#766,#766,#766,#766,#766,#776,#777,#877,#877,#877,#877,#877,#877,#877,#887,#887,#887,#887,#998,#998,#998,#998,#998,#998,#887,#877,#877,#888,#999,#999,#a99,#a99,#a99,#a99,#a99,#a99,#a99,#aa9,#aaa,#baa,#cbb,#ccc,#cbb,#dcc,#edd)"></i><i style="left:175.5px;width:3.1px;background:linear-gradient(#000 31.6%,#555 31.6%,#555,#655,#655,#655,#665,#665,#665,#665,#665,#665,#665,#665,#666,#666,#666,#666,#666,#666,#666,#666,#666,#766,#766,#776,#777,#777,#777,#777,#777,#777,#777,#877,#877,#877,#888,#988,#988,#988,#988,#988,#877,#777,#777,#887,#998,#998,#998,#999,#999,#999,#999,#999,#999,#a99,#a99,#aaa,#cbb,#ccc,#bbb,#ccb,#ddd)"></i><i style="left:178.5px;width:3.1px;background:linear-gradient(#000 31.6%,#555 31.6%,#555,#655,#655,#655,#665,#665,#665,#665,#665,#665,#665,#665,#666,#666,#666,#666,#666,#666,#666,#666,#666,#766,#766,#776,#777,#777,#777,#777,#777,#777,#777,#877,#877,#877,#888,#988,#988,#988,#988,#988,#877,#777,#777,#887,#998,#998,#998,#999,#999,#999,#999,#999,#999,#a99,#a99,#aaa,#cbb,#ccc,#bbb,#ccb,#ddd)"></i><i style="left:181.5px;width:3.1px;background:linear-gradient(#000 31.6%,#555 31.6%,#555,#655,#655,#655,#665,#665,#665,#665,#665,#665,#665,#665,#666,#666,#666,#666,#666,#666,#666,#666,#666,#766,#766,#776,#777,#777,#777,#777,#777,#777,#777,#877,#877,#877,#888,#988,#988,#988,#988,#988,#877,#777,#777,#887,#998,#998,#998,#999,#999,#999,#999,#999,#999,#a99,#a99,#aaa,#bbb,#ccb,#bbb,#ccb,#ddd)"></i><i style="left:184.5px;width:3.1px;background:linear-gradient(#000 31.6%,#555 31.6%,#555,#655,#655,#655,#665,#665,#665,#665,#665,#665,#665,#665,#666,#666,#666,#666,#666,#666,#666,#666,#666,#766,#766,#776,#777,#777,#777,#777,#777,#777,#777,#877,#877,#877,#888,#988,#988,#988,#988,#988,#877,#777,#777,#887,#998,#998,#998,#999,#999,#999,#999,#999,#999,#a99,#a99,#aaa,#bbb,#cbb,#bbb,#ccb,#ddd)"></i><i style="left:187.5px;width:3.1px;background:linear-gradient(#000 31.6%,#555 31.6%,#555,#655,#655,#655,#665,#665,#665,#665,#665,#665,#665,#665,#666,#666,#666,#666,#666,#666,#666,#666,#666,#766,#766,#776,#777,#777,#777,#777,#777,#777,#777,#877,#877,#877,#888,#988,#988,#988,#988,#988,#877,#777,#777,#887,#998,#998,#998,#999,#999,#999,#999,#999,#999,#a99,#a99,#aa9,#bba,#bbb,#bbb,#ccb,#ddd)"></i><i style="left:190.5px;width:2.5px;background:linear-gradient(#000 31.6%,#655 31.6%,#655,#655,#655,#655,#655,#655,#655,#655,#655,#655,#665,#665,#665,#665,#665,#665,#665,#665,#665,#665,#665,#665,#665,#666,#666,#666,#666,#666,#666,#766,#766,#766,#766,#766,#776,#776,#776,#777,#777,#777,#877,#877,#887,#887,#887,#888,#888,#888,#888,#988,#988,#988,#988,#998,#999,#aa9,#baa,#cbb,#cbb,#ccc,#ddc)"></i><i style="left:192.8px;width:2.5px;background:linear-gradient(#000 31.6%,#655 31.6%,#655,#655,#655,#655,#655,#655,#655,#655,#655,#655,#665,#665,#665,#665,#665,#665,#665,#665,#665,#665,#665,#665,#665,#666,#666,#666,#666,#666,#666,#766,#766,#766,#766,#766,#776,#776,#776,#777,#777,#777,#877,#877,#887,#887,#887,#888,#888,#888,#888,#988,#988,#988,#988,#998,#999,#aa9,#baa,#bbb,#cbb,#ccc,#ddc)"></i><i style="left:195.2px;width:2.5px;background:linear-gradient(#000 31.6%,#655 31.6%,#655,#655,#655,#655,#655,#655,#655,#655,#655,#655,#665,#665,#665,#665,#665,#665,#665,#665,#665,#665,#665,#665,#665,#666,#666,#666,#666,#666,#666,#766,#766,#766,#766,#766,#776,#776,#776,#777,#777,#777,#877,#877,#887,#887,#887,#888,#888,#888,#888,#988,#988,#988,#988,#998,#999,#aa9,#baa,#bbb,#cbb,#ccc,#ddc)"></i><i style="left:197.5px;width:3.1px;background:linear-gradient(#000 32.5%,#555 32.5%,#555,#555,#555,#555,#555,#555,#555,#555,#555,#555,#555,#555,#555,#555,#555,#555,#555,#555,#555,#655,#655,#655,#655,#655,#655,#655,#655,#655,#655,#655,#655,#655,#655,#655,#655,#655,#655,#655,#655,#655,#655,#655,#655,#655,#655,#665,#665,#665,#665,#665,#665,#665,#665,#665,#666,#666,#766,#776,#777,#877,#888)"></i><i style="left:200.5px;width:3.1px;background:linear-gradient(#000 32.5%,#555 32.5%,#555,#555,#555,#555,#555,#555,#555,#555,#555,#555,#555,#555,#555,#555,#555,#555,#555,#555,#555,#655,#655,#655,#655,#655,#655,#655,#655,#655,#655,#655,#655,#655,#655,#655,#655,#655,#655,#655,#655,#655,#655,#655,#655,#655,#655,#665,#665,#665,#665,#665,#665,#665,#665,#665,#666,#666,#766,#776,#777,#877,#888)"></i><i style="left:203.5px;width:3.1px;background:linear-gradient(#000 32.5%,#555 32.5%,#555,#555,#555,#555,#555,#555,#555,#555,#555,#555,#555,#555,#555,#555,#555,#555,#555,#555,#555,#655,#655,#655,#655,#655,#655,#655,#655,#655,#655,#655,#655,#655,#655,#655,#655,#655,#655,#655,#655,#655,#655,#655,#655,#655,#655,#665,#665,#665,#665,#665,#665,#665,#665,#665,#666,#666,#766,#776,#777,#877,#888)"></i><i style="left:206.5px;width:3.1px;background:linear-gradient(#000 34.7%,#433 34.7%,#443,#443,#443,#443,#443,#443,#443,#443,#443,#443,#443,#443,#443,#443,#443,#443,#443,#444,#444,#444,#444,#444,#444,#444,#444,#444,#444,#444,#544,#544,#544,#554,#554,#554,#554,#554,#554,#554,#554,#554,#555,#555,#555,#555,#555,#555,#555,#555,#555,#555,#555,#555,#555,#555,#655,#655,#665,#665,#666)"></i><i style="left:209.4px;width:3.1px;background:linear-gradient(#000 34.7%,#433 34.7%,#443,#443,#443,#443,#443,#443,#443,#443,#443,#443,#443,#443,#443,#443,#443,#443,#443,#444,#444,#444,#444,#444,#444,#444,#444,#444,#444,#444,#544,#544,#544,#554,#554,#554,#554,#554,#554,#554,#554,#554,#555,#555,#555,#555,#555,#555,#555,#555,#555,#555,#555,#555,#555,#555,#655,#655,#665,#665,#666)"></i><i style="left:212.4px;width:3.1px;background:linear-gradient(#000 34.7%,#433 34.7%,#443,#443,#443,#443,#443,#443,#443,#443,#443,#443,#443,#443,#443,#443,#443,#443,#443,#444,#444,#444,#444,#444,#444,#444,#444,#444,#444,#444,#544,#544,#544,#554,#554,#554,#554,#554,#554,#554,#554,#554,#555,#555,#555,#555,#555,#555,#555,#555,#555,#555,#555,#555,#555,#555,#655,#655,#665,#665,#666)"></i><i style="left:215.3px;width:3.1px;background:linear-gradient(#000 34.7%,#433 34.7%,#443,#443,#443,#443,#443,#443,#443,#443,#443,#443,#443,#443,#443,#443,#443,#443,#443,#444,#444,#444,#444,#444,#444,#444,#444,#444,#444,#444,#544,#544,#544,#554,#554,#554,#554,#554,#554,#554,#554,#554,#555,#555,#555,#555,#555,#555,#555,#555,#555,#555,#555,#555,#555,#555,#655,#655,#665,#665,#666)"></i><i style="left:218.2px;width:3.1px;background:linear-gradient(#000 34.7%,#433 34.7%,#443,#443,#443,#443,#443,#443,#443,#443,#443,#443,#443,#443,#443,#443,#443,#443,#443,#444,#444,#444,#444,#444,#444,#444,#444,#444,#444,#444,#544,#544,#544,#554,#554,#554,#554,#554,#554,#554,#554,#554,#555,#555,#555,#555,#555,#555,#555,#555,#555,#555,#555,#555,#555,#555,#655,#655,#665,#665,#666)"></i><i style="left:221.1px;width:3.1px;background:linear-gradient(#000 34.7%,#433 34.7%,#443,#443,#443,#443,#443,#443,#443,#443,#443,#443,#443,#443,#443,#443,#443,#443,#443,#444,#444,#444,#444,#444,#444,#444,#444,#444,#444,#444,#544,#544,#544,#554,#554,#554,#554,#554,#554,#554,#554,#554,#555,#555,#555,#555,#555,#555,#555,#555,#555,#555,#555,#555,#555,#555,#655,#655,#665,#665,#666)"></i><i style="left:224.1px;width:3.1px;background:linear-gradient(#000 34.7%,#433 34.7%,#443,#443,#443,#443,#443,#443,#443,#443,#443,#443,#443,#443,#443,#443,#443,#443,#443,#444,#444,#444,#444,#444,#444,#444,#444,#444,#444,#444,#544,#544,#544,#554,#554,#554,#554,#554,#554,#554,#554,#554,#555,#555,#555,#555,#555,#555,#555,#555,#555,#555,#555,#555,#555,#555,#655,#655,#665,#665,#666)"></i><i style="left:227px;width:3.1px;background:linear-gradient(#000 34.7%,#433 34.7%,#443,#443,#443,#443,#443,#443,#443,#443,#443,#443,#443,#443,#443,#443,#443,#443,#443,#444,#444,#444,#444,#444,#444,#444,#444,#444,#444,#444,#544,#544,#544,#554,#554,#554,#554,#554,#554,#554,#554,#554,#555,#555,#555,#555,#555,#555,#555,#555,#555,#555,#555,#555,#555,#555,#655,#655,#665,#665,#666)"></i><i style="left:229.9px;width:3.1px;background:linear-gradient(#000 34.7%,#433 34.7%,#443,#443,#443,#443,#443,#443,#443,#443,#443,#443,#443,#443,#443,#443,#443,#443,#443,#444,#444,#444,#444,#444,#444,#444,#444,#444,#444,#444,#544,#544,#544,#554,#554,#554,#554,#554,#554,#554,#554,#554,#555,#555,#555,#555,#555,#555,#555,#555,#555,#555,#555,#555,#555,#555,#655,#655,#665,#665,#666)"></i><i style="left:232.9px;width:3.1px;background:linear-gradient(#000 34.7%,#433 34.7%,#443,#443,#443,#443,#443,#443,#443,#443,#443,#443,#443,#443,#443,#443,#443,#443,#443,#444,#444,#444,#444,#444,#444,#444,#444,#444,#444,#444,#544,#544,#544,#554,#554,#554,#554,#554,#554,#554,#554,#554,#555,#555,#555,#555,#555,#555,#555,#555,#555,#555,#555,#555,#555,#555,#655,#655,#665,#665,#666)"></i><i style="left:235.8px;width:3.1px;background:linear-gradient(#000 34.7%,#433 34.7%,#443,#443,#443,#443,#443,#443,#443,#443,#443,#443,#443,#443,#443,#443,#443,#443,#443,#444,#444,#444,#444,#444,#444,#444,#444,#444,#444,#444,#544,#544,#544,#554,#554,#554,#554,#554,#554,#554,#554,#554,#555,#555,#555,#555,#555,#555,#555,#555,#555,#555,#555,#555,#555,#555,#655,#655,#665,#665,#666)"></i><i style="left:238.7px;width:3.1px;background:linear-gradient(#000 34.7%,#433 34.7%,#443,#443,#443,#443,#443,#443,#443,#443,#443,#443,#443,#443,#443,#443,#443,#443,#443,#444,#444,#444,#444,#444,#444,#444,#444,#444,#444,#444,#544,#544,#544,#554,#554,#554,#554,#554,#554,#554,#554,#554,#555,#555,#555,#555,#555,#555,#555,#555,#555,#555,#555,#555,#555,#555,#655,#655,#665,#665,#666)"></i><i style="left:241.6px;width:3.1px;background:linear-gradient(#000 34.7%,#433 34.7%,#443,#443,#443,#443,#443,#443,#443,#443,#443,#443,#443,#443,#443,#443,#443,#443,#443,#444,#444,#444,#444,#444,#444,#444,#444,#444,#444,#444,#544,#544,#544,#554,#554,#554,#554,#554,#554,#554,#554,#554,#555,#555,#555,#555,#555,#555,#555,#555,#555,#555,#555,#555,#555,#555,#655,#655,#665,#665,#666)"></i><i style="left:244.6px;width:3.1px;background:linear-gradient(#000 34.7%,#433 34.7%,#443,#443,#443,#443,#443,#443,#443,#443,#443,#443,#443,#443,#443,#443,#443,#443,#443,#444,#444,#444,#444,#444,#444,#444,#444,#444,#444,#444,#544,#544,#544,#554,#554,#554,#554,#554,#554,#554,#554,#554,#555,#555,#555,#555,#555,#555,#555,#555,#555,#555,#555,#555,#555,#555,#655,#655,#665,#665,#666)"></i><i style="left:247.5px;width:2.9px;background:linear-gradient(#000 47.2%,#333 47.2%,#333,#333,#333,#433,#433,#433,#433,#433,#433,#433,#433,#443,#443,#443,#443,#443,#443,#443,#443,#443,#444,#444,#444,#544,#544,#554,#554,#554,#554,#554,#554,#554,#554,#554,#554,#554,#554,#554,#554,#555,#555,#555,#555,#655,#655,#665,#666)"></i><i style="left:250.2px;width:2.9px;background:linear-gradient(#000 47.2%,#333 47.2%,#333,#333,#333,#433,#433,#433,#433,#433,#433,#433,#433,#443,#443,#443,#443,#443,#443,#443,#443,#443,#444,#444,#444,#544,#544,#554,#554,#554,#554,#554,#554,#554,#554,#554,#554,#554,#554,#554,#554,#555,#555,#555,#555,#655,#655,#665,#666)"></i><i style="left:253px;width:2.9px;background:linear-gradient(#000 47.2%,#333 47.2%,#333,#333,#333,#433,#433,#433,#433,#433,#433,#433,#433,#443,#443,#443,#443,#443,#443,#443,#443,#443,#444,#444,#444,#544,#544,#554,#554,#554,#554,#554,#554,#554,#554,#554,#554,#554,#554,#554,#554,#555,#555,#555,#555,#655,#655,#665,#666)"></i><i style="left:255.8px;width:2.9px;background:linear-gradient(#000 47.2%,#333 47.2%,#333,#333,#333,#433,#433,#433,#433,#433,#433,#433,#433,#443,#443,#443,#443,#443,#443,#443,#443,#443,#444,#444,#444,#544,#544,#554,#554,#554,#554,#554,#554,#554,#554,#554,#554,#554,#554,#554,#554,#555,#555,#555,#555,#655,#655,#665,#666)"></i><i style="left:258.5px;width:2.9px;background:linear-gradient(#000 47.2%,#333 47.2%,#333,#333,#333,#433,#433,#433,#433,#433,#433,#433,#433,#443,#443,#443,#443,#443,#443,#443,#443,#443,#444,#444,#444,#544,#544,#554,#554,#554,#554,#554,#554,#554,#554,#554,#554,#554,#554,#554,#554,#555,#555,#555,#555,#655,#655,#665,#666)"></i><i style="left:261.2px;width:2.9px;background:linear-gradient(#000 47.2%,#333 47.2%,#333,#333,#333,#433,#433,#433,#433,#433,#433,#433,#433,#443,#443,#443,#443,#443,#443,#443,#443,#443,#444,#444,#444,#544,#544,#554,#554,#554,#554,#554,#554,#554,#554,#554,#554,#554,#554,#554,#554,#555,#555,#555,#555,#655,#655,#665,#666)"></i><i style="left:264px;width:2.9px;background:linear-gradient(#000 47.2%,#333 47.2%,#333,#333,#333,#433,#433,#433,#433,#433,#433,#433,#433,#443,#443,#443,#443,#443,#443,#443,#443,#443,#444,#444,#444,#544,#544,#554,#554,#554,#554,#554,#554,#554,#554,#554,#554,#554,#554,#554,#554,#555,#555,#555,#555,#655,#655,#665,#666)"></i><i style="left:266.8px;width:2.9px;background:linear-gradient(#000 47.2%,#333 47.2%,#333,#333,#333,#433,#433,#433,#433,#433,#433,#433,#433,#443,#443,#443,#443,#443,#443,#443,#443,#443,#444,#444,#444,#544,#544,#554,#554,#554,#554,#554,#554,#554,#554,#554,#554,#554,#554,#554,#554,#555,#555,#555,#555,#655,#655,#665,#666)"></i><i style="left:269.5px;width:2.1px;background:linear-gradient(#000 31.6%,#655 31.6%,#655,#655,#655,#655,#655,#655,#655,#655,#655,#655,#655,#655,#655,#655,#655,#655,#655,#655,#655,#655,#655,#655,#655,#655,#655,#655,#655,#655,#655,#655,#665,#665,#665,#665,#665,#665,#665,#665,#665,#665,#665,#665,#665,#665,#665,#665,#665,#665,#666,#666,#666,#766,#766,#766,#766,#776,#777,#877,#888,#888,#998)"></i><i style="left:271.5px;width:2.1px;background:linear-gradient(#000 31.6%,#655 31.6%,#655,#655,#655,#655,#655,#655,#655,#655,#655,#655,#655,#655,#655,#655,#655,#655,#655,#655,#655,#655,#655,#655,#655,#655,#655,#655,#655,#655,#655,#655,#665,#665,#665,#665,#665,#665,#665,#665,#665,#665,#665,#665,#665,#665,#665,#665,#665,#665,#666,#666,#666,#766,#766,#766,#766,#776,#777,#877,#888,#988,#998)"></i><i style="left:273.5px;width:3.1px;background:linear-gradient(#000 31.6%,#665 31.6%,#665,#665,#666,#666,#666,#666,#666,#666,#766,#766,#766,#766,#766,#766,#766,#766,#766,#766,#766,#766,#766,#766,#766,#766,#777,#887,#887,#887,#888,#888,#888,#888,#888,#888,#888,#888,#888,#888,#887,#887,#887,#887,#887,#888,#888,#888,#888,#888,#888,#888,#888,#888,#988,#a99,#aa9,#aaa,#aaa,#bba,#ccc,#ddc,#edd)"></i><i style="left:276.4px;width:3.1px;background:linear-gradient(#000 31.6%,#665 31.6%,#665,#665,#666,#666,#666,#666,#666,#666,#766,#766,#766,#766,#766,#766,#766,#766,#766,#766,#766,#766,#766,#766,#766,#766,#777,#887,#887,#887,#888,#888,#888,#888,#888,#888,#888,#888,#888,#888,#887,#887,#887,#887,#887,#888,#888,#888,#888,#888,#888,#888,#888,#888,#988,#a99,#aa9,#aaa,#aaa,#bba,#ccc,#ddc,#edd)"></i><i style="left:279.3px;width:3.1px;background:linear-gradient(#000 31.6%,#665 31.6%,#665,#665,#666,#666,#666,#666,#666,#666,#766,#766,#766,#766,#766,#766,#766,#766,#766,#766,#766,#766,#766,#766,#766,#766,#777,#887,#887,#887,#888,#888,#888,#888,#888,#888,#888,#888,#888,#888,#887,#887,#887,#887,#887,#888,#888,#888,#888,#888,#888,#888,#888,#888,#988,#a99,#aa9,#aaa,#aaa,#bba,#ccc,#ddc,#edd)"></i><i style="left:282.2px;width:3.1px;background:linear-gradient(#000 31.6%,#665 31.6%,#665,#665,#666,#666,#666,#666,#666,#666,#766,#766,#766,#766,#766,#766,#766,#766,#766,#766,#766,#766,#766,#766,#766,#766,#777,#887,#887,#887,#888,#888,#888,#888,#888,#888,#888,#888,#888,#888,#887,#887,#887,#887,#887,#888,#888,#888,#888,#888,#888,#888,#888,#888,#988,#a99,#aa9,#aaa,#aaa,#bba,#dcc,#ddc,#edd)"></i><i style="left:285.1px;width:3.1px;background:linear-gradient(#000 31.6%,#665 31.6%,#665,#665,#666,#666,#666,#666,#666,#666,#766,#766,#766,#766,#766,#766,#766,#766,#766,#766,#766,#766,#766,#766,#766,#766,#777,#887,#887,#887,#888,#888,#888,#888,#888,#888,#888,#888,#888,#888,#887,#887,#887,#887,#887,#888,#888,#888,#888,#888,#888,#888,#888,#888,#988,#a99,#aa9,#aaa,#aaa,#bba,#dcc,#ddc,#edd)"></i><i style="left:288px;width:3.1px;background:linear-gradient(#000 31.6%,#665 31.6%,#665,#665,#666,#666,#666,#666,#666,#666,#766,#766,#766,#766,#766,#766,#766,#766,#766,#766,#766,#766,#766,#766,#766,#766,#777,#887,#887,#887,#888,#888,#888,#888,#888,#888,#888,#888,#888,#888,#887,#887,#887,#887,#887,#888,#888,#888,#888,#888,#888,#888,#888,#888,#988,#a99,#aa9,#aaa,#aaa,#bba,#dcc,#ddc,#edd)"></i><i style="left:291px;width:3.1px;background:linear-gradient(#000 31.6%,#665 31.6%,#665,#665,#666,#666,#666,#666,#666,#666,#766,#766,#766,#766,#766,#766,#766,#766,#766,#766,#766,#766,#766,#766,#766,#766,#777,#887,#887,#887,#888,#888,#888,#888,#888,#888,#888,#888,#888,#888,#887,#887,#887,#887,#887,#888,#888,#888,#888,#888,#888,#888,#888,#888,#988,#a99,#aa9,#aaa,#aaa,#bba,#dcc,#ddc,#edd)"></i><i style="left:293.9px;width:3.1px;background:linear-gradient(#000 31.6%,#665 31.6%,#665,#665,#666,#666,#666,#666,#666,#666,#766,#766,#766,#766,#766,#766,#766,#766,#766,#766,#766,#766,#766,#766,#766,#766,#777,#887,#887,#887,#888,#888,#888,#888,#888,#888,#888,#888,#888,#888,#887,#887,#887,#887,#887,#888,#888,#888,#888,#888,#988,#988,#988,#988,#988,#a99,#aa9,#aaa,#aaa,#bba,#ccc,#ddc,#edd)"></i><i style="left:296.8px;width:3.1px;background:linear-gradient(#000 31.6%,#665 31.6%,#665,#665,#666,#666,#666,#666,#666,#666,#766,#766,#766,#766,#766,#766,#766,#766,#766,#766,#766,#766,#766,#766,#766,#776,#777,#887,#887,#887,#888,#888,#888,#988,#988,#998,#998,#998,#998,#998,#999,#999,#999,#999,#999,#999,#999,#999,#999,#999,#999,#999,#999,#999,#999,#a99,#aa9,#aaa,#aaa,#bba,#ccc,#ddc,#edd)"></i><i style="left:299.7px;width:3.1px;background:linear-gradient(#000 31.6%,#665 31.6%,#665,#665,#666,#666,#666,#666,#666,#666,#766,#766,#766,#766,#766,#766,#766,#766,#766,#776,#776,#777,#877,#877,#887,#888,#888,#988,#988,#998,#999,#999,#999,#999,#999,#999,#999,#999,#999,#999,#999,#999,#999,#999,#999,#999,#999,#999,#999,#999,#999,#999,#999,#999,#999,#a99,#aa9,#aaa,#aaa,#bba,#ccc,#ddc,#edd)"></i><i style="left:302.6px;width:3.1px;background:linear-gradient(#000 31.6%,#665 31.6%,#665,#665,#666,#666,#666,#666,#666,#666,#766,#766,#766,#776,#776,#777,#877,#877,#887,#888,#888,#988,#988,#998,#999,#999,#999,#999,#999,#999,#999,#999,#999,#999,#999,#999,#999,#999,#999,#999,#999,#999,#999,#999,#999,#999,#999,#999,#999,#999,#999,#999,#999,#999,#999,#a99,#aa9,#aaa,#aaa,#bba,#ccb,#ddc,#edd)"></i><i style="left:305.5px;width:2.9px;background:linear-gradient(#000 31.6%,#666 31.6%,#666,#766,#766,#766,#766,#776,#776,#777,#877,#877,#887,#887,#888,#988,#988,#998,#998,#998,#998,#998,#998,#998,#999,#999,#999,#999,#999,#999,#999,#999,#999,#999,#999,#999,#999,#999,#999,#999,#999,#999,#999,#999,#999,#999,#999,#999,#999,#999,#999,#999,#999,#999,#999,#999,#aa9,#aa9,#aaa,#aaa,#baa,#bbb,#ccb)"></i><i style="left:308.2px;width:2.9px;background:linear-gradient(#000 31.6%,#666 31.6%,#666,#777,#777,#877,#887,#887,#888,#888,#988,#998,#998,#998,#998,#998,#998,#998,#998,#998,#998,#998,#998,#998,#999,#999,#999,#999,#999,#999,#999,#999,#999,#999,#999,#999,#999,#999,#999,#999,#999,#999,#999,#999,#999,#999,#999,#999,#999,#999,#999,#999,#999,#999,#999,#999,#aa9,#aa9,#aaa,#aaa,#baa,#bbb,#ccb)"></i><i style="left:311px;width:2.9px;background:linear-gradient(#000 31.6%,#666 31.6%,#776,#888,#988,#998,#998,#998,#998,#998,#998,#998,#998,#998,#998,#998,#998,#998,#998,#998,#998,#998,#998,#998,#999,#999,#999,#999,#999,#999,#999,#999,#999,#999,#999,#999,#999,#999,#999,#999,#999,#999,#999,#999,#999,#999,#999,#999,#999,#999,#999,#999,#999,#999,#999,#999,#aa9,#aa9,#aaa,#aaa,#baa,#bbb,#ccb)"></i><i style="left:313.8px;width:2.9px;background:linear-gradient(#000 31.6%,#666 31.6%,#777,#998,#998,#998,#998,#998,#998,#998,#998,#998,#998,#998,#998,#998,#998,#998,#998,#998,#998,#998,#998,#998,#999,#999,#999,#999,#999,#999,#999,#999,#999,#999,#999,#999,#999,#999,#999,#999,#999,#999,#999,#999,#999,#999,#999,#999,#999,#999,#999,#999,#999,#999,#999,#999,#aa9,#aa9,#aaa,#aaa,#baa,#bbb,#ccb)"></i><i style="left:316.5px;width:2.9px;background:linear-gradient(#000 31.6%,#666 31.6%,#777,#998,#998,#998,#998,#998,#998,#998,#998,#998,#998,#998,#998,#998,#998,#998,#998,#998,#998,#998,#998,#998,#999,#999,#999,#999,#999,#999,#999,#999,#999,#999,#999,#999,#999,#999,#999,#999,#999,#999,#999,#999,#999,#999,#999,#999,#999,#999,#999,#999,#999,#999,#999,#999,#aa9,#aa9,#aaa,#aaa,#baa,#bbb,#ccb)"></i><i style="left:319.2px;width:2.9px;background:linear-gradient(#000 31.6%,#666 31.6%,#776,#888,#988,#998,#998,#998,#998,#998,#998,#998,#998,#998,#998,#998,#998,#998,#998,#998,#998,#998,#998,#998,#999,#999,#999,#999,#999,#999,#999,#999,#999,#999,#999,#999,#999,#999,#999,#999,#999,#999,#999,#999,#999,#999,#999,#999,#999,#999,#999,#999,#999,#999,#999,#999,#aa9,#aa9,#aaa,#aaa,#baa,#bbb,#ccb)"></i><i style="left:322px;width:2.9px;background:linear-gradient(#000 31.6%,#666 31.6%,#666,#777,#777,#877,#887,#887,#888,#888,#988,#998,#998,#998,#998,#998,#998,#998,#998,#998,#998,#998,#998,#998,#999,#999,#999,#999,#999,#999,#999,#999,#999,#999,#999,#999,#999,#999,#999,#999,#999,#999,#999,#999,#999,#999,#999,#999,#999,#999,#999,#999,#999,#999,#999,#999,#aa9,#aa9,#aaa,#aaa,#baa,#bbb,#ccb)"></i><i style="left:324.8px;width:2.9px;background:linear-gradient(#000 31.6%,#666 31.6%,#666,#766,#766,#766,#766,#776,#776,#777,#877,#877,#887,#887,#888,#988,#988,#998,#998,#998,#998,#998,#998,#998,#999,#999,#999,#999,#999,#999,#999,#999,#999,#999,#999,#999,#999,#999,#999,#999,#999,#999,#999,#999,#999,#999,#999,#999,#999,#999,#999,#999,#999,#999,#999,#999,#aa9,#aa9,#aaa,#aaa,#baa,#bbb,#ccb)"></i><i style="left:327.5px;width:3.1px;background:linear-gradient(#000 31.6%,#555 31.6%,#555,#655,#655,#655,#655,#655,#665,#665,#666,#666,#766,#776,#776,#777,#877,#877,#887,#888,#888,#988,#988,#998,#999,#999,#999,#999,#999,#999,#999,#999,#999,#999,#999,#999,#999,#999,#999,#999,#999,#999,#999,#999,#999,#999,#999,#999,#999,#999,#999,#999,#999,#999,#999,#999,#aa9,#aa9,#aaa,#baa,#ccb,#ddc,#edd)"></i><i style="left:330.4px;width:3.1px;background:linear-gradient(#000 31.6%,#555 31.6%,#555,#655,#655,#655,#655,#655,#655,#655,#655,#655,#655,#655,#665,#665,#666,#666,#766,#776,#776,#777,#877,#877,#887,#888,#888,#988,#988,#998,#999,#999,#999,#999,#999,#999,#999,#999,#999,#999,#999,#999,#999,#999,#999,#999,#999,#999,#999,#999,#999,#999,#999,#999,#999,#999,#aa9,#aa9,#aaa,#baa,#ccb,#ddc,#edd)"></i><i style="left:333.3px;width:3.1px;background:linear-gradient(#000 31.6%,#555 31.6%,#555,#655,#655,#655,#655,#655,#655,#655,#655,#655,#655,#655,#655,#655,#655,#655,#655,#665,#766,#776,#776,#776,#777,#777,#777,#777,#877,#877,#887,#888,#888,#988,#988,#998,#998,#998,#998,#998,#998,#999,#999,#999,#999,#999,#999,#999,#999,#999,#999,#999,#999,#999,#999,#999,#aa9,#aa9,#aaa,#baa,#ccb,#ddc,#edd)"></i><i style="left:336.3px;width:3.1px;background:linear-gradient(#000 31.6%,#555 31.6%,#555,#655,#655,#655,#655,#655,#655,#655,#655,#655,#655,#655,#655,#655,#655,#655,#655,#665,#766,#776,#776,#776,#777,#777,#777,#777,#777,#777,#777,#777,#777,#877,#887,#888,#888,#888,#888,#888,#888,#888,#888,#888,#888,#888,#888,#888,#888,#888,#988,#988,#988,#988,#988,#999,#aa9,#aa9,#aaa,#baa,#ccb,#ddd,#edd)"></i><i style="left:339.2px;width:3.1px;background:linear-gradient(#000 31.6%,#555 31.6%,#555,#655,#655,#655,#655,#655,#655,#655,#655,#655,#655,#655,#655,#655,#655,#655,#655,#665,#766,#776,#776,#776,#777,#777,#777,#777,#777,#777,#777,#777,#777,#877,#887,#888,#888,#888,#888,#888,#888,#888,#888,#888,#888,#888,#888,#888,#888,#888,#888,#888,#888,#888,#988,#999,#aa9,#aa9,#aaa,#baa,#ccb,#ddd,#edd)"></i><i style="left:342.1px;width:3.1px;background:linear-gradient(#000 31.6%,#555 31.6%,#555,#655,#655,#655,#655,#655,#655,#655,#655,#655,#655,#655,#655,#655,#655,#655,#655,#665,#766,#776,#776,#776,#777,#777,#777,#777,#777,#777,#777,#777,#777,#877,#887,#888,#888,#888,#888,#888,#888,#888,#888,#888,#888,#888,#888,#888,#888,#888,#888,#888,#888,#888,#988,#999,#aa9,#aa9,#aaa,#baa,#ccb,#ddd,#edd)"></i><i style="left:345px;width:3.1px;background:linear-gradient(#000 31.6%,#555 31.6%,#555,#655,#655,#655,#655,#655,#655,#655,#655,#655,#655,#655,#655,#655,#655,#655,#655,#665,#766,#776,#776,#776,#777,#777,#777,#777,#777,#777,#777,#777,#777,#877,#887,#888,#888,#888,#888,#888,#888,#888,#888,#888,#888,#888,#888,#888,#888,#888,#888,#888,#888,#888,#988,#999,#aa9,#aa9,#aaa,#baa,#ccc,#edd,#edd)"></i><i style="left:348px;width:3.1px;background:linear-gradient(#000 31.6%,#555 31.6%,#555,#655,#655,#655,#655,#655,#655,#655,#655,#655,#655,#655,#655,#655,#655,#655,#655,#665,#766,#776,#776,#776,#777,#777,#777,#777,#777,#777,#777,#777,#777,#877,#887,#888,#888,#888,#888,#888,#888,#888,#888,#888,#888,#888,#888,#888,#888,#888,#888,#888,#888,#888,#988,#999,#aa9,#aa9,#aaa,#baa,#ccc,#edd,#edd)"></i><i style="left:350.9px;width:3.1px;background:linear-gradient(#000 31.6%,#555 31.6%,#555,#655,#655,#655,#655,#655,#655,#655,#655,#655,#655,#655,#655,#655,#655,#655,#655,#665,#766,#776,#776,#776,#777,#777,#777,#777,#777,#777,#777,#777,#777,#877,#887,#888,#888,#888,#888,#888,#888,#888,#888,#888,#888,#888,#888,#888,#888,#888,#888,#888,#888,#888,#988,#999,#aa9,#aa9,#aaa,#baa,#ccb,#ddd,#edd)"></i><i style="left:353.8px;width:3.1px;background:linear-gradient(#000 31.6%,#555 31.6%,#555,#655,#655,#655,#655,#655,#655,#655,#655,#655,#655,#655,#655,#655,#655,#655,#655,#665,#766,#776,#776,#776,#777,#777,#777,#777,#777,#777,#777,#777,#777,#877,#887,#888,#888,#888,#888,#888,#888,#888,#888,#888,#888,#888,#888,#888,#888,#888,#888,#888,#888,#888,#988,#999,#aa9,#aa9,#aaa,#baa,#ccb,#ddd,#edd)"></i><i style="left:356.7px;width:3.1px;background:linear-gradient(#000 31.6%,#555 31.6%,#555,#655,#655,#655,#655,#655,#655,#655,#655,#655,#655,#655,#655,#655,#655,#655,#655,#665,#766,#776,#776,#776,#777,#777,#777,#777,#777,#777,#777,#777,#777,#877,#887,#888,#888,#888,#888,#888,#888,#888,#888,#888,#888,#888,#888,#888,#888,#888,#888,#888,#888,#888,#988,#999,#aa9,#aa9,#aaa,#baa,#ccb,#ddd,#edd)"></i><i style="left:359.7px;width:3.1px;background:linear-gradient(#000 31.6%,#555 31.6%,#555,#655,#655,#655,#655,#655,#655,#655,#655,#655,#655,#655,#655,#655,#655,#655,#655,#665,#766,#776,#776,#776,#777,#777,#777,#777,#777,#777,#777,#777,#777,#877,#887,#888,#888,#888,#888,#888,#888,#888,#888,#888,#888,#888,#888,#888,#888,#888,#888,#888,#888,#888,#988,#999,#aa9,#aa9,#aaa,#baa,#ccb,#ddd,#edd)"></i><i style="left:362.6px;width:3.1px;background:linear-gradient(#000 31.6%,#555 31.6%,#555,#655,#655,#655,#655,#655,#655,#655,#655,#655,#655,#655,#655,#655,#655,#655,#655,#665,#766,#776,#776,#776,#777,#777,#777,#777,#777,#777,#777,#777,#777,#877,#887,#888,#888,#888,#888,#888,#888,#888,#888,#888,#888,#888,#888,#888,#888,#888,#888,#888,#888,#888,#988,#999,#aa9,#aa9,#aaa,#baa,#ccb,#ddc,#edd)"></i><i style="left:365.5px;width:2.8px;background:linear-gradient(#000 31.6%,#554 31.6%,#554,#554,#554,#554,#554,#554,#554,#554,#554,#554,#554,#554,#554,#554,#554,#554,#554,#554,#554,#554,#554,#554,#554,#554,#554,#554,#554,#554,#554,#554,#554,#554,#554,#554,#554,#554,#554,#554,#554,#554,#554,#554,#554,#554,#554,#554,#554,#554,#554,#554,#554,#554,#554,#554,#554,#555,#655,#666,#888,#a99,#baa)"></i><i style="left:368.2px;width:2.8px;background:linear-gradient(#000 31.6%,#554 31.6%,#554,#554,#554,#554,#554,#554,#554,#554,#554,#554,#554,#554,#554,#554,#554,#554,#554,#554,#554,#554,#554,#554,#554,#554,#554,#554,#554,#554,#554,#554,#554,#554,#554,#554,#554,#554,#554,#554,#554,#554,#554,#554,#554,#554,#554,#554,#554,#554,#554,#554,#554,#554,#554,#554,#554,#555,#655,#666,#888,#a99,#baa)"></i><i style="left:370.8px;width:2.8px;background:linear-gradient(#000 31.6%,#554 31.6%,#554,#554,#554,#554,#554,#554,#554,#554,#554,#554,#554,#554,#554,#554,#554,#554,#554,#554,#554,#554,#554,#554,#554,#554,#554,#554,#554,#554,#554,#554,#554,#554,#554,#554,#554,#554,#554,#554,#554,#554,#554,#554,#554,#554,#554,#554,#554,#554,#554,#554,#554,#554,#554,#554,#554,#555,#655,#666,#888,#999,#baa)"></i><i style="left:373.5px;width:2.8px;background:linear-gradient(#000 29.8%,#433 29.8%,#544,#877,#877,#877,#877,#877,#877,#877,#877,#877,#887,#887,#887,#887,#887,#887,#887,#887,#887,#887,#887,#887,#887,#887,#887,#887,#887,#887,#887,#887,#888,#888,#888,#888,#888,#888,#888,#888,#888,#888,#888,#888,#988,#988,#988,#988,#988,#988,#998,#998,#998,#999,#999,#999,#a99,#aa9,#aaa,#aaa,#baa,#bba,#cbb,#dcc,#edd)"></i><i style="left:376.2px;width:2.8px;background:linear-gradient(#000 29.8%,#433 29.8%,#544,#877,#877,#877,#877,#877,#877,#877,#877,#877,#887,#887,#887,#887,#887,#887,#887,#887,#887,#887,#887,#887,#887,#887,#887,#887,#887,#887,#887,#887,#888,#888,#888,#888,#888,#888,#888,#888,#888,#888,#888,#888,#988,#988,#988,#988,#988,#988,#998,#998,#998,#999,#999,#999,#a99,#aa9,#aaa,#aaa,#baa,#bba,#cbb,#dcc,#edd)"></i><i style="left:378.8px;width:2.8px;background:linear-gradient(#000 29.8%,#433 29.8%,#544,#877,#877,#877,#877,#877,#877,#877,#877,#877,#887,#887,#887,#887,#887,#887,#887,#887,#887,#887,#887,#887,#887,#887,#887,#887,#887,#887,#887,#887,#888,#888,#888,#888,#888,#888,#888,#888,#888,#888,#888,#888,#988,#988,#988,#988,#988,#988,#998,#998,#998,#999,#999,#999,#a99,#aa9,#aaa,#aaa,#baa,#bba,#cbb,#dcc,#edd)"></i><i style="left:381.5px;width:3.1px;background:linear-gradient(#000 31.6%,#555 31.6%,#555,#555,#555,#555,#555,#555,#555,#555,#555,#555,#555,#555,#555,#555,#555,#555,#555,#555,#555,#555,#766,#887,#887,#887,#887,#887,#766,#766,#766,#766,#766,#766,#766,#766,#766,#766,#766,#766,#766,#766,#777,#877,#877,#877,#988,#999,#999,#999,#999,#a99,#a99,#a99,#aa9,#aa9,#aaa,#aaa,#aaa,#bba,#cbb,#ddc,#edd)"></i><i style="left:384.5px;width:3.1px;background:linear-gradient(#000 31.6%,#555 31.6%,#555,#555,#555,#555,#555,#555,#555,#555,#555,#555,#555,#555,#555,#555,#555,#555,#555,#555,#555,#555,#766,#887,#887,#887,#887,#887,#766,#766,#766,#766,#766,#766,#766,#766,#766,#766,#766,#766,#766,#766,#777,#877,#877,#877,#988,#999,#999,#999,#999,#a99,#a99,#a99,#aa9,#aa9,#aaa,#aaa,#aaa,#bba,#cbb,#ddc,#edd)"></i><i style="left:387.5px;width:3.1px;background:linear-gradient(#000 31.6%,#555 31.6%,#555,#555,#555,#555,#555,#555,#555,#555,#555,#555,#555,#555,#555,#555,#555,#555,#555,#555,#555,#555,#766,#887,#887,#887,#887,#887,#766,#766,#766,#766,#766,#766,#766,#766,#766,#766,#766,#766,#766,#766,#777,#877,#877,#877,#988,#999,#999,#999,#999,#a99,#a99,#a99,#aa9,#aa9,#aaa,#aaa,#aaa,#bba,#cbb,#ddc,#edd)"></i><i style="left:390.5px;width:3.1px;background:linear-gradient(#000 31.6%,#555 31.6%,#555,#555,#555,#555,#555,#555,#555,#555,#555,#555,#555,#555,#555,#555,#555,#555,#555,#555,#555,#555,#766,#887,#887,#887,#887,#887,#766,#766,#766,#766,#766,#766,#766,#766,#766,#766,#766,#766,#766,#766,#777,#877,#877,#877,#988,#999,#999,#999,#999,#a99,#a99,#a99,#aa9,#aa9,#aaa,#aaa,#aaa,#bba,#cbb,#ddc,#edd)"></i><i style="left:393.5px;width:3.1px;background:linear-gradient(#000 31.6%,#555 31.6%,#555,#555,#555,#555,#555,#555,#555,#555,#555,#555,#555,#555,#555,#555,#555,#555,#555,#555,#555,#555,#766,#887,#887,#887,#887,#887,#766,#766,#766,#766,#766,#766,#766,#766,#766,#766,#766,#766,#766,#766,#777,#877,#877,#877,#988,#999,#999,#999,#999,#a99,#a99,#a99,#aa9,#aa9,#aaa,#aaa,#aaa,#bba,#cbb,#ddc,#edd)"></i><i style="left:396.5px;width:3.1px;background:linear-gradient(#000 31.6%,#555 31.6%,#555,#555,#555,#555,#555,#555,#555,#555,#555,#555,#555,#555,#555,#555,#555,#555,#555,#555,#555,#555,#766,#887,#887,#887,#887,#887,#766,#766,#766,#766,#766,#766,#766,#766,#766,#766,#766,#766,#766,#766,#777,#877,#877,#877,#988,#999,#999,#999,#999,#a99,#a99,#a99,#aa9,#aa9,#aaa,#aaa,#aaa,#bba,#cbb,#ddc,#edd)"></i><i style="left:399.5px;width:3.1px;background:linear-gradient(#000 31.6%,#555 31.6%,#555,#555,#555,#555,#555,#555,#555,#555,#555,#555,#555,#555,#555,#555,#555,#555,#555,#555,#555,#555,#766,#887,#887,#887,#887,#887,#766,#766,#766,#766,#766,#766,#766,#766,#766,#766,#766,#766,#766,#766,#777,#877,#877,#877,#988,#999,#999,#999,#999,#a99,#a99,#a99,#aa9,#aa9,#aaa,#aaa,#aaa,#bba,#cbb,#ddc,#edd)"></i><i style="left:402.5px;width:3.1px;background:linear-gradient(#000 31.6%,#555 31.6%,#555,#555,#555,#555,#555,#555,#555,#555,#555,#555,#555,#555,#555,#555,#555,#555,#555,#555,#555,#555,#666,#887,#887,#887,#887,#887,#766,#766,#666,#766,#766,#766,#766,#766,#766,#766,#766,#766,#766,#766,#777,#877,#877,#877,#988,#999,#999,#999,#999,#a99,#a99,#a99,#aa9,#aa9,#aaa,#aaa,#aaa,#bba,#cbb,#ddc,#edd)"></i><i style="left:405.5px;width:3.1px;background:linear-gradient(#000 31.6%,#555 31.6%,#555,#555,#555,#555,#555,#555,#555,#555,#555,#555,#555,#555,#555,#555,#555,#555,#555,#555,#554,#444,#655,#877,#887,#887,#887,#887,#766,#665,#555,#666,#766,#766,#766,#766,#766,#766,#766,#766,#766,#766,#777,#877,#877,#877,#988,#999,#999,#999,#999,#a99,#a99,#a99,#aa9,#aa9,#aaa,#aaa,#aaa,#bba,#cbb,#ddc,#edd)"></i><i style="left:408.5px;width:3.1px;background:linear-gradient(#000 31.6%,#555 31.6%,#555,#555,#555,#555,#555,#555,#555,#555,#555,#555,#555,#555,#555,#555,#555,#555,#555,#555,#544,#322,#544,#877,#887,#887,#887,#887,#666,#544,#433,#655,#766,#766,#766,#766,#766,#766,#766,#766,#766,#766,#777,#877,#877,#877,#988,#999,#999,#999,#999,#a99,#a99,#a99,#aa9,#aa9,#aaa,#aaa,#aaa,#bba,#cbb,#ddc,#edd)"></i><i style="left:411.5px;width:3.1px;background:linear-gradient(#000 31.6%,#555 31.6%,#555,#555,#555,#555,#555,#555,#555,#555,#555,#555,#555,#555,#555,#555,#555,#555,#555,#555,#554,#433,#555,#877,#887,#887,#887,#887,#666,#555,#544,#665,#766,#766,#766,#766,#766,#766,#766,#766,#766,#766,#777,#877,#877,#877,#988,#999,#999,#999,#999,#a99,#a99,#a99,#aa9,#aa9,#aaa,#aaa,#aaa,#bba,#cbb,#ddc,#edd)"></i><i style="left:414.5px;width:2.9px;background:linear-gradient(#000 31.6%,#555 31.6%,#555,#555,#555,#555,#555,#555,#555,#555,#555,#555,#555,#555,#555,#555,#555,#555,#555,#555,#555,#554,#665,#777,#777,#877,#877,#877,#666,#665,#665,#666,#666,#666,#666,#666,#666,#666,#666,#666,#666,#666,#665,#555,#555,#555,#555,#555,#555,#555,#555,#555,#555,#555,#555,#555,#555,#555,#655,#665,#666,#776,#877)"></i><i style="left:417.3px;width:2.9px;background:linear-gradient(#000 31.6%,#555 31.6%,#555,#555,#555,#555,#555,#555,#555,#555,#555,#555,#555,#555,#555,#555,#555,#555,#555,#555,#555,#555,#666,#777,#777,#877,#877,#877,#666,#666,#666,#666,#666,#666,#666,#666,#666,#666,#666,#666,#666,#666,#665,#555,#555,#555,#555,#555,#555,#555,#555,#555,#555,#555,#555,#555,#555,#555,#655,#665,#666,#776,#877)"></i><i style="left:420.1px;width:2.9px;background:linear-gradient(#000 31.6%,#555 31.6%,#555,#555,#555,#555,#555,#555,#555,#555,#555,#555,#555,#555,#555,#555,#555,#555,#555,#555,#555,#555,#666,#777,#777,#877,#877,#877,#666,#666,#666,#666,#666,#666,#666,#666,#666,#666,#666,#666,#666,#666,#665,#555,#555,#555,#555,#555,#555,#555,#555,#555,#555,#555,#555,#555,#555,#555,#655,#665,#666,#776,#877)"></i><i style="left:422.9px;width:2.9px;background:linear-gradient(#000 31.6%,#555 31.6%,#555,#555,#555,#555,#555,#555,#555,#555,#555,#555,#555,#555,#555,#555,#555,#555,#555,#555,#555,#555,#666,#777,#777,#877,#877,#877,#666,#666,#666,#666,#666,#666,#666,#666,#666,#666,#666,#666,#666,#666,#665,#555,#555,#555,#555,#555,#555,#555,#555,#555,#555,#555,#555,#555,#555,#555,#655,#665,#666,#776,#877)"></i><i style="left:425.7px;width:2.9px;background:linear-gradient(#000 31.6%,#555 31.6%,#555,#555,#555,#555,#555,#555,#555,#555,#555,#555,#555,#555,#555,#555,#555,#555,#555,#555,#555,#555,#666,#777,#777,#877,#877,#877,#666,#666,#666,#666,#666,#666,#666,#666,#666,#666,#666,#666,#666,#666,#665,#555,#555,#555,#555,#555,#555,#555,#555,#555,#555,#555,#555,#555,#555,#555,#655,#665,#666,#776,#877)"></i><i style="left:428.5px;width:3px;background:linear-gradient(#000 31.6%,#544 31.6%,#544,#544,#544,#544,#544,#544,#544,#544,#544,#544,#544,#544,#544,#544,#544,#544,#544,#544,#544,#544,#544,#544,#544,#544,#544,#544,#544,#544,#544,#544,#544,#544,#544,#544,#544,#544,#544,#544,#544,#544,#544,#544,#544,#544,#544,#544,#544,#544,#544,#554,#554,#554,#554,#554,#554,#555,#555,#655,#665,#666,#776)"></i><i style="left:431.4px;width:3px;background:linear-gradient(#000 31.6%,#544 31.6%,#544,#544,#544,#544,#544,#544,#544,#544,#544,#544,#544,#544,#544,#544,#544,#544,#544,#544,#544,#544,#544,#544,#544,#544,#544,#544,#544,#544,#544,#544,#544,#544,#544,#544,#544,#544,#544,#544,#544,#544,#544,#544,#544,#544,#544,#544,#544,#544,#544,#554,#554,#554,#554,#554,#554,#555,#555,#655,#665,#666,#776)"></i><i style="left:434.2px;width:3px;background:linear-gradient(#000 31.6%,#544 31.6%,#544,#544,#544,#544,#544,#544,#544,#544,#544,#544,#544,#544,#544,#544,#544,#544,#544,#544,#544,#544,#544,#544,#544,#544,#544,#544,#544,#544,#544,#544,#544,#544,#544,#544,#544,#544,#544,#544,#544,#544,#544,#544,#544,#544,#544,#544,#544,#544,#544,#554,#554,#554,#554,#554,#554,#555,#555,#655,#665,#666,#776)"></i><i style="left:437.1px;width:3px;background:linear-gradient(#000 31.6%,#544 31.6%,#544,#544,#544,#544,#544,#544,#544,#544,#544,#544,#544,#544,#544,#544,#544,#544,#544,#544,#544,#544,#544,#544,#544,#544,#544,#544,#544,#544,#544,#544,#544,#544,#544,#544,#544,#544,#544,#544,#544,#544,#544,#544,#544,#544,#544,#544,#544,#544,#544,#554,#554,#554,#554,#554,#554,#555,#555,#655,#665,#666,#776)"></i><i style="left:440px;width:3px;background:linear-gradient(#000 31.6%,#544 31.6%,#544,#544,#544,#544,#544,#544,#544,#544,#544,#544,#544,#544,#544,#544,#544,#544,#544,#544,#544,#544,#544,#544,#544,#544,#544,#544,#544,#544,#544,#544,#544,#544,#544,#544,#544,#544,#544,#544,#544,#544,#544,#544,#544,#544,#544,#544,#544,#544,#544,#554,#554,#554,#554,#554,#554,#555,#555,#655,#665,#666,#776)"></i><i style="left:442.9px;width:3px;background:linear-gradient(#000 31.6%,#544 31.6%,#544,#544,#544,#544,#544,#544,#544,#544,#544,#544,#544,#544,#544,#544,#544,#544,#544,#544,#544,#544,#544,#544,#544,#544,#544,#544,#544,#544,#544,#544,#544,#544,#544,#544,#544,#544,#544,#544,#544,#544,#544,#544,#544,#544,#544,#544,#544,#544,#544,#554,#554,#554,#554,#554,#554,#555,#555,#655,#665,#666,#776)"></i><i style="left:445.8px;width:3px;background:linear-gradient(#000 31.6%,#544 31.6%,#544,#544,#544,#544,#544,#544,#544,#544,#544,#544,#544,#544,#544,#544,#544,#544,#544,#544,#544,#544,#544,#544,#544,#544,#544,#544,#544,#544,#544,#544,#544,#544,#544,#544,#544,#544,#544,#544,#544,#544,#544,#544,#544,#544,#544,#544,#544,#544,#544,#554,#554,#554,#554,#554,#554,#555,#555,#655,#665,#666,#776)"></i><i style="left:448.6px;width:3px;background:linear-gradient(#000 31.6%,#544 31.6%,#544,#544,#544,#544,#544,#544,#544,#544,#544,#544,#544,#544,#544,#544,#544,#544,#544,#544,#544,#544,#544,#544,#544,#544,#544,#544,#544,#544,#544,#544,#544,#544,#544,#544,#544,#544,#544,#544,#544,#544,#544,#544,#544,#544,#544,#544,#544,#544,#544,#554,#554,#554,#554,#554,#554,#555,#555,#655,#665,#666,#776)"></i><i style="left:451.5px;width:3.1px;background:linear-gradient(#000 31.6%,#666 31.6%,#666,#766,#766,#766,#776,#776,#776,#776,#776,#776,#776,#776,#777,#777,#777,#777,#777,#777,#777,#777,#777,#877,#887,#888,#888,#888,#888,#888,#888,#888,#888,#888,#988,#988,#988,#988,#988,#988,#988,#988,#988,#988,#988,#998,#999,#999,#999,#999,#999,#a99,#a99,#a99,#aa9,#aa9,#aaa,#aaa,#baa,#bba,#bbb,#ccc,#edd)"></i><i style="left:454.5px;width:3.1px;background:linear-gradient(#000 31.6%,#666 31.6%,#666,#766,#766,#766,#776,#776,#776,#776,#776,#776,#776,#776,#777,#777,#777,#777,#777,#777,#777,#777,#777,#877,#887,#888,#888,#888,#888,#888,#888,#888,#888,#888,#988,#988,#988,#988,#988,#988,#988,#988,#988,#988,#988,#998,#999,#999,#999,#999,#999,#a99,#a99,#a99,#aa9,#aa9,#aaa,#aaa,#baa,#bba,#bbb,#ccc,#edd)"></i><i style="left:457.5px;width:3.1px;background:linear-gradient(#000 31.6%,#666 31.6%,#666,#766,#766,#766,#776,#776,#776,#776,#776,#776,#776,#776,#777,#777,#777,#777,#777,#777,#777,#777,#777,#877,#887,#888,#888,#888,#888,#888,#888,#888,#888,#888,#988,#988,#988,#988,#988,#988,#988,#988,#988,#988,#988,#998,#999,#999,#999,#999,#999,#a99,#a99,#a99,#aa9,#aa9,#aaa,#aaa,#baa,#bba,#cbb,#ccc,#edd)"></i><i style="left:460.5px;width:3.1px;background:linear-gradient(#000 31.6%,#666 31.6%,#666,#766,#766,#766,#776,#776,#776,#776,#776,#776,#776,#776,#777,#777,#777,#777,#777,#777,#777,#777,#777,#877,#887,#888,#888,#888,#888,#888,#888,#888,#888,#888,#988,#988,#988,#988,#988,#988,#988,#988,#988,#988,#988,#998,#999,#999,#999,#999,#999,#a99,#a99,#a99,#aa9,#aa9,#aaa,#aaa,#baa,#bba,#cbb,#dcc,#edd)"></i><i style="left:463.5px;width:3.1px;background:linear-gradient(#000 31.6%,#666 31.6%,#666,#766,#766,#766,#776,#776,#776,#776,#776,#776,#776,#776,#777,#777,#777,#777,#777,#777,#777,#777,#777,#877,#887,#888,#888,#888,#888,#888,#888,#888,#888,#888,#988,#988,#988,#988,#988,#988,#988,#988,#988,#988,#988,#998,#999,#999,#999,#999,#999,#a99,#a99,#a99,#aa9,#aa9,#aaa,#aaa,#baa,#bba,#cbb,#dcc,#edd)"></i><i style="left:466.5px;width:3.1px;background:linear-gradient(#000 31.6%,#666 31.6%,#666,#766,#766,#766,#776,#776,#776,#776,#776,#776,#776,#776,#777,#777,#777,#777,#777,#777,#777,#777,#777,#877,#887,#888,#888,#888,#888,#888,#888,#888,#888,#888,#988,#988,#988,#988,#988,#988,#988,#988,#988,#988,#988,#998,#999,#999,#999,#999,#999,#a99,#a99,#a99,#aa9,#aa9,#aaa,#aaa,#baa,#bba,#cbb,#dcc,#edd)"></i><i style="left:469.5px;width:3.1px;background:linear-gradient(#000 31.6%,#666 31.6%,#666,#766,#766,#766,#776,#776,#776,#776,#776,#776,#776,#776,#777,#777,#777,#777,#777,#777,#777,#777,#777,#877,#887,#888,#888,#888,#888,#888,#888,#888,#888,#888,#988,#988,#988,#988,#988,#988,#988,#988,#988,#988,#988,#998,#999,#999,#999,#999,#999,#a99,#a99,#a99,#aa9,#aa9,#aaa,#aaa,#baa,#bba,#cbb,#dcc,#edd)"></i><i style="left:472.5px;width:2.6px;background:linear-gradient(#000 31.6%,#777 31.6%,#777,#777,#777,#777,#777,#777,#777,#877,#877,#877,#877,#877,#877,#877,#877,#877,#877,#877,#877,#877,#877,#887,#888,#988,#988,#988,#988,#988,#988,#988,#998,#998,#998,#998,#998,#998,#998,#998,#998,#998,#998,#998,#998,#998,#998,#999,#999,#999,#999,#999,#a99,#a99,#aa9,#aa9,#aaa,#aaa,#baa,#bba,#cbb,#dcc,#edd)"></i><i style="left:475px;width:2.6px;background:linear-gradient(#000 31.6%,#777 31.6%,#777,#777,#777,#777,#777,#777,#777,#877,#877,#877,#877,#877,#877,#877,#877,#877,#877,#877,#877,#877,#877,#887,#888,#988,#988,#988,#988,#988,#988,#988,#998,#998,#998,#998,#998,#998,#998,#998,#998,#998,#998,#988,#998,#998,#998,#999,#999,#999,#999,#999,#a99,#a99,#aa9,#aa9,#aaa,#aaa,#baa,#bba,#cbb,#dcc,#edd)"></i><i style="left:477.5px;width:3.1px;background:linear-gradient(#000 31.6%,#555 31.6%,#555,#555,#555,#555,#555,#555,#555,#555,#555,#555,#655,#655,#655,#655,#655,#655,#655,#655,#666,#777,#777,#777,#777,#777,#777,#777,#777,#777,#877,#877,#877,#877,#877,#877,#877,#877,#877,#877,#877,#777,#666,#655,#666,#887,#998,#999,#999,#999,#999,#999,#a99,#a99,#aa9,#aa9,#aaa,#aaa,#baa,#bba,#cbb,#ddc,#edd)"></i><i style="left:480.5px;width:3.1px;background:linear-gradient(#000 31.6%,#555 31.6%,#555,#555,#555,#555,#555,#555,#555,#555,#555,#555,#655,#655,#655,#655,#655,#655,#655,#655,#666,#777,#777,#777,#777,#777,#777,#777,#777,#777,#877,#877,#877,#877,#877,#877,#877,#877,#877,#877,#877,#777,#665,#555,#666,#887,#998,#999,#999,#999,#999,#999,#a99,#a99,#aa9,#aa9,#aaa,#aaa,#baa,#bba,#ccb,#ddc,#edd)"></i><i style="left:483.5px;width:3.1px;background:linear-gradient(#000 31.6%,#555 31.6%,#555,#555,#555,#555,#555,#555,#555,#555,#555,#555,#655,#655,#655,#655,#655,#655,#655,#655,#666,#777,#777,#777,#777,#777,#777,#777,#777,#777,#877,#877,#877,#877,#877,#877,#877,#877,#877,#877,#877,#777,#666,#666,#666,#887,#998,#999,#999,#999,#999,#999,#a99,#a99,#aa9,#aa9,#aaa,#aaa,#baa,#bba,#ccb,#ddc,#edd)"></i><i style="left:486.5px;width:3.1px;background:linear-gradient(#000 31.6%,#555 31.6%,#555,#555,#555,#555,#555,#555,#555,#555,#555,#555,#655,#655,#655,#655,#655,#655,#655,#655,#666,#777,#777,#777,#777,#777,#777,#777,#777,#777,#877,#877,#877,#877,#877,#877,#877,#877,#877,#877,#877,#877,#877,#877,#877,#887,#998,#999,#999,#999,#999,#999,#a99,#a99,#aa9,#aa9,#aaa,#aaa,#baa,#bba,#ccb,#ddc,#edd)"></i><i style="left:489.5px;width:3.1px;background:linear-gradient(#000 31.6%,#555 31.6%,#555,#555,#555,#555,#555,#555,#555,#555,#555,#555,#655,#655,#655,#655,#655,#655,#655,#665,#666,#777,#777,#777,#777,#877,#877,#887,#888,#888,#888,#888,#888,#988,#988,#988,#988,#988,#988,#988,#988,#988,#998,#998,#998,#998,#998,#999,#999,#999,#999,#999,#a99,#a99,#aa9,#aa9,#aaa,#aaa,#baa,#bba,#cbb,#ddc,#edd)"></i><i style="left:492.5px;width:3.1px;background:linear-gradient(#000 31.6%,#555 31.6%,#555,#555,#555,#555,#555,#555,#555,#555,#555,#555,#655,#655,#665,#666,#666,#766,#776,#777,#877,#877,#887,#888,#988,#998,#998,#999,#a99,#a99,#a99,#a99,#a99,#a99,#a99,#a99,#a99,#a99,#a99,#a99,#a99,#a99,#a99,#a99,#a99,#a99,#a99,#a99,#a99,#a99,#a99,#a99,#a99,#a99,#aa9,#aa9,#aaa,#aaa,#baa,#bba,#cbb,#ddc,#edd)"></i><i style="left:495.5px;width:3.1px;background:linear-gradient(#000 31.6%,#555 31.6%,#555,#555,#555,#555,#555,#555,#655,#665,#665,#666,#766,#776,#777,#777,#877,#887,#888,#988,#988,#998,#999,#a99,#a99,#a99,#a99,#a99,#a99,#a99,#a99,#a99,#a99,#a99,#a99,#a99,#a99,#a99,#a99,#a99,#a99,#a99,#a99,#a99,#a99,#a99,#a99,#a99,#a99,#a99,#a99,#a99,#a99,#a99,#aa9,#aa9,#aaa,#aaa,#baa,#bba,#cbb,#dcc,#edd)"></i><i style="left:498.5px;width:3.1px;background:linear-gradient(#000 31.6%,#555 31.6%,#555,#655,#665,#665,#666,#766,#776,#777,#777,#877,#887,#888,#988,#988,#998,#999,#a99,#a99,#a99,#a99,#a99,#a99,#a99,#a99,#a99,#a99,#a99,#a99,#a99,#a99,#a99,#a99,#a99,#a99,#a99,#a99,#a99,#a99,#a99,#a99,#a99,#a99,#a99,#a99,#a99,#a99,#a99,#a99,#a99,#a99,#a99,#a99,#aa9,#aa9,#aaa,#aaa,#baa,#bba,#cbb,#dcc,#edd)"></i><i style="left:501.5px;width:3.1px;background:linear-gradient(#000 31.6%,#665 31.6%,#666,#776,#776,#777,#877,#887,#888,#988,#988,#998,#999,#999,#999,#999,#999,#a99,#a99,#a99,#a99,#a99,#a99,#a99,#a99,#a99,#a99,#a99,#a99,#a99,#a99,#a99,#a99,#a99,#a99,#a99,#a99,#a99,#a99,#a99,#a99,#a99,#a99,#a99,#a99,#a99,#a99,#a99,#a99,#a99,#a99,#a99,#a99,#a99,#a99,#aa9,#aa9,#aa9,#aaa,#aaa,#baa,#bbb,#ccb)"></i><i style="left:504.5px;width:3.1px;background:linear-gradient(#000 31.6%,#665 31.6%,#877,#888,#888,#988,#998,#999,#999,#999,#999,#999,#999,#999,#999,#999,#999,#a99,#a99,#a99,#a99,#a99,#a99,#a99,#a99,#a99,#a99,#a99,#a99,#a99,#a99,#a99,#a99,#a99,#a99,#a99,#a99,#a99,#a99,#a99,#a99,#a99,#a99,#a99,#a99,#a99,#a99,#a99,#a99,#a99,#a99,#a99,#a99,#a99,#a99,#aa9,#aa9,#aa9,#aaa,#aaa,#baa,#bbb,#ccb)"></i><i style="left:507.5px;width:3.1px;background:linear-gradient(#000 31.6%,#665 31.6%,#988,#998,#998,#998,#999,#999,#999,#999,#999,#999,#999,#999,#999,#999,#999,#a99,#a99,#a99,#a99,#a99,#a99,#a99,#a99,#a99,#a99,#a99,#a99,#a99,#a99,#a99,#a99,#a99,#a99,#a99,#a99,#a99,#a99,#a99,#a99,#a99,#a99,#a99,#a99,#a99,#a99,#a99,#a99,#a99,#a99,#a99,#a99,#a99,#a99,#aa9,#aa9,#aa9,#aaa,#aaa,#baa,#bbb,#ccb)"></i><i style="left:510.5px;width:3.1px;background:linear-gradient(#000 31.6%,#665 31.6%,#988,#998,#998,#998,#999,#999,#999,#999,#999,#999,#999,#999,#999,#999,#999,#a99,#a99,#a99,#a99,#a99,#a99,#a99,#a99,#a99,#a99,#a99,#a99,#a99,#a99,#a99,#a99,#a99,#a99,#a99,#a99,#a99,#a99,#a99,#a99,#a99,#a99,#a99,#a99,#a99,#a99,#a99,#a99,#a99,#a99,#a99,#a99,#a99,#a99,#aa9,#aa9,#aa9,#aaa,#aaa,#baa,#bbb,#ccb)"></i><i style="left:513.5px;width:3.1px;background:linear-gradient(#000 31.6%,#665 31.6%,#988,#998,#998,#998,#999,#999,#999,#999,#999,#999,#999,#999,#999,#999,#999,#a99,#a99,#a99,#a99,#a99,#a99,#a99,#a99,#a99,#a99,#a99,#a99,#a99,#a99,#a99,#a99,#a99,#a99,#a99,#a99,#a99,#a99,#a99,#a99,#a99,#a99,#a99,#a99,#a99,#a99,#a99,#a99,#a99,#a99,#a99,#a99,#a99,#a99,#aa9,#aa9,#aa9,#aaa,#aaa,#baa,#bbb,#ccb)"></i><i style="left:516.5px;width:3.1px;background:linear-gradient(#000 31.6%,#665 31.6%,#988,#998,#998,#998,#999,#999,#999,#999,#999,#999,#999,#999,#999,#999,#999,#a99,#a99,#a99,#a99,#a99,#a99,#a99,#a99,#a99,#a99,#a99,#a99,#a99,#a99,#a99,#a99,#a99,#a99,#a99,#a99,#a99,#a99,#a99,#a99,#a99,#a99,#a99,#a99,#a99,#a99,#a99,#a99,#a99,#a99,#a99,#a99,#a99,#a99,#aa9,#aa9,#aa9,#aaa,#aaa,#baa,#bbb,#ccb)"></i><i style="left:519.5px;width:3.1px;background:linear-gradient(#000 31.6%,#665 31.6%,#877,#888,#888,#988,#998,#999,#999,#999,#999,#999,#999,#999,#999,#999,#999,#a99,#a99,#a99,#a99,#a99,#a99,#a99,#a99,#a99,#a99,#a99,#a99,#a99,#a99,#a99,#a99,#a99,#a99,#a99,#a99,#a99,#a99,#a99,#a99,#a99,#a99,#a99,#a99,#a99,#a99,#a99,#a99,#a99,#a99,#a99,#a99,#a99,#a99,#aa9,#aa9,#aa9,#aaa,#aaa,#baa,#bbb,#ccb)"></i><i style="left:522.5px;width:3.1px;background:linear-gradient(#000 31.6%,#665 31.6%,#666,#776,#776,#777,#877,#887,#888,#988,#988,#998,#999,#999,#999,#999,#999,#a99,#a99,#a99,#a99,#a99,#a99,#a99,#a99,#a99,#a99,#a99,#a99,#a99,#a99,#a99,#a99,#a99,#a99,#a99,#a99,#a99,#a99,#a99,#a99,#a99,#a99,#a99,#a99,#a99,#a99,#a99,#a99,#a99,#a99,#a99,#a99,#a99,#a99,#aa9,#aa9,#aa9,#aaa,#aaa,#baa,#bbb,#ccb)"></i><i style="left:525.5px;width:3.1px;background:linear-gradient(#000 31.6%,#554 31.6%,#554,#655,#665,#665,#666,#766,#776,#777,#777,#877,#887,#888,#988,#988,#998,#999,#a99,#a99,#a99,#a99,#a99,#a99,#a99,#a99,#a99,#a99,#a99,#a99,#a99,#a99,#a99,#a99,#a99,#a99,#a99,#a99,#a99,#a99,#a99,#a99,#a99,#a99,#a99,#a99,#a99,#a99,#a99,#a99,#a99,#a99,#aa9,#aa9,#aa9,#aa9,#aa9,#aa9,#aaa,#bba,#ccb,#ddd,#edd)"></i><i style="left:528.4px;width:3.1px;background:linear-gradient(#000 31.6%,#554 31.6%,#554,#555,#555,#555,#555,#555,#655,#665,#666,#666,#766,#776,#777,#877,#877,#887,#888,#988,#998,#998,#999,#a99,#a99,#a99,#a99,#a99,#a99,#a99,#a99,#a99,#a99,#a99,#a99,#a99,#a99,#a99,#a99,#a99,#a99,#a99,#a99,#a99,#a99,#a99,#a99,#a99,#a99,#a99,#a99,#a99,#aa9,#aa9,#aa9,#aa9,#aa9,#aa9,#aaa,#bba,#ccb,#ddd,#edd)"></i><i style="left:531.3px;width:3.1px;background:linear-gradient(#000 31.6%,#554 31.6%,#554,#555,#555,#555,#555,#555,#555,#555,#555,#555,#555,#655,#665,#666,#766,#766,#776,#777,#877,#887,#887,#888,#988,#998,#999,#999,#a99,#a99,#a99,#a99,#a99,#a99,#a99,#a99,#a99,#a99,#a99,#a99,#a99,#a99,#a99,#a99,#a99,#a99,#a99,#a99,#a99,#a99,#a99,#aa9,#aa9,#aa9,#aa9,#aa9,#aa9,#aa9,#aaa,#bba,#ccb,#ddd,#edd)"></i><i style="left:534.2px;width:3.1px;background:linear-gradient(#000 31.6%,#554 31.6%,#554,#555,#555,#555,#555,#555,#555,#555,#555,#555,#555,#555,#555,#555,#555,#655,#655,#665,#666,#766,#776,#776,#777,#877,#887,#888,#888,#888,#988,#988,#988,#988,#988,#988,#988,#988,#998,#998,#998,#998,#998,#998,#998,#998,#999,#a99,#a99,#a99,#a99,#aa9,#aa9,#aa9,#aa9,#aa9,#aa9,#aa9,#aaa,#bba,#ccb,#ddd,#edd)"></i><i style="left:537.1px;width:3.1px;background:linear-gradient(#000 31.6%,#554 31.6%,#554,#555,#555,#555,#555,#555,#555,#555,#555,#555,#555,#555,#555,#555,#555,#555,#555,#655,#655,#655,#655,#665,#665,#666,#766,#776,#777,#777,#777,#777,#777,#777,#777,#777,#777,#877,#877,#877,#877,#877,#998,#998,#998,#998,#999,#a99,#a99,#a99,#a99,#aa9,#aa9,#aa9,#aa9,#aa9,#aa9,#aa9,#aaa,#bba,#ccb,#ddd,#edd)"></i><i style="left:540px;width:3.1px;background:linear-gradient(#000 31.6%,#554 31.6%,#554,#555,#555,#555,#555,#555,#555,#555,#555,#555,#555,#555,#555,#555,#555,#555,#555,#655,#655,#655,#655,#655,#655,#655,#666,#776,#776,#776,#776,#776,#776,#776,#776,#776,#776,#766,#766,#766,#766,#777,#998,#998,#998,#998,#999,#a99,#a99,#a99,#a99,#aa9,#aa9,#aa9,#aa9,#aa9,#aa9,#aa9,#aaa,#bba,#ccb,#ddd,#edd)"></i><i style="left:543px;width:3.1px;background:linear-gradient(#000 31.6%,#554 31.6%,#554,#555,#555,#555,#555,#555,#555,#555,#555,#555,#555,#555,#555,#555,#555,#555,#555,#655,#655,#655,#655,#655,#655,#655,#666,#776,#776,#776,#776,#776,#776,#776,#776,#776,#776,#766,#766,#766,#766,#777,#998,#998,#998,#998,#999,#a99,#a99,#a99,#a99,#aa9,#aa9,#aaa,#aa9,#aa9,#aa9,#aa9,#aaa,#bba,#ccb,#ddd,#edd)"></i><i style="left:545.9px;width:3.1px;background:linear-gradient(#000 31.6%,#554 31.6%,#554,#555,#555,#555,#555,#555,#555,#555,#555,#555,#555,#555,#555,#555,#555,#555,#555,#655,#655,#655,#655,#655,#655,#655,#666,#776,#776,#776,#776,#776,#776,#776,#776,#776,#776,#766,#766,#766,#766,#777,#998,#998,#998,#998,#999,#a99,#a99,#a99,#a99,#aa9,#aaa,#aaa,#aa9,#aa9,#aa9,#aa9,#aaa,#bba,#ccb,#ddd,#edd)"></i><i style="left:548.8px;width:3.1px;background:linear-gradient(#000 31.6%,#554 31.6%,#554,#555,#555,#555,#555,#555,#555,#555,#555,#555,#555,#555,#555,#555,#555,#555,#555,#655,#655,#655,#655,#655,#655,#655,#666,#776,#776,#776,#776,#776,#776,#776,#776,#776,#776,#766,#766,#766,#766,#777,#998,#998,#998,#998,#999,#a99,#a99,#a99,#a99,#aa9,#aaa,#aaa,#aa9,#aa9,#aa9,#aa9,#aaa,#bba,#ccb,#ddd,#edd)"></i><i style="left:551.7px;width:3.1px;background:linear-gradient(#000 31.6%,#554 31.6%,#554,#555,#555,#555,#555,#555,#555,#555,#555,#555,#555,#555,#555,#555,#555,#555,#555,#655,#655,#655,#655,#655,#655,#655,#666,#776,#776,#776,#776,#776,#776,#776,#776,#776,#776,#766,#766,#766,#766,#777,#998,#998,#998,#998,#999,#a99,#a99,#a99,#a99,#aa9,#aaa,#aaa,#aa9,#aa9,#aa9,#aa9,#aaa,#bba,#ccb,#ddd,#edd)"></i><i style="left:554.6px;width:3.1px;background:linear-gradient(#000 31.6%,#554 31.6%,#554,#555,#555,#555,#555,#555,#555,#555,#555,#555,#555,#555,#555,#555,#555,#555,#555,#655,#655,#655,#655,#655,#655,#655,#666,#776,#776,#776,#776,#776,#776,#776,#776,#776,#776,#766,#766,#766,#766,#777,#998,#998,#998,#998,#999,#a99,#a99,#a99,#a99,#aa9,#aaa,#aaa,#aa9,#aa9,#aa9,#aa9,#aaa,#bba,#ccb,#ddc,#edd)"></i><i style="left:557.5px;width:3.1px;background:linear-gradient(#000 31.6%,#555 31.6%,#555,#555,#555,#655,#655,#655,#655,#655,#655,#655,#655,#655,#655,#655,#655,#655,#655,#665,#665,#665,#665,#665,#665,#665,#776,#877,#877,#877,#877,#877,#877,#877,#877,#877,#877,#776,#776,#776,#776,#777,#998,#998,#998,#998,#999,#a99,#a99,#a99,#a99,#aa9,#aaa,#aaa,#aa9,#aa9,#aa9,#aa9,#aaa,#bba,#ccb,#ddc,#edd)"></i><i style="left:560.5px;width:3.1px;background:linear-gradient(#000 31.6%,#555 31.6%,#555,#555,#555,#655,#655,#655,#655,#655,#655,#655,#655,#655,#655,#655,#655,#655,#655,#665,#665,#665,#665,#665,#665,#665,#776,#877,#877,#877,#877,#877,#877,#877,#877,#877,#877,#776,#776,#776,#776,#777,#998,#998,#998,#998,#999,#a99,#a99,#a99,#a99,#aa9,#aaa,#aaa,#aa9,#aa9,#aa9,#aa9,#aaa,#bba,#ccb,#ddc,#edd)"></i><i style="left:563.5px;width:3.1px;background:linear-gradient(#000 31.6%,#555 31.6%,#555,#555,#555,#655,#655,#655,#655,#655,#655,#655,#655,#655,#655,#655,#655,#655,#655,#665,#665,#665,#665,#665,#665,#665,#776,#877,#877,#877,#877,#877,#877,#877,#877,#877,#877,#776,#776,#776,#776,#777,#998,#998,#998,#998,#999,#a99,#a99,#a99,#a99,#aa9,#aaa,#aaa,#aa9,#aa9,#aa9,#aa9,#aaa,#bba,#ccb,#ddc,#edd)"></i><i style="left:566.5px;width:3.1px;background:linear-gradient(#000 31.6%,#555 31.6%,#555,#555,#555,#655,#655,#655,#655,#655,#655,#655,#655,#655,#655,#655,#655,#655,#655,#665,#665,#665,#665,#665,#665,#665,#776,#877,#877,#877,#877,#877,#877,#877,#877,#877,#877,#776,#776,#776,#776,#777,#998,#998,#998,#998,#999,#a99,#a99,#a99,#a99,#aa9,#aaa,#aaa,#aa9,#aa9,#aa9,#aa9,#aaa,#bba,#cbb,#ddc,#edd)"></i><i style="left:569.5px;width:3.1px;background:linear-gradient(#000 31.6%,#555 31.6%,#555,#555,#555,#655,#655,#655,#655,#655,#655,#655,#655,#655,#655,#655,#655,#655,#655,#665,#665,#665,#665,#665,#665,#665,#776,#877,#877,#877,#877,#877,#877,#877,#877,#877,#877,#776,#776,#776,#776,#777,#998,#998,#998,#998,#999,#a99,#a99,#a99,#a99,#aa9,#aaa,#aaa,#aa9,#aa9,#aa9,#aa9,#aaa,#bba,#cbb,#ddc,#edd)"></i><i style="left:572.5px;width:3.1px;background:linear-gradient(#000 31.6%,#555 31.6%,#555,#555,#555,#655,#655,#655,#655,#655,#655,#655,#655,#655,#655,#655,#655,#655,#655,#665,#665,#665,#665,#665,#665,#665,#776,#877,#877,#877,#877,#877,#877,#877,#877,#877,#877,#776,#776,#776,#776,#777,#998,#998,#998,#998,#999,#a99,#a99,#a99,#a99,#aa9,#aa9,#aaa,#aa9,#aa9,#aa9,#aa9,#aaa,#bba,#cbb,#ddc,#edd)"></i><i style="left:575.5px;width:3.1px;background:linear-gradient(#000 31.6%,#555 31.6%,#555,#555,#555,#655,#655,#655,#655,#665,#665,#655,#655,#655,#655,#655,#655,#655,#655,#665,#665,#665,#665,#665,#665,#665,#776,#877,#877,#877,#877,#877,#877,#877,#877,#877,#877,#776,#776,#776,#776,#777,#998,#998,#998,#998,#999,#a99,#a99,#a99,#a99,#aa9,#aa9,#aaa,#aa9,#aa9,#aa9,#aa9,#aaa,#bba,#cbb,#ddc,#edd)"></i><i style="left:578.5px;width:3.1px;background:linear-gradient(#000 31.6%,#555 31.6%,#555,#555,#555,#655,#655,#655,#665,#766,#766,#665,#655,#655,#655,#655,#655,#655,#655,#665,#665,#665,#665,#665,#665,#665,#776,#877,#877,#877,#877,#877,#877,#877,#877,#877,#877,#776,#776,#776,#776,#777,#998,#998,#998,#998,#999,#a99,#a99,#a99,#a99,#aa9,#aa9,#aa9,#aa9,#aa9,#aa9,#aa9,#aaa,#bba,#cbb,#ddc,#edd)"></i><i style="left:581.5px;width:3.1px;background:linear-gradient(#000 31.6%,#555 31.6%,#555,#555,#555,#655,#655,#655,#666,#776,#776,#665,#655,#655,#655,#655,#655,#655,#655,#665,#665,#665,#665,#665,#665,#665,#776,#877,#877,#877,#877,#877,#877,#877,#877,#877,#877,#776,#776,#776,#776,#777,#998,#998,#998,#998,#999,#a99,#a99,#a99,#a99,#aa9,#aa9,#aa9,#aa9,#aa9,#aa9,#aa9,#aaa,#bba,#cbb,#ddc,#edd)"></i><i style="left:584.5px;width:3.1px;background:linear-gradient(#000 31.6%,#555 31.6%,#555,#555,#555,#655,#655,#655,#665,#666,#666,#665,#655,#655,#655,#655,#655,#655,#655,#665,#665,#665,#665,#665,#665,#665,#776,#877,#877,#877,#877,#877,#877,#877,#877,#877,#877,#776,#776,#776,#776,#777,#998,#998,#998,#998,#999,#a99,#a99,#a99,#a99,#aa9,#aa9,#aa9,#aa9,#aa9,#aa9,#aa9,#aaa,#bba,#cbb,#ddc,#edd)"></i><i style="left:587.5px;width:3.1px;background:linear-gradient(#000 31.6%,#555 31.6%,#555,#555,#555,#655,#655,#655,#655,#655,#655,#655,#655,#655,#655,#655,#655,#655,#655,#665,#665,#665,#665,#665,#665,#665,#776,#877,#877,#877,#877,#877,#877,#877,#877,#877,#877,#776,#776,#776,#776,#777,#998,#998,#998,#998,#999,#a99,#a99,#a99,#a99,#aa9,#aa9,#aa9,#aa9,#aa9,#aa9,#aa9,#aaa,#bba,#cbb,#ddc,#edd)"></i><i style="left:590.5px;width:3.1px;background:linear-gradient(#000 31.6%,#555 31.6%,#555,#555,#555,#655,#655,#655,#655,#655,#655,#655,#655,#655,#655,#655,#655,#655,#655,#665,#665,#665,#665,#665,#665,#665,#776,#877,#877,#877,#877,#877,#877,#877,#877,#877,#877,#776,#776,#776,#776,#777,#998,#998,#998,#998,#999,#a99,#a99,#a99,#a99,#a99,#aa9,#aa9,#aa9,#aa9,#aa9,#aa9,#aaa,#bba,#cbb,#ddc,#edd)"></i><i style="left:593.5px;width:2.5px;background:linear-gradient(#000 31.6%,#544 31.6%,#544,#544,#554,#554,#554,#554,#554,#554,#554,#554,#554,#554,#554,#554,#554,#554,#554,#554,#554,#554,#555,#555,#555,#555,#665,#666,#666,#666,#766,#766,#766,#766,#766,#766,#666,#666,#666,#666,#666,#776,#988,#988,#988,#988,#998,#999,#999,#999,#999,#999,#999,#a99,#a99,#a99,#a99,#a99,#aa9,#baa,#bbb,#ccc,#ddd)"></i><i style="left:595.8px;width:2.5px;background:linear-gradient(#000 31.6%,#544 31.6%,#544,#544,#554,#554,#554,#554,#554,#554,#554,#554,#554,#554,#554,#554,#554,#554,#554,#554,#554,#554,#555,#555,#555,#555,#665,#666,#666,#666,#766,#766,#766,#766,#766,#766,#666,#666,#666,#666,#666,#776,#988,#988,#988,#988,#998,#999,#999,#999,#999,#999,#999,#a99,#a99,#a99,#a99,#a99,#aa9,#baa,#bbb,#ccc,#ddd)"></i><i style="left:598.2px;width:2.5px;background:linear-gradient(#000 31.6%,#544 31.6%,#544,#544,#554,#554,#554,#554,#554,#554,#554,#554,#554,#554,#554,#554,#554,#554,#554,#554,#554,#554,#555,#555,#555,#555,#665,#666,#666,#666,#766,#766,#766,#766,#766,#766,#666,#666,#666,#666,#666,#776,#988,#988,#988,#988,#998,#999,#999,#999,#999,#999,#999,#a99,#a99,#a99,#a99,#a99,#aa9,#baa,#bbb,#ccc,#ddd)"></i><i style="left:600.5px;width:3.1px;background:linear-gradient(#000 31.6%,#554 31.6%,#554,#554,#554,#554,#554,#554,#554,#554,#554,#554,#554,#554,#554,#554,#555,#555,#555,#555,#555,#555,#555,#555,#555,#555,#555,#555,#555,#555,#555,#655,#655,#655,#655,#655,#655,#655,#655,#665,#665,#665,#665,#665,#665,#665,#665,#665,#665,#665,#666,#666,#666,#766,#766,#776,#777,#887,#988,#999,#aa9,#aaa,#bba)"></i><i style="left:603.5px;width:3.1px;background:linear-gradient(#000 31.6%,#554 31.6%,#554,#554,#554,#554,#554,#554,#554,#554,#554,#554,#554,#554,#554,#554,#555,#555,#555,#555,#555,#555,#555,#555,#555,#555,#555,#555,#555,#555,#555,#655,#655,#655,#655,#655,#655,#655,#655,#665,#665,#665,#665,#665,#665,#665,#665,#665,#665,#665,#666,#666,#666,#766,#766,#776,#777,#887,#988,#999,#aa9,#aaa,#bba)"></i><i style="left:606.5px;width:3.1px;background:linear-gradient(#000 31.6%,#554 31.6%,#554,#554,#554,#554,#554,#554,#554,#554,#554,#554,#554,#554,#554,#554,#555,#555,#555,#555,#555,#555,#555,#555,#555,#555,#555,#555,#555,#555,#555,#655,#655,#655,#655,#655,#655,#655,#655,#665,#665,#665,#665,#665,#665,#665,#665,#665,#665,#665,#666,#666,#666,#766,#766,#776,#777,#887,#988,#999,#aa9,#aaa,#bba)"></i><i style="left:609.5px;width:3.1px;background:linear-gradient(#000 31.6%,#554 31.6%,#554,#554,#554,#554,#554,#554,#554,#554,#554,#554,#554,#554,#554,#554,#555,#555,#555,#555,#555,#555,#555,#555,#555,#555,#555,#555,#555,#555,#555,#655,#655,#655,#655,#655,#655,#655,#655,#665,#665,#665,#665,#665,#665,#665,#665,#665,#665,#665,#666,#666,#666,#766,#766,#776,#777,#887,#988,#999,#aa9,#aaa,#bba)"></i><i style="left:612.5px;width:3.1px;background:linear-gradient(#000 31.6%,#554 31.6%,#554,#554,#554,#554,#554,#554,#554,#554,#554,#554,#554,#554,#554,#554,#555,#555,#555,#555,#555,#555,#555,#555,#555,#555,#555,#555,#555,#555,#555,#655,#655,#655,#655,#655,#655,#655,#655,#665,#665,#665,#665,#665,#665,#665,#665,#665,#665,#665,#666,#666,#666,#766,#766,#776,#777,#887,#988,#999,#aa9,#aaa,#bba)"></i><i style="left:615.5px;width:2.8px;background:linear-gradient(#000 31.6%,#333 31.6%,#333,#333,#333,#333,#333,#333,#333,#333,#333,#333,#333,#333,#333,#333,#333,#333,#333,#433,#433,#433,#433,#433,#433,#433,#433,#433,#433,#433,#433,#433,#443,#443,#443,#443,#443,#443,#443,#444,#444,#444,#444,#444,#444,#444,#444,#444,#444,#444,#444,#444,#544,#544,#544,#544,#554,#555,#655,#666,#888,#a99,#bbb)"></i><i style="left:618.2px;width:2.8px;background:linear-gradient(#000 31.6%,#333 31.6%,#333,#333,#333,#333,#333,#333,#333,#333,#333,#333,#333,#333,#333,#333,#333,#333,#333,#433,#433,#433,#433,#433,#433,#433,#433,#433,#433,#433,#433,#433,#443,#443,#443,#443,#443,#443,#443,#444,#444,#444,#444,#444,#444,#444,#444,#444,#444,#444,#444,#444,#544,#544,#544,#544,#554,#555,#655,#666,#888,#a99,#bbb)"></i><i style="left:620.8px;width:2.8px;background:linear-gradient(#000 31.6%,#333 31.6%,#333,#333,#333,#333,#333,#333,#333,#333,#333,#333,#333,#333,#333,#333,#333,#333,#333,#433,#433,#433,#433,#433,#433,#433,#433,#433,#433,#433,#433,#433,#443,#443,#443,#443,#443,#443,#443,#444,#444,#444,#444,#444,#444,#444,#444,#444,#444,#444,#444,#444,#544,#544,#544,#544,#554,#555,#655,#666,#888,#a99,#bbb)"></i><i style="left:623.5px;width:2.8px;background:linear-gradient(#000 31.6%,#333 31.6%,#333,#333,#333,#333,#333,#333,#333,#333,#333,#333,#333,#333,#333,#333,#333,#333,#333,#433,#433,#433,#433,#433,#433,#433,#433,#433,#433,#433,#433,#433,#443,#443,#443,#443,#443,#443,#443,#444,#444,#444,#444,#444,#444,#444,#444,#444,#444,#444,#444,#444,#544,#544,#544,#544,#554,#555,#655,#666,#888,#a99,#bbb)"></i><i style="left:626.2px;width:2.8px;background:linear-gradient(#000 31.6%,#333 31.6%,#333,#333,#333,#333,#333,#333,#333,#333,#333,#333,#333,#333,#333,#333,#333,#333,#333,#433,#433,#433,#433,#433,#433,#433,#433,#433,#433,#433,#433,#433,#443,#443,#443,#443,#443,#443,#443,#444,#444,#444,#444,#444,#444,#444,#444,#444,#444,#444,#444,#444,#544,#544,#544,#544,#554,#555,#655,#666,#888,#a99,#bbb)"></i><i style="left:628.8px;width:2.8px;background:linear-gradient(#000 31.6%,#333 31.6%,#333,#333,#333,#333,#333,#333,#333,#333,#333,#333,#333,#333,#333,#333,#333,#333,#333,#433,#433,#433,#433,#433,#433,#433,#433,#433,#433,#433,#433,#433,#443,#443,#443,#443,#443,#443,#443,#444,#444,#444,#444,#444,#444,#444,#444,#444,#444,#444,#444,#444,#544,#544,#544,#544,#554,#555,#655,#666,#888,#a99,#bbb)"></i><i style="left:631.5px;width:3.1px;background:linear-gradient(#000 46.8%,#322 46.8%,#322,#322,#322,#322,#322,#322,#322,#322,#322,#322,#322,#322,#322,#322,#322,#322,#322,#322,#322,#332,#333,#433,#443,#443,#444,#444,#444,#444,#444,#444,#444,#444,#444,#444,#444,#444,#444,#444,#444,#444,#444,#444,#444,#444,#544,#555,#766,#baa)"></i><i style="left:634.5px;width:3.1px;background:linear-gradient(#000 46.8%,#322 46.8%,#322,#322,#322,#322,#322,#322,#322,#322,#322,#322,#322,#322,#322,#322,#322,#322,#322,#322,#322,#332,#333,#433,#443,#443,#444,#444,#444,#444,#444,#444,#444,#444,#444,#444,#444,#444,#444,#444,#444,#444,#444,#444,#444,#444,#544,#555,#766,#baa)"></i><i style="left:637.5px;width:3.1px;background:linear-gradient(#000 46.8%,#322 46.8%,#322,#322,#322,#322,#322,#322,#322,#322,#322,#322,#322,#322,#322,#322,#322,#322,#322,#322,#322,#332,#333,#433,#443,#443,#444,#444,#444,#444,#444,#444,#444,#444,#444,#444,#444,#444,#444,#444,#444,#444,#444,#444,#444,#444,#544,#555,#766,#baa)"></i><i style="left:640.5px;width:3.1px;background:linear-gradient(#000 46.8%,#322 46.8%,#322,#322,#322,#322,#322,#322,#322,#322,#322,#322,#322,#322,#322,#322,#322,#322,#322,#322,#322,#332,#333,#433,#443,#443,#444,#444,#444,#444,#444,#444,#444,#444,#444,#444,#444,#444,#444,#444,#444,#444,#444,#444,#444,#444,#544,#555,#766,#baa)"></i><i style="left:643.5px;width:3.1px;background:linear-gradient(#000 46.8%,#322 46.8%,#322,#322,#322,#322,#322,#322,#322,#322,#322,#322,#322,#322,#322,#322,#322,#322,#322,#322,#322,#332,#333,#433,#443,#443,#444,#444,#444,#444,#444,#444,#444,#444,#444,#444,#444,#444,#444,#444,#444,#444,#444,#444,#444,#444,#544,#555,#766,#baa)"></i><i style="left:646.5px;width:3.1px;background:linear-gradient(#000 46.8%,#322 46.8%,#322,#322,#322,#322,#322,#322,#322,#322,#322,#322,#322,#322,#322,#322,#322,#322,#322,#322,#322,#332,#333,#433,#443,#443,#444,#444,#444,#444,#444,#444,#444,#444,#444,#444,#444,#444,#444,#444,#444,#444,#444,#444,#444,#444,#544,#555,#766,#baa)"></i><i style="left:649.5px;width:3.1px;background:linear-gradient(#000 46.8%,#322 46.8%,#322,#322,#322,#322,#322,#322,#322,#322,#322,#322,#322,#322,#322,#322,#322,#322,#322,#322,#322,#332,#333,#433,#443,#443,#444,#444,#444,#444,#444,#444,#444,#444,#444,#444,#444,#444,#444,#444,#444,#444,#444,#444,#444,#444,#544,#555,#766,#baa)"></i><i style="left:652.5px;width:3.1px;background:linear-gradient(#000 46.8%,#322 46.8%,#322,#322,#322,#322,#322,#322,#322,#322,#322,#322,#322,#322,#322,#322,#322,#322,#322,#322,#322,#332,#333,#433,#443,#443,#444,#444,#444,#444,#444,#444,#444,#444,#444,#444,#444,#444,#444,#444,#444,#444,#444,#444,#444,#444,#544,#555,#766,#baa)"></i><i style="left:655.5px;width:3.1px;background:linear-gradient(#000 46.8%,#322 46.8%,#322,#322,#322,#322,#322,#322,#322,#322,#322,#322,#322,#322,#322,#322,#322,#322,#322,#322,#322,#332,#333,#433,#433,#443,#443,#444,#444,#444,#444,#444,#444,#444,#444,#443,#443,#443,#443,#443,#443,#443,#443,#443,#443,#444,#544,#555,#766,#988)"></i><i style="left:658.4px;width:3.1px;background:linear-gradient(#000 46.8%,#322 46.8%,#322,#322,#322,#322,#322,#322,#322,#322,#322,#322,#322,#322,#322,#322,#322,#322,#322,#322,#322,#332,#333,#433,#433,#443,#443,#444,#444,#444,#444,#444,#444,#444,#444,#443,#443,#443,#443,#443,#443,#443,#443,#443,#443,#444,#544,#555,#766,#988)"></i><i style="left:661.3px;width:3.1px;background:linear-gradient(#000 46.8%,#322 46.8%,#322,#322,#322,#322,#322,#322,#322,#322,#322,#322,#322,#322,#322,#322,#322,#322,#322,#322,#322,#332,#333,#433,#433,#443,#443,#444,#444,#444,#444,#444,#444,#444,#444,#443,#443,#443,#443,#443,#443,#443,#443,#443,#443,#444,#544,#555,#766,#988)"></i><i style="left:664.2px;width:3.1px;background:linear-gradient(#000 46.8%,#322 46.8%,#322,#322,#322,#322,#322,#322,#322,#322,#322,#322,#322,#322,#322,#322,#322,#322,#322,#322,#322,#332,#333,#433,#433,#443,#443,#444,#444,#444,#444,#444,#444,#444,#444,#443,#443,#443,#443,#443,#443,#443,#443,#443,#443,#444,#544,#555,#766,#988)"></i><i style="left:667.2px;width:3.1px;background:linear-gradient(#000 46.8%,#322 46.8%,#322,#322,#322,#322,#322,#322,#322,#322,#322,#322,#322,#322,#322,#322,#322,#322,#322,#322,#322,#332,#333,#433,#433,#443,#443,#444,#444,#444,#444,#444,#444,#444,#444,#443,#443,#443,#443,#443,#443,#443,#443,#443,#443,#444,#544,#555,#766,#988)"></i><i style="left:670.1px;width:3.1px;background:linear-gradient(#000 46.8%,#322 46.8%,#322,#322,#322,#322,#322,#322,#322,#322,#322,#322,#322,#322,#322,#322,#322,#322,#322,#322,#322,#332,#333,#433,#433,#443,#443,#444,#444,#444,#444,#444,#444,#444,#444,#443,#443,#443,#443,#443,#443,#443,#443,#443,#443,#444,#544,#555,#766,#988)"></i><i style="left:673px;width:3.1px;background:linear-gradient(#000 46.8%,#322 46.8%,#322,#322,#322,#322,#322,#322,#322,#322,#322,#322,#322,#322,#322,#322,#322,#322,#322,#322,#322,#332,#333,#433,#433,#443,#443,#444,#444,#444,#444,#444,#444,#444,#444,#443,#443,#443,#443,#443,#443,#443,#443,#443,#443,#444,#544,#555,#766,#988)"></i><i style="left:675.9px;width:3.1px;background:linear-gradient(#000 46.8%,#322 46.8%,#322,#322,#322,#322,#322,#322,#322,#322,#322,#322,#322,#322,#322,#322,#322,#322,#322,#322,#322,#332,#333,#433,#433,#443,#443,#444,#444,#444,#444,#444,#444,#444,#444,#443,#443,#443,#443,#443,#443,#443,#443,#443,#443,#444,#544,#555,#766,#988)"></i><i style="left:678.8px;width:3.1px;background:linear-gradient(#000 46.8%,#322 46.8%,#322,#322,#322,#322,#322,#322,#322,#322,#322,#322,#322,#322,#322,#322,#322,#322,#322,#322,#322,#332,#333,#433,#433,#443,#443,#444,#444,#444,#444,#444,#444,#444,#444,#443,#443,#443,#443,#443,#443,#443,#443,#443,#443,#444,#544,#555,#766,#988)"></i><i style="left:681.8px;width:3.1px;background:linear-gradient(#000 46.8%,#322 46.8%,#322,#322,#322,#322,#322,#322,#322,#322,#322,#322,#322,#322,#322,#322,#322,#322,#322,#322,#322,#332,#333,#433,#433,#443,#443,#444,#444,#444,#444,#444,#444,#444,#444,#443,#443,#443,#443,#443,#443,#443,#443,#443,#443,#444,#544,#555,#766,#988)"></i><i style="left:684.7px;width:3.1px;background:linear-gradient(#000 46.8%,#322 46.8%,#322,#322,#322,#322,#322,#322,#322,#322,#322,#322,#322,#322,#322,#322,#322,#322,#322,#322,#322,#332,#333,#433,#433,#443,#443,#444,#444,#444,#444,#444,#444,#444,#444,#443,#443,#443,#443,#443,#443,#443,#443,#443,#443,#444,#544,#555,#766,#988)"></i><i style="left:687.6px;width:3.1px;background:linear-gradient(#000 46.8%,#322 46.8%,#322,#322,#322,#322,#322,#322,#322,#322,#322,#322,#322,#322,#322,#322,#322,#322,#322,#322,#322,#332,#333,#433,#433,#443,#443,#444,#444,#444,#444,#444,#444,#444,#444,#443,#443,#443,#443,#443,#443,#443,#443,#443,#443,#444,#544,#555,#766,#988)"></i><i style="left:690.5px;width:3.1px;background:linear-gradient(#000 46.8%,#322 46.8%,#322,#322,#322,#322,#322,#322,#322,#322,#322,#322,#322,#322,#322,#322,#322,#322,#322,#322,#322,#332,#333,#433,#433,#443,#443,#443,#443,#443,#443,#443,#443,#443,#443,#443,#443,#443,#443,#443,#443,#443,#443,#443,#443,#443,#544,#554,#666,#776)"></i><i style="left:693.4px;width:3.1px;background:linear-gradient(#000 46.8%,#322 46.8%,#322,#322,#322,#322,#322,#322,#322,#322,#322,#322,#322,#322,#322,#322,#322,#322,#322,#322,#322,#332,#333,#433,#433,#443,#443,#443,#443,#443,#443,#443,#443,#443,#443,#443,#443,#443,#443,#443,#443,#443,#443,#443,#443,#443,#544,#554,#666,#776)"></i><i style="left:696.3px;width:3.1px;background:linear-gradient(#000 46.8%,#322 46.8%,#322,#322,#322,#322,#322,#322,#322,#322,#322,#322,#322,#322,#322,#322,#322,#322,#322,#322,#322,#332,#333,#433,#433,#443,#443,#443,#443,#443,#443,#443,#443,#443,#443,#443,#443,#443,#443,#443,#443,#443,#443,#443,#443,#443,#544,#554,#666,#776)"></i><i style="left:699.2px;width:3.1px;background:linear-gradient(#000 46.8%,#322 46.8%,#322,#322,#322,#322,#322,#322,#322,#322,#322,#322,#322,#322,#322,#322,#322,#322,#322,#322,#322,#332,#333,#433,#433,#443,#443,#443,#443,#443,#443,#443,#443,#443,#443,#443,#443,#443,#443,#443,#443,#443,#443,#443,#443,#443,#544,#554,#666,#776)"></i><i style="left:702.2px;width:3.1px;background:linear-gradient(#000 46.8%,#322 46.8%,#322,#322,#322,#322,#322,#322,#322,#322,#322,#322,#322,#322,#322,#322,#322,#322,#322,#322,#322,#332,#333,#433,#433,#443,#443,#443,#443,#443,#443,#443,#443,#443,#443,#443,#443,#443,#443,#443,#443,#443,#443,#443,#443,#443,#544,#554,#666,#776)"></i><i style="left:705.1px;width:3.1px;background:linear-gradient(#000 46.8%,#322 46.8%,#322,#322,#322,#322,#322,#322,#322,#322,#322,#322,#322,#322,#322,#322,#322,#322,#322,#322,#322,#332,#333,#433,#433,#443,#443,#443,#443,#443,#443,#443,#443,#443,#443,#443,#443,#443,#443,#443,#443,#443,#443,#443,#443,#443,#544,#554,#666,#776)"></i><i style="left:708px;width:3.1px;background:linear-gradient(#000 46.8%,#322 46.8%,#322,#322,#322,#322,#322,#322,#322,#322,#322,#322,#322,#322,#322,#322,#322,#322,#322,#322,#322,#332,#333,#433,#433,#443,#443,#443,#443,#443,#443,#443,#443,#443,#443,#443,#443,#443,#443,#443,#443,#443,#443,#443,#443,#443,#544,#554,#666,#776)"></i><i style="left:710.9px;width:3.1px;background:linear-gradient(#000 46.8%,#322 46.8%,#322,#322,#322,#322,#322,#322,#322,#322,#322,#322,#322,#322,#322,#322,#322,#322,#322,#322,#322,#332,#333,#433,#433,#443,#443,#443,#443,#443,#443,#443,#443,#443,#443,#443,#443,#443,#443,#443,#443,#443,#443,#443,#443,#443,#544,#554,#666,#776)"></i><i style="left:713.8px;width:3.1px;background:linear-gradient(#000 46.8%,#322 46.8%,#322,#322,#322,#322,#322,#322,#322,#322,#322,#322,#322,#322,#322,#322,#322,#322,#322,#322,#322,#332,#333,#433,#433,#443,#443,#443,#443,#443,#443,#443,#443,#443,#443,#443,#443,#443,#443,#443,#443,#443,#443,#443,#443,#443,#544,#554,#666,#776)"></i><i style="left:716.8px;width:3.1px;background:linear-gradient(#000 46.8%,#322 46.8%,#322,#322,#322,#322,#322,#322,#322,#322,#322,#322,#322,#322,#322,#322,#322,#322,#322,#322,#322,#332,#333,#433,#433,#443,#443,#443,#443,#443,#443,#443,#443,#443,#443,#443,#443,#443,#443,#443,#443,#443,#443,#443,#443,#443,#544,#554,#666,#776)"></i><i style="left:719.7px;width:3.1px;background:linear-gradient(#000 46.8%,#322 46.8%,#322,#322,#322,#322,#322,#322,#322,#322,#322,#322,#322,#322,#322,#322,#322,#322,#322,#322,#322,#332,#333,#433,#433,#443,#443,#443,#443,#443,#443,#443,#443,#443,#443,#443,#443,#443,#443,#443,#443,#443,#443,#443,#443,#443,#544,#554,#666,#776)"></i><i style="left:722.6px;width:3.1px;background:linear-gradient(#000 46.8%,#322 46.8%,#322,#322,#322,#322,#322,#322,#322,#322,#322,#322,#322,#322,#322,#322,#322,#322,#322,#322,#322,#332,#333,#433,#433,#443,#443,#443,#443,#443,#443,#443,#443,#443,#443,#443,#443,#443,#443,#443,#443,#443,#443,#443,#443,#443,#544,#554,#666,#776)"></i><i style="left:725.5px;width:3.1px;background:linear-gradient(#000 46.8%,#322 46.8%,#322,#322,#322,#322,#322,#322,#322,#322,#322,#322,#322,#322,#322,#322,#322,#322,#322,#322,#322,#332,#333,#433,#433,#433,#443,#443,#443,#443,#443,#443,#443,#443,#443,#443,#433,#433,#433,#433,#433,#433,#433,#433,#433,#443,#544,#554,#666,#776)"></i><i style="left:728.5px;width:3.1px;background:linear-gradient(#000 46.8%,#322 46.8%,#322,#322,#322,#322,#322,#322,#322,#322,#322,#322,#322,#322,#322,#322,#322,#322,#322,#322,#322,#332,#333,#433,#433,#433,#443,#443,#443,#443,#443,#443,#443,#443,#443,#443,#433,#433,#433,#433,#433,#433,#433,#433,#433,#443,#544,#554,#666,#776)"></i><i style="left:731.5px;width:3.1px;background:linear-gradient(#000 46.8%,#322 46.8%,#322,#322,#322,#322,#322,#322,#322,#322,#322,#322,#322,#322,#322,#322,#322,#322,#322,#322,#322,#332,#333,#433,#433,#433,#443,#443,#443,#443,#443,#443,#443,#443,#443,#443,#433,#433,#433,#433,#433,#433,#433,#433,#433,#443,#544,#554,#666,#776)"></i><i style="left:734.5px;width:3.1px;background:linear-gradient(#000 46.8%,#322 46.8%,#322,#322,#322,#322,#322,#322,#322,#322,#322,#322,#322,#322,#322,#322,#322,#322,#322,#322,#322,#332,#333,#433,#433,#433,#443,#443,#443,#443,#443,#443,#443,#443,#443,#443,#433,#433,#433,#433,#433,#433,#433,#433,#433,#443,#544,#554,#666,#776)"></i><i style="left:737.5px;width:3.1px;background:linear-gradient(#000 46.8%,#322 46.8%,#322,#322,#322,#322,#322,#322,#322,#322,#322,#322,#322,#322,#322,#322,#322,#322,#322,#322,#322,#332,#333,#433,#433,#433,#443,#443,#443,#443,#443,#443,#443,#443,#443,#443,#433,#433,#433,#433,#433,#433,#433,#433,#433,#443,#544,#554,#666,#776)"></i><i style="left:740.5px;width:3.1px;background:linear-gradient(#000 46.8%,#322 46.8%,#322,#322,#322,#322,#322,#322,#322,#322,#322,#322,#322,#322,#322,#322,#322,#322,#322,#322,#322,#332,#333,#433,#433,#433,#443,#443,#443,#443,#443,#443,#443,#443,#443,#443,#433,#433,#433,#433,#433,#433,#433,#433,#433,#443,#544,#554,#666,#776)"></i><i style="left:743.5px;width:3.1px;background:linear-gradient(#000 46.8%,#322 46.8%,#322,#322,#322,#322,#322,#322,#322,#322,#322,#322,#322,#322,#322,#322,#322,#322,#322,#322,#322,#332,#333,#433,#433,#433,#443,#443,#443,#443,#443,#443,#443,#443,#443,#443,#433,#433,#433,#433,#433,#433,#433,#433,#433,#443,#544,#554,#666,#776)"></i><i style="left:746.5px;width:3.1px;background:linear-gradient(#000 46.8%,#322 46.8%,#322,#322,#322,#322,#322,#322,#322,#322,#322,#322,#322,#322,#322,#322,#322,#322,#322,#322,#322,#332,#333,#433,#433,#433,#443,#443,#443,#443,#443,#443,#443,#443,#443,#443,#433,#433,#433,#433,#433,#433,#433,#433,#433,#443,#544,#554,#666,#776)"></i><i style="left:749.5px;width:3.1px;background:linear-gradient(#000 46.8%,#322 46.8%,#322,#322,#322,#322,#322,#322,#322,#322,#322,#322,#322,#322,#322,#322,#322,#322,#322,#322,#322,#332,#333,#433,#433,#433,#443,#443,#443,#443,#443,#443,#443,#443,#443,#443,#433,#433,#433,#433,#433,#433,#433,#433,#433,#443,#544,#554,#666,#776)"></i><i style="left:752.5px;width:3.1px;background:linear-gradient(#000 46.8%,#322 46.8%,#322,#322,#322,#322,#322,#322,#322,#322,#322,#322,#322,#322,#322,#322,#322,#322,#322,#322,#322,#332,#333,#433,#433,#433,#443,#443,#443,#443,#443,#443,#443,#443,#443,#443,#433,#433,#433,#433,#433,#433,#433,#433,#433,#443,#544,#554,#666,#776)"></i><i style="left:755.5px;width:3.1px;background:linear-gradient(#000 46.8%,#322 46.8%,#322,#322,#322,#322,#322,#322,#322,#322,#322,#322,#322,#322,#322,#322,#322,#322,#322,#322,#322,#332,#333,#433,#433,#433,#443,#443,#443,#443,#443,#443,#443,#443,#443,#443,#433,#433,#433,#433,#433,#433,#433,#433,#433,#443,#544,#554,#666,#776)"></i><i style="left:758.5px;width:3.1px;background:linear-gradient(#000 46.8%,#322 46.8%,#322,#322,#322,#322,#322,#322,#322,#322,#322,#322,#322,#322,#322,#322,#322,#322,#322,#322,#322,#332,#333,#433,#433,#433,#443,#443,#443,#443,#443,#443,#443,#443,#443,#443,#433,#433,#433,#433,#433,#433,#433,#433,#433,#443,#544,#554,#666,#776)"></i><i style="left:761.5px;width:3.1px;background:linear-gradient(#000 46.8%,#322 46.8%,#322,#322,#322,#322,#322,#322,#322,#322,#322,#322,#322,#322,#322,#322,#322,#322,#322,#322,#322,#332,#333,#433,#433,#433,#443,#443,#443,#443,#443,#443,#443,#443,#443,#443,#433,#433,#433,#433,#433,#433,#433,#433,#433,#443,#544,#554,#666,#776)"></i><i style="left:764.5px;width:3.1px;background:linear-gradient(#000 46.8%,#322 46.8%,#322,#322,#322,#322,#322,#322,#322,#322,#322,#322,#322,#322,#322,#322,#322,#322,#322,#322,#322,#332,#333,#433,#433,#433,#443,#443,#443,#443,#443,#443,#443,#443,#443,#443,#433,#433,#433,#433,#433,#433,#433,#433,#433,#443,#544,#554,#666,#776)"></i><i style="left:767.5px;width:3.1px;background:linear-gradient(#000 46.8%,#322 46.8%,#322,#322,#322,#322,#322,#322,#322,#322,#322,#322,#322,#322,#322,#322,#322,#322,#322,#322,#322,#332,#333,#433,#433,#433,#443,#443,#443,#443,#443,#443,#443,#443,#443,#443,#433,#433,#433,#433,#433,#433,#433,#433,#433,#443,#544,#554,#666,#776)"></i><i style="left:770.5px;width:3px;background:linear-gradient(#000 46.8%,#322 46.8%,#322,#322,#322,#322,#322,#322,#322,#322,#322,#322,#322,#322,#322,#322,#322,#322,#322,#322,#322,#332,#333,#333,#433,#433,#433,#433,#433,#433,#433,#433,#433,#433,#433,#433,#433,#433,#433,#433,#433,#433,#433,#433,#433,#443,#444,#554,#666,#776)"></i><i style="left:773.4px;width:3px;background:linear-gradient(#000 46.8%,#322 46.8%,#322,#322,#322,#322,#322,#322,#322,#322,#322,#322,#322,#322,#322,#322,#322,#322,#322,#322,#322,#332,#333,#333,#433,#433,#433,#433,#433,#433,#433,#433,#433,#433,#433,#433,#433,#433,#433,#433,#433,#433,#433,#433,#433,#443,#444,#554,#666,#776)"></i><i style="left:776.2px;width:3px;background:linear-gradient(#000 46.8%,#322 46.8%,#322,#322,#322,#322,#322,#322,#322,#322,#322,#322,#322,#322,#322,#322,#322,#322,#322,#322,#322,#332,#333,#333,#433,#433,#433,#433,#433,#433,#433,#433,#433,#433,#433,#433,#433,#433,#433,#433,#433,#433,#433,#433,#433,#443,#444,#554,#666,#776)"></i><i style="left:779.1px;width:3px;background:linear-gradient(#000 46.8%,#322 46.8%,#322,#322,#322,#322,#322,#322,#322,#322,#322,#322,#322,#322,#322,#322,#322,#322,#322,#322,#322,#332,#333,#333,#433,#433,#433,#433,#433,#433,#433,#433,#433,#433,#433,#433,#433,#433,#433,#433,#433,#433,#433,#433,#433,#443,#444,#554,#666,#776)"></i><i style="left:781.9px;width:3px;background:linear-gradient(#000 46.8%,#322 46.8%,#322,#322,#322,#322,#322,#322,#322,#322,#322,#322,#322,#322,#322,#322,#322,#322,#322,#322,#322,#332,#333,#333,#433,#433,#433,#433,#433,#433,#433,#433,#433,#433,#433,#433,#433,#433,#433,#433,#433,#433,#433,#433,#433,#443,#444,#554,#666,#776)"></i><i style="left:784.8px;width:3px;background:linear-gradient(#000 46.8%,#322 46.8%,#322,#322,#322,#322,#322,#322,#322,#322,#322,#322,#322,#322,#322,#322,#322,#322,#322,#322,#322,#332,#333,#333,#433,#433,#433,#433,#433,#433,#433,#433,#433,#433,#433,#433,#433,#433,#433,#433,#433,#433,#433,#433,#433,#443,#444,#554,#666,#776)"></i><i style="left:787.6px;width:3px;background:linear-gradient(#000 46.8%,#322 46.8%,#322,#322,#322,#322,#322,#322,#322,#322,#322,#322,#322,#322,#322,#322,#322,#322,#322,#322,#322,#332,#333,#333,#433,#433,#433,#433,#433,#433,#433,#433,#433,#433,#433,#433,#433,#433,#433,#433,#433,#433,#433,#433,#433,#443,#444,#554,#666,#776)"></i><i style="left:790.5px;width:3px;background:linear-gradient(#000 46.8%,#322 46.8%,#322,#322,#322,#322,#322,#322,#322,#322,#322,#322,#322,#322,#322,#322,#322,#322,#322,#322,#322,#332,#333,#333,#433,#433,#433,#433,#433,#433,#433,#433,#433,#433,#433,#433,#433,#433,#433,#433,#433,#433,#433,#433,#433,#443,#444,#554,#666,#776)"></i><i style="left:793.4px;width:3px;background:linear-gradient(#000 46.8%,#322 46.8%,#322,#322,#322,#322,#322,#322,#322,#322,#322,#322,#322,#322,#322,#322,#322,#322,#322,#322,#322,#332,#333,#333,#433,#433,#433,#433,#433,#433,#433,#433,#433,#433,#433,#433,#433,#433,#433,#433,#433,#433,#433,#433,#433,#443,#444,#554,#666,#776)"></i><i style="left:796.2px;width:3px;background:linear-gradient(#000 46.8%,#322 46.8%,#322,#322,#322,#322,#322,#322,#322,#322,#322,#322,#322,#322,#322,#322,#322,#322,#322,#322,#322,#332,#333,#333,#433,#433,#433,#433,#433,#433,#433,#433,#433,#433,#433,#433,#433,#433,#433,#433,#433,#433,#433,#433,#433,#443,#444,#554,#666,#776)"></i><i style="left:799.1px;width:3px;background:linear-gradient(#000 46.8%,#322 46.8%,#322,#322,#322,#322,#322,#322,#322,#322,#322,#322,#322,#322,#322,#322,#322,#322,#322,#322,#322,#332,#333,#333,#433,#433,#433,#433,#433,#433,#433,#433,#433,#433,#433,#433,#433,#433,#433,#433,#433,#433,#433,#433,#433,#443,#444,#554,#666,#776)"></i><i style="left:801.9px;width:3px;background:linear-gradient(#000 46.8%,#322 46.8%,#322,#322,#322,#322,#322,#322,#322,#322,#322,#322,#322,#322,#322,#322,#322,#322,#322,#322,#322,#332,#333,#333,#433,#433,#433,#433,#433,#433,#433,#433,#433,#433,#433,#433,#433,#433,#433,#433,#433,#433,#433,#433,#433,#443,#444,#554,#666,#776)"></i><i style="left:804.8px;width:3px;background:linear-gradient(#000 46.8%,#322 46.8%,#322,#322,#322,#322,#322,#322,#322,#322,#322,#322,#322,#322,#322,#322,#322,#322,#322,#322,#322,#332,#333,#333,#433,#433,#433,#433,#433,#433,#433,#433,#433,#433,#433,#433,#433,#433,#433,#433,#433,#433,#433,#433,#433,#443,#444,#554,#666,#776)"></i><i style="left:807.6px;width:3px;background:linear-gradient(#000 46.8%,#322 46.8%,#322,#322,#322,#322,#322,#322,#322,#322,#322,#322,#322,#322,#322,#322,#322,#322,#322,#322,#322,#332,#333,#333,#433,#433,#433,#433,#433,#433,#433,#433,#433,#433,#433,#433,#433,#433,#433,#433,#433,#433,#433,#433,#433,#443,#444,#554,#666,#776)"></i><i style="left:810.5px;width:3.1px;background:linear-gradient(#000 46.8%,#322 46.8%,#322,#322,#322,#322,#322,#322,#322,#322,#322,#322,#322,#322,#322,#322,#322,#322,#322,#322,#322,#332,#333,#333,#433,#433,#433,#433,#433,#433,#433,#433,#433,#433,#433,#433,#433,#433,#433,#433,#433,#433,#433,#433,#433,#443,#444,#554,#666,#776)"></i><i style="left:813.5px;width:3.1px;background:linear-gradient(#000 46.8%,#322 46.8%,#322,#322,#322,#322,#322,#322,#322,#322,#322,#322,#322,#322,#322,#322,#322,#322,#322,#322,#322,#332,#333,#333,#433,#433,#433,#433,#433,#433,#433,#433,#433,#433,#433,#433,#433,#433,#433,#433,#433,#433,#433,#433,#433,#443,#444,#554,#666,#776)"></i><i style="left:816.5px;width:3.1px;background:linear-gradient(#000 46.8%,#322 46.8%,#322,#322,#322,#322,#322,#322,#322,#322,#322,#322,#322,#322,#322,#322,#322,#322,#322,#322,#322,#332,#333,#333,#433,#433,#433,#433,#433,#433,#433,#433,#433,#433,#433,#433,#433,#433,#433,#433,#433,#433,#433,#433,#433,#443,#444,#554,#666,#776)"></i><i style="left:819.5px;width:3.1px;background:linear-gradient(#000 46.8%,#322 46.8%,#322,#322,#322,#322,#322,#322,#322,#322,#322,#322,#322,#322,#322,#322,#322,#322,#322,#322,#322,#332,#333,#333,#433,#433,#433,#433,#433,#433,#433,#433,#433,#433,#433,#433,#433,#433,#433,#433,#433,#433,#433,#433,#433,#443,#444,#554,#666,#776)"></i><i style="left:822.5px;width:3.1px;background:linear-gradient(#000 46.8%,#322 46.8%,#322,#322,#322,#322,#322,#322,#322,#322,#322,#322,#322,#322,#322,#322,#322,#322,#322,#322,#322,#332,#333,#333,#433,#433,#433,#433,#433,#433,#433,#433,#433,#433,#433,#433,#433,#433,#433,#433,#433,#433,#433,#433,#433,#443,#444,#554,#666,#776)"></i><i style="left:825.5px;width:3.1px;background:linear-gradient(#000 46.8%,#322 46.8%,#322,#322,#322,#322,#322,#322,#322,#322,#322,#322,#322,#322,#322,#322,#322,#322,#322,#322,#322,#332,#333,#333,#433,#433,#433,#433,#433,#433,#433,#433,#433,#433,#433,#433,#433,#433,#433,#433,#433,#433,#433,#433,#433,#443,#444,#554,#666,#776)"></i><i style="left:828.5px;width:3.1px;background:linear-gradient(#000 46.8%,#322 46.8%,#322,#322,#322,#322,#322,#322,#322,#322,#322,#322,#322,#322,#322,#322,#322,#322,#322,#322,#322,#332,#333,#333,#433,#433,#433,#433,#433,#433,#433,#433,#433,#433,#433,#433,#433,#433,#433,#433,#433,#433,#433,#433,#433,#443,#444,#554,#666,#776)"></i><i style="left:831.5px;width:3.1px;background:linear-gradient(#000 46.8%,#322 46.8%,#322,#322,#322,#322,#322,#322,#322,#322,#322,#322,#322,#322,#322,#322,#322,#322,#322,#322,#322,#332,#333,#333,#433,#433,#433,#433,#433,#433,#433,#433,#433,#433,#433,#433,#433,#433,#433,#433,#433,#433,#433,#433,#433,#443,#444,#554,#666,#776)"></i><i style="left:834.5px;width:3.1px;background:linear-gradient(#000 46.8%,#322 46.8%,#322,#322,#322,#322,#322,#322,#322,#322,#322,#322,#322,#322,#322,#322,#322,#322,#322,#322,#322,#332,#333,#333,#433,#433,#433,#433,#433,#433,#433,#433,#433,#433,#433,#433,#433,#433,#433,#433,#433,#433,#433,#433,#433,#443,#444,#554,#666,#776)"></i><i style="left:837.5px;width:3.1px;background:linear-gradient(#000 46.8%,#322 46.8%,#322,#322,#322,#322,#322,#322,#322,#322,#322,#322,#322,#322,#322,#322,#322,#322,#322,#322,#322,#332,#333,#333,#433,#433,#433,#433,#433,#433,#433,#433,#433,#433,#433,#433,#433,#433,#433,#433,#433,#433,#433,#433,#433,#443,#444,#554,#666,#776)"></i><i style="left:840.5px;width:3.1px;background:linear-gradient(#000 46.8%,#322 46.8%,#322,#322,#322,#322,#322,#322,#322,#322,#322,#322,#322,#322,#322,#322,#322,#322,#322,#322,#322,#332,#333,#333,#433,#433,#433,#433,#433,#433,#433,#433,#433,#433,#433,#433,#433,#433,#433,#433,#433,#433,#433,#433,#433,#443,#444,#554,#666,#776)"></i><i style="left:843.5px;width:3.1px;background:linear-gradient(#000 46.8%,#322 46.8%,#322,#322,#322,#322,#322,#322,#322,#322,#322,#322,#322,#322,#322,#322,#322,#322,#322,#322,#322,#332,#333,#333,#433,#433,#433,#433,#433,#433,#433,#433,#433,#433,#433,#433,#433,#433,#433,#433,#433,#433,#433,#433,#433,#443,#444,#554,#666,#776)"></i><i style="left:126px;width:11px;top:162px;height:7px;background:#000;opacity:.55;border-radius:2px"></i><i style="left:127px;width:8px;top:183px;height:6px;background:#000;opacity:.65;border-radius:2px"></i><i style="left:167px;width:5px;top:167px;height:6px;background:#000;opacity:.65;border-radius:2px"></i><i style="left:159px;width:8px;top:216px;height:6px;background:#000;opacity:.35;border-radius:2px"></i><i style="left:149px;width:6px;top:180px;height:4px;background:#000;opacity:.45;border-radius:2px"></i><i style="left:157px;width:12px;top:218px;height:5px;background:#000;opacity:.55;border-radius:2px"></i><i style="left:139px;width:10px;top:238px;height:5px;background:#000;opacity:.65;border-radius:2px"></i><i style="left:156px;width:9px;top:181px;height:5px;background:#000;opacity:.45;border-radius:2px"></i><i style="left:179px;width:9px;top:260px;height:6px;background:#000;opacity:.35;border-radius:2px"></i><i style="left:178px;width:6px;top:258px;height:4px;background:#000;opacity:.55;border-radius:2px"></i><i style="left:277px;width:8px;top:267px;height:4px;background:#000;opacity:.35;border-radius:2px"></i><i style="left:279px;width:10px;top:252px;height:7px;background:#000;opacity:.35;border-radius:2px"></i><i style="left:293px;width:12px;top:157px;height:4px;background:#000;opacity:.65;border-radius:2px"></i><i style="left:279px;width:8px;top:148px;height:4px;background:#000;opacity:.45;border-radius:2px"></i><i style="left:342px;width:11px;top:339px;height:7px;background:#000;opacity:.35;border-radius:2px"></i><i style="left:339px;width:7px;top:184px;height:7px;background:#000;opacity:.35;border-radius:2px"></i><i style="left:351px;width:7px;top:236px;height:6px;background:#000;opacity:.55;border-radius:2px"></i><i style="left:344px;width:7px;top:179px;height:4px;background:#000;opacity:.45;border-radius:2px"></i><i style="left:356px;width:7px;top:233px;height:5px;background:#000;opacity:.55;border-radius:2px"></i><i style="left:332px;width:10px;top:266px;height:5px;background:#000;opacity:.65;border-radius:2px"></i><i style="left:357px;width:5px;top:291px;height:7px;background:#000;opacity:.55;border-radius:2px"></i><i style="left:353px;width:8px;top:265px;height:5px;background:#000;opacity:.35;border-radius:2px"></i><i style="left:345px;width:11px;top:211px;height:4px;background:#000;opacity:.65;border-radius:2px"></i><i style="left:384px;width:7px;top:256px;height:7px;background:#000;opacity:.35;border-radius:2px"></i><i style="left:394px;width:7px;top:234px;height:6px;background:#000;opacity:.55;border-radius:2px"></i><i style="left:403px;width:5px;top:174px;height:5px;background:#000;opacity:.65;border-radius:2px"></i><i style="left:386px;width:6px;top:234px;height:6px;background:#000;opacity:.65;border-radius:2px"></i><i style="left:387px;width:12px;top:262px;height:5px;background:#000;opacity:.45;border-radius:2px"></i><i style="left:403px;width:9px;top:163px;height:5px;background:#000;opacity:.35;border-radius:2px"></i><i style="left:399px;width:11px;top:277px;height:5px;background:#000;opacity:.65;border-radius:2px"></i><i style="left:417px;width:7px;top:205px;height:5px;background:#000;opacity:.55;border-radius:2px"></i><i style="left:421px;width:6px;top:276px;height:4px;background:#000;opacity:.55;border-radius:2px"></i><i style="left:417px;width:9px;top:320px;height:6px;background:#000;opacity:.45;border-radius:2px"></i><i style="left:457px;width:9px;top:170px;height:4px;background:#000;opacity:.65;border-radius:2px"></i><i style="left:492px;width:5px;top:168px;height:4px;background:#000;opacity:.65;border-radius:2px"></i><i style="left:483px;width:5px;top:217px;height:7px;background:#000;opacity:.45;border-radius:2px"></i><i style="left:480px;width:9px;top:245px;height:7px;background:#000;opacity:.55;border-radius:2px"></i><i style="left:493px;width:7px;top:274px;height:4px;background:#000;opacity:.45;border-radius:2px"></i><i style="left:491px;width:5px;top:338px;height:4px;background:#000;opacity:.45;border-radius:2px"></i><i style="left:488px;width:9px;top:237px;height:4px;background:#000;opacity:.55;border-radius:2px"></i><i style="left:544px;width:9px;top:264px;height:7px;background:#000;opacity:.35;border-radius:2px"></i><i style="left:528px;width:7px;top:313px;height:4px;background:#000;opacity:.45;border-radius:2px"></i><i style="left:541px;width:12px;top:189px;height:7px;background:#000;opacity:.65;border-radius:2px"></i><i style="left:530px;width:10px;top:255px;height:6px;background:#000;opacity:.55;border-radius:2px"></i><i style="left:548px;width:8px;top:270px;height:6px;background:#000;opacity:.55;border-radius:2px"></i><i style="left:546px;width:8px;top:154px;height:7px;background:#000;opacity:.65;border-radius:2px"></i><i style="left:541px;width:7px;top:178px;height:4px;background:#000;opacity:.55;border-radius:2px"></i><i style="left:533px;width:8px;top:229px;height:4px;background:#000;opacity:.45;border-radius:2px"></i><i style="left:564px;width:9px;top:207px;height:5px;background:#000;opacity:.55;border-radius:2px"></i><i style="left:580px;width:8px;top:258px;height:4px;background:#000;opacity:.35;border-radius:2px"></i><i style="left:569px;width:9px;top:265px;height:6px;background:#000;opacity:.65;border-radius:2px"></i><i style="left:568px;width:12px;top:158px;height:6px;background:#000;opacity:.35;border-radius:2px"></i><i style="left:559px;width:8px;top:153px;height:5px;background:#000;opacity:.65;border-radius:2px"></i><i style="left:577px;width:7px;top:337px;height:7px;background:#000;opacity:.55;border-radius:2px"></i><i style="left:583px;width:10px;top:292px;height:4px;background:#000;opacity:.65;border-radius:2px"></i><i style="left:594px;width:9px;top:238px;height:4px;background:#000;opacity:.45;border-radius:2px"></i></div><div class="frame"></div><div class="yl" style="top:536.2px">0 kHz</div><div class="yt" style="top:537.5px"></div><div class="yl" style="top:498.8px">2 kHz</div><div class="yt" style="top:500.1px"></div><div class="yl" style="top:461.4px">4 kHz</div><div class="yt" style="top:462.7px"></div><div class="yl" style="top:423.9px">6 kHz</div><div class="yt" style="top:425.2px"></div><div class="yl" style="top:386.5px">8 kHz</div><div class="yt" style="top:387.8px"></div><div class="yl" style="top:349.1px">10 kHz</div><div class="yt" style="top:350.4px"></div><div class="yl" style="top:311.7px">12 kHz</div><div class="yt" style="top:313.0px"></div><div class="yl" style="top:274.3px">14 kHz</div><div class="yt" style="top:275.6px"></div><div class="yl" style="top:236.9px">16 kHz</div><div class="yt" style="top:238.2px"></div><div class="yl" style="top:199.4px">18 kHz</div><div class="yt" style="top:200.8px"></div><div class="yl" style="top:162.0px">20 kHz</div><div class="yt" style="top:163.3px"></div><div class="yl" style="top:124.6px">22 kHz</div><div class="yt" style="top:125.9px"></div><div class="yl" style="top:87.2px">24 kHz</div><div class="yt" style="top:88.5px"></div><div class="xl" style="left:39.0px">0:00</div><div class="xt" style="left:38.5px"></div><div class="xl" style="left:260.5px">0:01</div><div class="xt" style="left:260.0px"></div><div class="xl" style="left:482.0px">0:02</div><div class="xt" style="left:481.5px"></div><div class="xl" style="left:703.5px">0:03</div><div class="xt" style="left:703.0px"></div><div class="cbar" style="background:linear-gradient(#ff0000 0%,#ff1500 2%,#ff2a00 4%,#ff3e00 6%,#ff5300 8%,#ff6800 10%,#ff7d00 12%,#ff9200 14%,#ffa600 16%,#ffbb00 18%,#ffd000 20%,#ffe500 22%,#fffa00 24%,#f1ff00 26%,#ddff00 28%,#caff00 30%,#b7ff00 32%,#a4ff00 34%,#90ff00 36%,#7dff00 38%,#6aff00 40%,#56ff00 42%,#43ff00 44%,#30ff00 46%,#1cff00 48%,#09ff00 50%,#00ff24 52%,#00ff67 54%,#00ffab 56%,#00ffee 58%,#00ebff 60%,#00d0ff 62%,#00b5ff 64%,#009aff 66%,#007eff 68%,#0063ff 70%,#0048ff 72%,#002dff 74%,#0012ff 76%,#0500ff 78%,#1400ff 80%,#2300ff 82%,#3200ff 84%,#3c00ed 86%,#4000cb 88%,#3f00a9 90%,#3a0087 92%,#320065 94%,#250044 96%,#150022 98%,#000000 100%)"></div><div class="dl" style="top:86.4px">-20 dB</div><div class="dt" style="top:88.5px"></div><div class="dl" style="top:108.9px">-25 dB</div><div class="dt" style="top:111.0px"></div><div class="dl" style="top:131.3px">-30 dB</div><div class="dt" style="top:133.4px"></div><div class="dl" style="top:153.8px">-35 dB</div><div class="dt" style="top:155.8px"></div><div class="dl" style="top:176.2px">-40 dB</div><div class="dt" style="top:178.3px"></div><div class="dl" style="top:198.7px">-45 dB</div><div class="dt" style="top:200.8px"></div><div class="dl" style="top:221.1px">-50 dB</div><div class="dt" style="top:223.2px"></div><div class="dl" style="top:243.6px">-55 dB</div><div class="dt" style="top:245.7px"></div><div class="dl" style="top:266.0px">-60 dB</div><div class="dt" style="top:268.1px"></div><div class="dl" style="top:288.4px">-65 dB</div><div class="dt" style="top:290.6px"></div><div class="dl" style="top:310.9px">-70 dB</div><div class="dt" style="top:313.0px"></div><div class="dl" style="top:333.3px">-75 dB</div><div class="dt" style="top:335.4px"></div><div class="dl" style="top:355.8px">-80 dB</div><div class="dt" style="top:357.9px"></div><div class="dl" style="top:378.2px">-85 dB</div><div class="dt" style="top:380.4px"></div><div class="dl" style="top:400.7px">-90 dB</div><div class="dt" style="top:402.8px"></div><div class="dl" style="top:423.1px">-95 dB</div><div class="dt" style="top:425.2px"></div><div class="dl" style="top:445.6px">-100 dB</div><div class="dt" style="top:447.7px"></div><div class="dl" style="top:468.0px">-105 dB</div><div class="dt" style="top:470.1px"></div><div class="dl" style="top:490.5px">-110 dB</div><div class="dt" style="top:492.6px"></div><div class="dl" style="top:512.9px">-115 dB</div><div class="dt" style="top:515.0px"></div><div class="dl" style="top:535.4px">-120 dB</div><div class="dt" style="top:537.5px"></div><div class="task"><svg class="tico" style="left:4px;top:0" width="28" height="26" viewBox="0 0 28 26"><defs><radialGradient id="og" cx="50%" cy="30%" r="70%"><stop offset="0" stop-color="#e6f4fd"/><stop offset=".45" stop-color="#5aa0d8"/><stop offset=".8" stop-color="#1c62b4"/><stop offset="1" stop-color="#2aa3e0"/></radialGradient></defs><circle cx="14" cy="13" r="11.300" fill="url(#og)" stroke="#7fb2d8" stroke-width=".8"/><path d="M7 8.500q3.300-2 6.200-.7l-1 4.600q-2.900-1.200-6.200.6z" fill="#f0641e"/><path d="M14.200 8.100q3 1.100 6.300-.7l-1.100 4.600q-3.100 1.700-6.200.6z" fill="#7cc43c"/><path d="M5.800 14q3.100-1.800 6.100-.6l-1 4.500q-2.900-1.200-6.100.7z" fill="#2f9bea"/><path d="M12.900 13.800q3.100 1.100 6.200-.7l-1 4.500q-3.100 1.700-6.200.7z" fill="#fbb91e"/></svg><svg class="tico" style="left:47.5px;top:3px" width="19" height="19" viewBox="0 0 19 19"><defs><linearGradient id="eg" x1="0" y1="0" x2="0" y2="1"><stop offset="0" stop-color="#a6e05a"/><stop offset=".6" stop-color="#6cc62c"/><stop offset="1" stop-color="#3f9d12"/></linearGradient></defs><circle cx="9.500" cy="9.500" r="8.600" fill="url(#eg)" stroke="#d6f5b4" stroke-width="1.200"/><path d="M5.200 9.400h9q0-4.300-4.600-4.300t-4.500 4.400q0 4.200 4.600 4.200 2.900 0 4.100-1.900" fill="none" stroke="#fff" stroke-width="1.500"/></svg><div class="tbtn" style="left:77px;width:75px"><svg class="tico" style="left:3px;top:0px" width="23" height="23" viewBox="0 0 20 20"><path d="M10 10L10 1A9 9 0 0 1 17.800 5.500z" fill="#b14fe0"/><path d="M10 10L17.800 5.500A9 9 0 0 1 17.800 14.500z" fill="#ef3b2f"/><path d="M10 10L17.800 14.500A9 9 0 0 1 10 19z" fill="#f8d61c"/><path d="M10 10L10 19A9 9 0 0 1 2.200 14.500z" fill="#57c83c"/><path d="M10 10L2.200 14.500A9 9 0 0 1 2.200 5.500z" fill="#25b7a6"/><path d="M10 10L2.200 5.500A9 9 0 0 1 10 1z" fill="#3c78e6"/><circle cx="10" cy="10" r="2" fill="#fff"/></svg><b>【评测骁...</b></div><div style="position:absolute;left:158px;top:0;width:31px;height:25px;background:linear-gradient(rgba(40,130,235,.4),rgba(30,110,220,.28))"></div><svg class="tico" style="left:161.5px;top:3px" width="20" height="20" viewBox="0 0 20 20"><circle cx="10" cy="10" r="9.500" fill="#1f7bee"/><circle cx="10" cy="10" r="7.200" fill="none" stroke="#fff" stroke-width="1.400"/><path d="M7.800 6v8M12.400 6L8.200 10.200L12.700 14" fill="none" stroke="#fff" stroke-width="1.900"/></svg><div class="tbtn" style="left:191px;width:75px"><svg class="tico" style="left:4px;top:2px" width="21" height="20" viewBox="0 0 21 20"><rect x="1" y="1" width="15" height="16" rx="1" fill="#eef7e6" stroke="#8fb77c" stroke-width=".8"/><rect x="11" y="10" width="9" height="8" fill="#f6fbf0" stroke="#7fae6a" stroke-width=".7"/><path d="M12.500 12.500h6M12.500 15h6" stroke="#8fc27a" stroke-width=".8"/><text x="8.300" y="14.600" text-anchor="middle" font-family="Liberation Sans,sans-serif" font-weight="bold" font-size="15" fill="#2f8a2a">X</text></svg><b>Microsof...</b></div><div class="tbtn" style="left:268px;width:75px"><svg class="tico" style="left:4px;top:2px" width="21" height="20" viewBox="0 0 21 20"><rect x="1" y="1" width="16" height="16" rx="1" fill="#fdeee4" stroke="#e7a57e" stroke-width=".8"/><circle cx="15.500" cy="13.500" r="4" fill="#f7c3a0" stroke="#ee8a55" stroke-width=".7"/><path d="M15.500 13.500v-4a4 4 0 0 1 4 4z" fill="#ee7d44"/><text x="8" y="14.600" text-anchor="middle" font-family="Liberation Sans,sans-serif" font-weight="bold" font-size="15" fill="#e2571c">P</text></svg><b>Microso...</b></div><div class="tbtn" style="left:345px;width:72px"><svg class="tico" style="left:4px;top:2px" width="22" height="21" viewBox="0 0 22 21"><path d="M2 3h6l1.500 2h10.500v13h-18z" fill="#f2d978" stroke="#c9aa4a" stroke-width=".7"/><rect x="4" y="5.500" width="14" height="6" fill="#fdfdf6" stroke="#d9cf9a" stroke-width=".5"/><rect x="3" y="9" width="16" height="4" fill="#bfe3f2"/><path d="M2 11.500h18v7.500h-18z" fill="#f7e58f" stroke="#c9aa4a" stroke-width=".7"/><rect x="5" y="13.500" width="12" height="3.500" fill="#8ccbe8"/></svg><b>Windo...</b></div><div class="tbtn" style="left:421px;width:72px"><svg class="tico" style="left:3px;top:1px" width="22" height="20" viewBox="0 0 22 20"><circle cx="11" cy="10" r="9" fill="#f3c845" stroke="#f9e39a" stroke-width="1.200"/><path d="M11 16l-5-5a3 3 0 0 1 5-3.500a3 3 0 0 1 5 3.500z" fill="#e9523a"/><path d="M11 16l-5-5q2.500 1 5 0z" fill="#3f9d52"/><path d="M11 16l5-5q-2.500 1-5 0z" fill="#3a7fd0"/></svg><b>腾讯QQ</b></div><div class="tbtn" style="left:497px;width:74px"><svg class="tico" style="left:3px;top:1px" width="22" height="20" viewBox="0 0 22 20"><circle cx="11" cy="10" r="9" fill="#d3202e" stroke="#f1a0a5" stroke-width="1"/><text x="11" y="14" text-anchor="middle" font-family="Noto Sans CJK SC,sans-serif" font-size="10" font-weight="bold" fill="#fff">秀</text></svg><b>美图秀秀</b></div><div class="tbtn" style="left:574px;width:74px"><svg class="tico" style="left:3px;top:1px" width="22" height="20" viewBox="0 0 22 20"><rect x="2" y="1" width="18" height="18" rx="2" fill="#f2c94c"/><rect x="2" y="1" width="18" height="4" fill="#58b7e8"/><circle cx="11" cy="12" r="6" fill="#e8457d"/><circle cx="11" cy="12" r="3" fill="#f7b0c8"/></svg><b>美图秀秀...</b></div><div class="tbtn act" style="left:650px;width:74px"><svg class="tico" style="left:3px;top:1px" width="24" height="20" viewBox="0 0 24 20"><path d="M3 11a9 9 0 0 1 18 0" fill="none" stroke="#222" stroke-width="2"/><ellipse cx="12" cy="12" rx="8.500" ry="7" fill="#fbe3df" stroke="#d79a95" stroke-width=".6"/><rect x="1.500" y="9" width="3.500" height="6" rx="1.500" fill="#222"/><rect x="19" y="9" width="3.500" height="6" rx="1.500" fill="#222"/><ellipse cx="12" cy="14" rx="3.200" ry="2.200" fill="#e8584e"/><circle cx="9" cy="10" r=".9" fill="#222"/><circle cx="15" cy="10" r=".9" fill="#222"/></svg><b>Spek - ...</b></div><svg class="tico" style="left:731px;top:6px" width="13" height="12" viewBox="0 0 13 12"><rect x="1" y="3" width="11" height="7" rx="1" fill="#b9c4d2" stroke="#7d8aa0" stroke-width=".6"/><path d="M3 5h7M3 7h7" stroke="#6f7c92" stroke-width=".8"/><path d="M8 3l2-2" stroke="#c9d2de" stroke-width=".8"/></svg><svg class="tico" style="left:756px;top:5px" width="10" height="15" viewBox="0 0 10 15"><rect x="2" y="2" width="6" height="12" rx="1" fill="#58c23a" stroke="#d7f2c6" stroke-width=".7"/><rect x="3.500" y=".5" width="3" height="2" fill="#d7f2c6"/><path d="M3 6h4M3 9h4" stroke="#2d7d1c" stroke-width="1"/></svg><svg class="tico" style="left:773.5px;top:6px" width="14" height="13" viewBox="0 0 14 13"><ellipse cx="7" cy="6.500" rx="6.500" ry="6" fill="#e8d21c"/><path d="M3 6.500h6M7 3.500l3 3l-3 3" fill="none" stroke="#2a4a12" stroke-width="1.500"/></svg><svg class="tico" style="left:790px;top:6px" width="13" height="13" viewBox="0 0 13 13"><circle cx="6.500" cy="6.500" r="6" fill="#2d8df2" stroke="#cfe5ff" stroke-width=".8"/><path d="M5 3.500v6M8.300 3.500L5.200 6.600L8.500 9.500" fill="none" stroke="#fff" stroke-width="1.200"/></svg><svg class="tico" style="left:805.5px;top:5px" width="13" height="15" viewBox="0 0 13 15"><rect x="1" y="1" width="5" height="5" fill="#cfd6df"/><rect x="4" y="5" width="5" height="5" fill="#5cab3d"/><rect x="7" y="9" width="5" height="5" fill="#3f8d2a"/></svg><svg class="tico" style="left:820.5px;top:5px" width="14" height="14" viewBox="0 0 14 14"><circle cx="7" cy="7" r="6.500" fill="#f0cf3e"/><circle cx="7" cy="7" r="4" fill="#f7e27a"/></svg><svg class="tico" style="left:837.5px;top:5px" width="13" height="14" viewBox="0 0 13 14"><ellipse cx="6.500" cy="5" rx="4" ry="4.500" fill="#1b1b1b"/><ellipse cx="6.500" cy="9.500" rx="5.500" ry="4" fill="#1b1b1b"/><ellipse cx="6.500" cy="10" rx="3" ry="3" fill="#f3f3f3"/><path d="M2 8.500q4.500 2 9 0" stroke="#e03a2a" stroke-width="1.400" fill="none"/><ellipse cx="6.500" cy="6.800" rx="2.200" ry="1" fill="#f0a020"/></svg><svg class="tico" style="left:853px;top:6px" width="13" height="13" viewBox="0 0 13 13"><rect x="3" y="2" width="9" height="7" fill="#2c4b6a" stroke="#dfe8f2" stroke-width="1"/><rect x="1" y="5" width="5" height="6" fill="#2c4b6a" stroke="#dfe8f2" stroke-width=".9"/><path d="M6 11h5" stroke="#dfe8f2" stroke-width="1"/></svg><svg class="tico" style="left:868px;top:6px" width="12" height="13" viewBox="0 0 12 13"><path d="M1 4.500h2.500l3.500-3.500v11l-3.500-3.500h-2.500z" fill="#f2f4f7" stroke="#8b98a8" stroke-width=".5"/><path d="M8.500 4q1.500 2.500 0 5M10 2.500q2.500 4 0 8" fill="none" stroke="#e6ebf2" stroke-width=".9"/></svg><div style="position:absolute;left:935px;top:0;width:10px;height:26px;border-left:1px solid #8fb0d2;background:linear-gradient(90deg,rgba(255,255,255,.35),rgba(255,255,255,.1))"></div></div><div class="clock">13:07<br>2017/10/22</div></div></body></html>
